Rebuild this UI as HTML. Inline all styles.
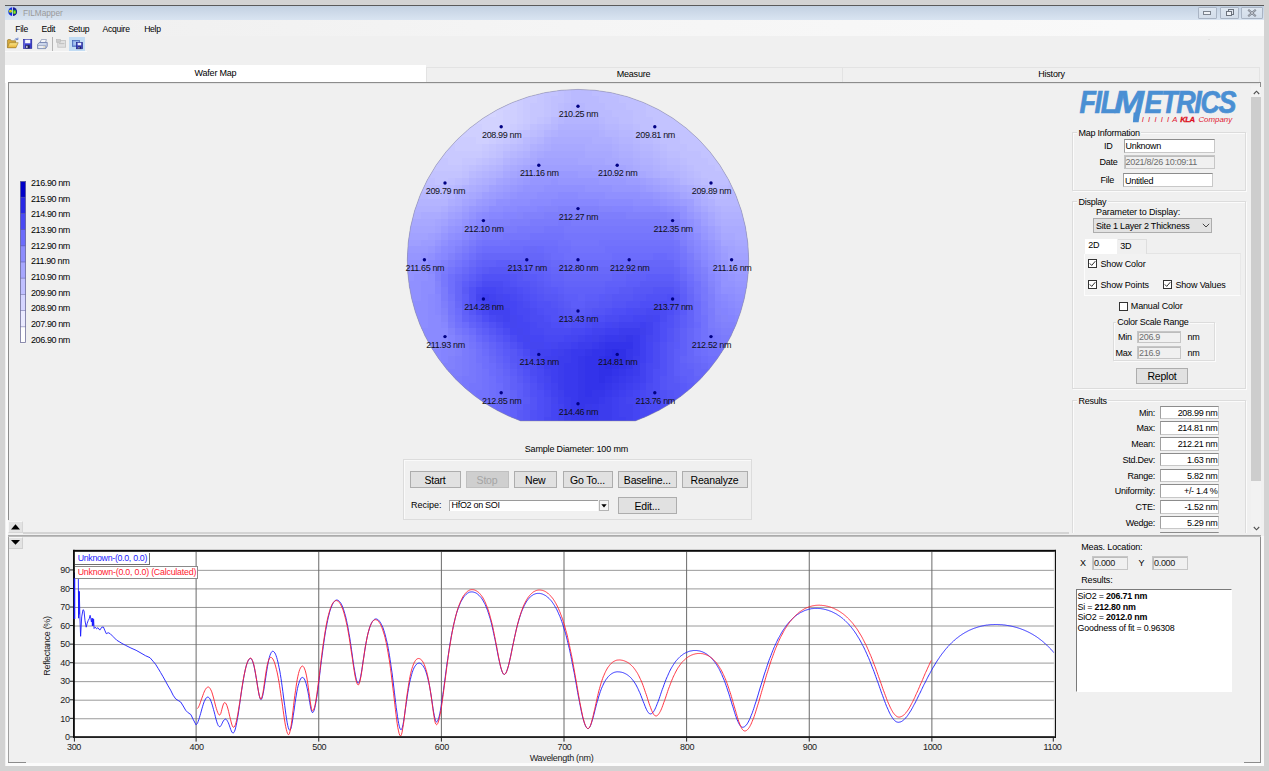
<!DOCTYPE html>
<html><head><meta charset="utf-8"><title>FILMapper</title>
<style>
html,body{margin:0;padding:0;}
body{width:1269px;height:771px;overflow:hidden;background:#d3d3d3;font-family:"Liberation Sans", Arial, sans-serif;position:relative;}
#app{position:absolute;left:0;top:0;width:1269px;height:771px;overflow:hidden;}
#app div{position:absolute;box-sizing:border-box;}
#app svg{position:absolute;overflow:visible;}
</style></head><body><div id="app">
<div style="left:5px;top:5px;width:1259px;height:761px;background:#f0f0f0;"></div>
<div style="left:5px;top:5px;width:1259px;height:1px;background:#5a5a5a;"></div>
<div style="left:5px;top:6px;width:1259px;height:14px;background:linear-gradient(#c3d1e2,#d9e4f1);"></div>
<svg style="left:8px;top:7.4px" width="9.4" height="9.4" viewBox="0 0 10 10">
<defs><clipPath id="gc"><circle cx="5" cy="5" r="4.7"/></clipPath></defs>
<g clip-path="url(#gc)">
<rect x="0" y="0" width="5" height="10" fill="#1426e6"/>
<rect x="5" y="0" width="5" height="10" fill="#141a98"/>
<ellipse cx="2.7" cy="4.6" rx="2.1" ry="1.9" fill="#38c048"/>
<ellipse cx="2.6" cy="4.5" rx="1.5" ry="1.2" fill="#f2e428"/>
<ellipse cx="2.3" cy="4.6" rx="0.9" ry="0.7" fill="#f07818"/>
<ellipse cx="6.9" cy="5.4" rx="1.9" ry="2.4" fill="#2cae34"/>
<ellipse cx="7.1" cy="5.6" rx="0.9" ry="1.3" fill="#b4d428"/>
<path d="M4.3 0 L5.2 0 L5.2 1 L4.9 1.5 L5.2 2 L4.9 2.6 L5.2 3.2 L4.9 3.8 L5.2 4.4 L4.9 5 L5.2 5.6 L4.9 6.2 L5.2 6.8 L4.9 7.4 L5.2 8 L5.2 10 L4.3 10z" fill="#eeeef6"/>
</g>
</svg>
<div style="top:7.30px;font-size:8.3px;line-height:12px;color:#9a9a9a;letter-spacing:-0.05px;white-space:nowrap;left:23px;">FILMapper</div>
<div style="left:1198px;top:6.5px;width:19px;height:12px;background:linear-gradient(#dde6f0,#d3ddea);border:1px solid #a9b4c4;border-radius:1px;"></div>
<div style="left:1220px;top:6.5px;width:19px;height:12px;background:linear-gradient(#dde6f0,#d3ddea);border:1px solid #a9b4c4;border-radius:1px;"></div>
<div style="left:1241px;top:6.5px;width:22px;height:12px;background:linear-gradient(#dde6f0,#d3ddea);border:1px solid #a9b4c4;border-radius:1px;"></div>
<div style="left:1202.5px;top:11.3px;width:8.5px;height:3.4px;background:#eef1f6;border:1px solid #7c838e;"></div>
<div style="left:1227.5px;top:9px;width:6.5px;height:5.5px;background:#dfe5ee;border:1px solid #6c737e;"></div>
<div style="left:1225.5px;top:10.8px;width:6.5px;height:5.5px;background:#eef1f6;border:1px solid #6c737e;"></div>
<svg style="left:1247px;top:9px" width="10" height="8" viewBox="0 0 10 8"><path d="M1.2 0.8 L8.8 7.2 M8.8 0.8 L1.2 7.2" stroke="#6a717c" stroke-width="2.0" fill="none"/><path d="M1.2 0.8 L8.8 7.2 M8.8 0.8 L1.2 7.2" stroke="#e6eaf0" stroke-width="0.7" fill="none"/></svg>
<div style="left:5px;top:20px;width:1259px;height:16px;background:linear-gradient(90deg,#f0f0f0 0%,#f0f0f0 8%,#f5f5f5 45%,#fafafa 100%);"></div>
<div style="top:22.60px;font-size:8.6px;line-height:12px;color:#000;letter-spacing:-0.3px;white-space:nowrap;left:15.3px;">File</div>
<div style="top:22.60px;font-size:8.6px;line-height:12px;color:#000;letter-spacing:-0.3px;white-space:nowrap;left:41.5px;">Edit</div>
<div style="top:22.60px;font-size:8.6px;line-height:12px;color:#000;letter-spacing:-0.3px;white-space:nowrap;left:68.2px;">Setup</div>
<div style="top:22.60px;font-size:8.6px;line-height:12px;color:#000;letter-spacing:-0.3px;white-space:nowrap;left:102.6px;">Acquire</div>
<div style="top:22.60px;font-size:8.6px;line-height:12px;color:#000;letter-spacing:-0.3px;white-space:nowrap;left:144.2px;">Help</div>
<div style="left:5px;top:36px;width:1259px;height:15px;background:#f0f0f0;"></div>
<div style="left:5px;top:51px;width:82px;height:1px;background:#fafafa;"></div>
<svg style="left:7px;top:37px" width="13" height="12" viewBox="0 0 13 12">
<defs><linearGradient id="fg" x1="0" y1="0" x2="0" y2="1"><stop offset="0" stop-color="#fbe88c"/><stop offset="1" stop-color="#e9b236"/></linearGradient></defs>
<path d="M0.4 10.6 L0.4 3.2 L1 2.6 L3.4 2.6 L4.4 3.8 L8.6 3.8 L8.6 10.6z" fill="#d8aa3c" stroke="#8a6c24" stroke-width="0.6"/>
<path d="M0.5 10.7 L2.5 5.7 L11.2 5.7 L9 10.7z" fill="url(#fg)" stroke="#9c7a26" stroke-width="0.6"/>
<path d="M7.6 2.6 Q9 0.9 10.6 2.2 M10.9 0.6 L10.9 2.6 L9 2.6" stroke="#5070c0" stroke-width="0.8" fill="none"/>
</svg>
<svg style="left:23px;top:39px" width="10" height="10" viewBox="0 0 10 10">
<rect x="0.3" y="0.3" width="8.5" height="9.1" fill="#3a3ccc" stroke="#1a1c8c" stroke-width="0.6"/>
<rect x="0.6" y="0.6" width="1" height="8.5" fill="#7a7ce4"/>
<rect x="2.1" y="0.7" width="5.2" height="3.6" fill="#f6f6fe"/>
<rect x="2.5" y="6.2" width="4.2" height="3.2" fill="#22224e"/>
<rect x="3.2" y="6.8" width="1.3" height="2.2" fill="#dcdcec"/>
</svg>
<svg style="left:37px;top:39px" width="11" height="11" viewBox="0 0 11 11">
<path d="M3 3.6 L4.4 0.6 L9.4 0.6 L8.4 3.6z" fill="#ffffff" stroke="#6878a0" stroke-width="0.6"/>
<path d="M0.6 5.4 L2.4 3.4 L10.2 3.4 L10.2 7.2 L8.6 9.6 L0.6 9.6z" fill="#ccd6ea" stroke="#5868a0" stroke-width="0.7"/>
<path d="M0.8 6.6 L8.6 6.6 L8.6 9.4 L0.8 9.4z" fill="#f2f4fa" stroke="#6878a0" stroke-width="0.5"/>
<rect x="6.6" y="7.6" width="1" height="0.8" fill="#c0a020"/>
</svg>
<div style="left:52px;top:37px;width:1px;height:14px;background:#b4b4b4;"></div>
<svg style="left:56px;top:39px" width="11" height="9" viewBox="0 0 11 9">
<rect x="1.8" y="1.6" width="7.8" height="6.6" fill="#e0e0e0" stroke="#c0c0c0" stroke-width="0.8"/>
<rect x="0.5" y="0.4" width="3.8" height="2.8" fill="#cecece" stroke="#b8b8b8" stroke-width="0.6"/>
<path d="M3 4.6 L8.4 4.6" stroke="#bcbcbc" stroke-width="0.9"/>
</svg>
<div style="left:69px;top:36.7px;width:16px;height:14.2px;background:#c2dcf3;"></div>
<svg style="left:72px;top:40px" width="12" height="10" viewBox="0 0 12 10">
<rect x="0.4" y="0.5" width="7" height="5.8" fill="#7aa0e0" stroke="#4060b4" stroke-width="0.7"/>
<rect x="1.4" y="1.5" width="5" height="3.4" fill="#a8c4f0"/>
<rect x="4.3" y="2.4" width="6.2" height="6.4" fill="#3a40bc" stroke="#1c2080" stroke-width="0.6"/>
<rect x="5.6" y="2.8" width="3.6" height="2.5" fill="#eceffc"/>
<rect x="6" y="6.6" width="2.9" height="2.2" fill="#1c1c54"/>
<rect x="6.5" y="7" width="0.9" height="1.5" fill="#d4d4e4"/>
</svg>
<div style="left:1208px;top:39px;width:2px;height:1px;background:#e2e2e2;"></div>
<div style="left:5.8px;top:83px;width:2.2px;height:682.5px;background:#fcfcfc;"></div>
<div style="left:5.8px;top:763px;width:1258.2px;height:2.5px;background:#fbfbfb;"></div>
<div style="left:1261px;top:536px;width:3px;height:229.5px;background:#fafafa;"></div>
<div style="left:5px;top:65px;width:421px;height:18px;background:#ffffff;"></div>
<div style="left:426px;top:67px;width:417px;height:15px;background:#f0f0f0;border:1px solid #e3e3e3;border-bottom:none;"></div>
<div style="left:843px;top:67px;width:417.2px;height:15px;background:#f0f0f0;border:1px solid #e3e3e3;border-bottom:none;border-left:none;"></div>
<div style="top:67.30px;font-size:9px;line-height:12px;color:#000;letter-spacing:-0.2px;white-space:nowrap;left:65.5px;width:300px;text-align:center;">Wafer Map</div>
<div style="top:68.20px;font-size:9px;line-height:12px;color:#000;letter-spacing:-0.2px;white-space:nowrap;left:483.5px;width:300px;text-align:center;">Measure</div>
<div style="top:68.20px;font-size:9px;line-height:12px;color:#000;letter-spacing:-0.2px;white-space:nowrap;left:901.5px;width:300px;text-align:center;">History</div>
<div style="left:8px;top:82px;width:1253px;height:438px;border:1px solid #8c8c8c;border-bottom:none;border-right:none;"></div>
<div style="left:8px;top:82px;width:1253px;height:1px;background:#8c8c8c;"></div>
<div style="left:9px;top:83px;width:1250px;height:1px;background:#e2e2e2;"></div>
<div style="left:8px;top:521px;width:15px;height:12px;background:#e3e3e3;border:1px solid #f6f6f6;border-right-color:#d6d6d6;border-bottom-color:#d6d6d6;"></div>
<svg style="left:11px;top:524px" width="9" height="6" viewBox="0 0 9 6"><path d="M0 5.4 L4.5 0.2 L9 5.4z" fill="#000"/></svg>
<div style="left:23px;top:532px;width:1046px;height:2px;background:#d4d4d4;"></div>
<div style="left:8px;top:535px;width:1253px;height:2px;background:linear-gradient(#b4b4b4,#a2a2a2 50%,#d8d8d8);"></div>
<div style="left:8px;top:537px;width:15px;height:12px;background:#e3e3e3;border:1px solid #f6f6f6;border-right-color:#d0d0d0;border-bottom-color:#d0d0d0;"></div>
<svg style="left:11px;top:540px" width="9" height="5" viewBox="0 0 9 5"><path d="M0 0 L9 0 L4.5 4.8z" fill="#000"/></svg>
<div style="left:8px;top:536px;width:1px;height:227px;background:#a0a0a0;"></div>
<div style="left:1260px;top:536px;width:1px;height:227px;background:#8c8c8c;"></div>
<div style="left:8px;top:762px;width:18px;height:1px;background:#8c8c8c;"></div>
<div style="left:1244px;top:762px;width:17px;height:1px;background:#8c8c8c;"></div>
<svg style="left:0;top:0" width="100" height="400" viewBox="0 0 100 400"><rect x="20" y="181.00" width="6" height="16.50" fill="rgb(0, 0, 200)"/><rect x="20" y="197.20" width="6" height="16.50" fill="rgb(40, 40, 228)"/><rect x="20" y="213.40" width="6" height="16.50" fill="rgb(74, 74, 244)"/><rect x="20" y="229.60" width="6" height="16.50" fill="rgb(108, 108, 251)"/><rect x="20" y="245.80" width="6" height="16.50" fill="rgb(140, 140, 253)"/><rect x="20" y="262.00" width="6" height="16.50" fill="rgb(167, 167, 254)"/><rect x="20" y="278.20" width="6" height="16.50" fill="rgb(192, 192, 255)"/><rect x="20" y="294.40" width="6" height="16.50" fill="rgb(213, 213, 255)"/><rect x="20" y="310.60" width="6" height="16.50" fill="rgb(234, 234, 255)"/><rect x="20" y="326.80" width="6" height="16.50" fill="rgb(255, 255, 255)"/><rect x="20" y="196.80" width="6" height="0.8" fill="#50508c" opacity="0.55"/><rect x="20" y="213.00" width="6" height="0.8" fill="#50508c" opacity="0.55"/><rect x="20" y="229.20" width="6" height="0.8" fill="#50508c" opacity="0.55"/><rect x="20" y="245.40" width="6" height="0.8" fill="#50508c" opacity="0.55"/><rect x="20" y="261.60" width="6" height="0.8" fill="#50508c" opacity="0.55"/><rect x="20" y="277.80" width="6" height="0.8" fill="#50508c" opacity="0.55"/><rect x="20" y="294.00" width="6" height="0.8" fill="#50508c" opacity="0.55"/><rect x="20" y="310.20" width="6" height="0.8" fill="#50508c" opacity="0.55"/><rect x="20" y="326.40" width="6" height="0.8" fill="#50508c" opacity="0.55"/><rect x="20.5" y="181.5" width="5" height="161" fill="none" stroke="#70709a" stroke-width="0.8"/></svg>
<div style="top:177.00px;font-size:9px;line-height:12px;color:#000;letter-spacing:-0.4px;white-space:nowrap;left:31px;">216.90 nm</div>
<div style="top:192.68px;font-size:9px;line-height:12px;color:#000;letter-spacing:-0.4px;white-space:nowrap;left:31px;">215.90 nm</div>
<div style="top:208.36px;font-size:9px;line-height:12px;color:#000;letter-spacing:-0.4px;white-space:nowrap;left:31px;">214.90 nm</div>
<div style="top:224.04px;font-size:9px;line-height:12px;color:#000;letter-spacing:-0.4px;white-space:nowrap;left:31px;">213.90 nm</div>
<div style="top:239.72px;font-size:9px;line-height:12px;color:#000;letter-spacing:-0.4px;white-space:nowrap;left:31px;">212.90 nm</div>
<div style="top:255.40px;font-size:9px;line-height:12px;color:#000;letter-spacing:-0.4px;white-space:nowrap;left:31px;">211.90 nm</div>
<div style="top:271.08px;font-size:9px;line-height:12px;color:#000;letter-spacing:-0.4px;white-space:nowrap;left:31px;">210.90 nm</div>
<div style="top:286.76px;font-size:9px;line-height:12px;color:#000;letter-spacing:-0.4px;white-space:nowrap;left:31px;">209.90 nm</div>
<div style="top:302.44px;font-size:9px;line-height:12px;color:#000;letter-spacing:-0.4px;white-space:nowrap;left:31px;">208.90 nm</div>
<div style="top:318.12px;font-size:9px;line-height:12px;color:#000;letter-spacing:-0.4px;white-space:nowrap;left:31px;">207.90 nm</div>
<div style="top:333.80px;font-size:9px;line-height:12px;color:#000;letter-spacing:-0.4px;white-space:nowrap;left:31px;">206.90 nm</div>
<svg style="left:0;top:0" width="1269" height="771" viewBox="0 0 1269 771" shape-rendering="crispEdges"><defs><clipPath id="wclip"><path d="M407.3 260.1 A170.7 170.7 0 0 1 748.7 260.1 A170.7 170.7 0 0 1 635.29 420.9 L520.71 420.9 A170.7 170.7 0 0 1 407.3 260.1z"/></clipPath></defs><g clip-path="url(#wclip)" shape-rendering="crispEdges"><rect x="407.3" y="89.40000000000003" width="341.4" height="341.4" fill="#8080f8"/><rect x="516.5" y="89.4" width="7.2" height="7.2" fill="#ccccff"/><rect x="523.4" y="89.4" width="14.1" height="7.2" fill="#c9c9ff"/><rect x="537.0" y="89.4" width="7.2" height="7.2" fill="#c6c6ff"/><rect x="543.9" y="89.4" width="14.1" height="7.2" fill="#c3c3ff"/><rect x="557.5" y="89.4" width="7.2" height="7.2" fill="#c0c0ff"/><rect x="564.3" y="89.4" width="7.2" height="7.2" fill="#bdbdff"/><rect x="571.2" y="89.4" width="20.9" height="7.2" fill="#babaff"/><rect x="591.7" y="89.4" width="20.9" height="7.2" fill="#bdbdff"/><rect x="612.1" y="89.4" width="20.9" height="7.2" fill="#c0c0ff"/><rect x="632.6" y="89.4" width="7.2" height="7.2" fill="#c3c3ff"/><rect x="502.9" y="96.2" width="14.1" height="7.2" fill="#cfcfff"/><rect x="516.5" y="96.2" width="7.2" height="7.2" fill="#ccccff"/><rect x="523.4" y="96.2" width="14.1" height="7.2" fill="#c9c9ff"/><rect x="537.0" y="96.2" width="7.2" height="7.2" fill="#c6c6ff"/><rect x="543.9" y="96.2" width="7.2" height="7.2" fill="#c3c3ff"/><rect x="550.7" y="96.2" width="14.1" height="7.2" fill="#c0c0ff"/><rect x="564.3" y="96.2" width="7.2" height="7.2" fill="#bdbdff"/><rect x="571.2" y="96.2" width="27.7" height="7.2" fill="#babaff"/><rect x="598.5" y="96.2" width="20.9" height="7.2" fill="#bdbdff"/><rect x="619.0" y="96.2" width="20.9" height="7.2" fill="#c0c0ff"/><rect x="639.5" y="96.2" width="14.1" height="7.2" fill="#c3c3ff"/><rect x="489.2" y="103.1" width="7.2" height="7.2" fill="#d5d5ff"/><rect x="496.1" y="103.1" width="14.1" height="7.2" fill="#d2d2ff"/><rect x="509.7" y="103.1" width="7.2" height="7.2" fill="#cfcfff"/><rect x="516.5" y="103.1" width="7.2" height="7.2" fill="#ccccff"/><rect x="523.4" y="103.1" width="7.2" height="7.2" fill="#c9c9ff"/><rect x="530.2" y="103.1" width="14.1" height="7.2" fill="#c6c6ff"/><rect x="543.9" y="103.1" width="7.2" height="7.2" fill="#c3c3ff"/><rect x="550.7" y="103.1" width="7.2" height="7.2" fill="#c0c0ff"/><rect x="557.5" y="103.1" width="7.2" height="7.2" fill="#bdbdff"/><rect x="564.3" y="103.1" width="7.2" height="7.2" fill="#babaff"/><rect x="571.2" y="103.1" width="14.1" height="7.2" fill="#b7b7ff"/><rect x="584.8" y="103.1" width="20.9" height="7.2" fill="#babaff"/><rect x="605.3" y="103.1" width="20.9" height="7.2" fill="#bdbdff"/><rect x="625.8" y="103.1" width="20.9" height="7.2" fill="#c0c0ff"/><rect x="646.3" y="103.1" width="20.9" height="7.2" fill="#c3c3ff"/><rect x="475.6" y="109.9" width="14.1" height="7.2" fill="#d2d2ff"/><rect x="489.2" y="109.9" width="7.2" height="7.2" fill="#d5d5ff"/><rect x="496.1" y="109.9" width="7.2" height="7.2" fill="#d2d2ff"/><rect x="502.9" y="109.9" width="14.1" height="7.2" fill="#cfcfff"/><rect x="516.5" y="109.9" width="7.2" height="7.2" fill="#ccccff"/><rect x="523.4" y="109.9" width="7.2" height="7.2" fill="#c9c9ff"/><rect x="530.2" y="109.9" width="14.1" height="7.2" fill="#c6c6ff"/><rect x="543.9" y="109.9" width="7.2" height="7.2" fill="#c3c3ff"/><rect x="550.7" y="109.9" width="7.2" height="7.2" fill="#c0c0ff"/><rect x="557.5" y="109.9" width="7.2" height="7.2" fill="#bdbdff"/><rect x="564.3" y="109.9" width="7.2" height="7.2" fill="#b7b7ff"/><rect x="571.2" y="109.9" width="14.1" height="7.2" fill="#b4b4ff"/><rect x="584.8" y="109.9" width="14.1" height="7.2" fill="#b7b7ff"/><rect x="598.5" y="109.9" width="14.1" height="7.2" fill="#babaff"/><rect x="612.1" y="109.9" width="20.9" height="7.2" fill="#bdbdff"/><rect x="632.6" y="109.9" width="14.1" height="7.2" fill="#c0c0ff"/><rect x="646.3" y="109.9" width="34.5" height="7.2" fill="#c3c3ff"/><rect x="468.8" y="116.7" width="34.5" height="7.2" fill="#d2d2ff"/><rect x="502.9" y="116.7" width="14.1" height="7.2" fill="#cfcfff"/><rect x="516.5" y="116.7" width="7.2" height="7.2" fill="#ccccff"/><rect x="523.4" y="116.7" width="7.2" height="7.2" fill="#c9c9ff"/><rect x="530.2" y="116.7" width="7.2" height="7.2" fill="#c6c6ff"/><rect x="537.0" y="116.7" width="7.2" height="7.2" fill="#c3c3ff"/><rect x="543.9" y="116.7" width="7.2" height="7.2" fill="#c0c0ff"/><rect x="550.7" y="116.7" width="7.2" height="7.2" fill="#babaff"/><rect x="557.5" y="116.7" width="7.2" height="7.2" fill="#b7b7ff"/><rect x="564.3" y="116.7" width="34.5" height="7.2" fill="#b4b4ff"/><rect x="598.5" y="116.7" width="7.2" height="7.2" fill="#b7b7ff"/><rect x="605.3" y="116.7" width="14.1" height="7.2" fill="#babaff"/><rect x="619.0" y="116.7" width="14.1" height="7.2" fill="#bdbdff"/><rect x="632.6" y="116.7" width="20.9" height="7.2" fill="#c0c0ff"/><rect x="653.1" y="116.7" width="34.5" height="7.2" fill="#c3c3ff"/><rect x="461.9" y="123.5" width="20.9" height="7.2" fill="#cfcfff"/><rect x="482.4" y="123.5" width="20.9" height="7.2" fill="#d2d2ff"/><rect x="502.9" y="123.5" width="7.2" height="7.2" fill="#cfcfff"/><rect x="509.7" y="123.5" width="7.2" height="7.2" fill="#ccccff"/><rect x="516.5" y="123.5" width="7.2" height="7.2" fill="#c9c9ff"/><rect x="523.4" y="123.5" width="7.2" height="7.2" fill="#c6c6ff"/><rect x="530.2" y="123.5" width="7.2" height="7.2" fill="#c0c0ff"/><rect x="537.0" y="123.5" width="7.2" height="7.2" fill="#bdbdff"/><rect x="543.9" y="123.5" width="7.2" height="7.2" fill="#babaff"/><rect x="550.7" y="123.5" width="7.2" height="7.2" fill="#b7b7ff"/><rect x="557.5" y="123.5" width="41.4" height="7.2" fill="#b1b1ff"/><rect x="598.5" y="123.5" width="7.2" height="7.2" fill="#b4b4ff"/><rect x="605.3" y="123.5" width="14.1" height="7.2" fill="#b7b7ff"/><rect x="619.0" y="123.5" width="14.1" height="7.2" fill="#babaff"/><rect x="632.6" y="123.5" width="7.2" height="7.2" fill="#bdbdff"/><rect x="639.5" y="123.5" width="14.1" height="7.2" fill="#c0c0ff"/><rect x="653.1" y="123.5" width="41.4" height="7.2" fill="#c3c3ff"/><rect x="455.1" y="130.4" width="48.2" height="7.2" fill="#cfcfff"/><rect x="502.9" y="130.4" width="7.2" height="7.2" fill="#ccccff"/><rect x="509.7" y="130.4" width="7.2" height="7.2" fill="#c9c9ff"/><rect x="516.5" y="130.4" width="7.2" height="7.2" fill="#c3c3ff"/><rect x="523.4" y="130.4" width="7.2" height="7.2" fill="#c0c0ff"/><rect x="530.2" y="130.4" width="7.2" height="7.2" fill="#bdbdff"/><rect x="537.0" y="130.4" width="7.2" height="7.2" fill="#babaff"/><rect x="543.9" y="130.4" width="7.2" height="7.2" fill="#b4b4ff"/><rect x="550.7" y="130.4" width="7.2" height="7.2" fill="#b1b1ff"/><rect x="557.5" y="130.4" width="41.4" height="7.2" fill="#aeaeff"/><rect x="598.5" y="130.4" width="7.2" height="7.2" fill="#b1b1ff"/><rect x="605.3" y="130.4" width="14.1" height="7.2" fill="#b4b4ff"/><rect x="619.0" y="130.4" width="14.1" height="7.2" fill="#b7b7ff"/><rect x="632.6" y="130.4" width="7.2" height="7.2" fill="#babaff"/><rect x="639.5" y="130.4" width="14.1" height="7.2" fill="#bdbdff"/><rect x="653.1" y="130.4" width="14.1" height="7.2" fill="#c0c0ff"/><rect x="666.8" y="130.4" width="34.5" height="7.2" fill="#c3c3ff"/><rect x="448.3" y="137.2" width="27.7" height="7.2" fill="#ccccff"/><rect x="475.6" y="137.2" width="14.1" height="7.2" fill="#cfcfff"/><rect x="489.2" y="137.2" width="7.2" height="7.2" fill="#ccccff"/><rect x="496.1" y="137.2" width="7.2" height="7.2" fill="#c9c9ff"/><rect x="502.9" y="137.2" width="7.2" height="7.2" fill="#c6c6ff"/><rect x="509.7" y="137.2" width="7.2" height="7.2" fill="#c3c3ff"/><rect x="516.5" y="137.2" width="7.2" height="7.2" fill="#c0c0ff"/><rect x="523.4" y="137.2" width="7.2" height="7.2" fill="#babaff"/><rect x="530.2" y="137.2" width="7.2" height="7.2" fill="#b7b7ff"/><rect x="537.0" y="137.2" width="7.2" height="7.2" fill="#b4b4ff"/><rect x="543.9" y="137.2" width="7.2" height="7.2" fill="#aeaeff"/><rect x="550.7" y="137.2" width="41.4" height="7.2" fill="#ababff"/><rect x="591.7" y="137.2" width="20.9" height="7.2" fill="#aeaeff"/><rect x="612.1" y="137.2" width="7.2" height="7.2" fill="#b1b1ff"/><rect x="619.0" y="137.2" width="14.1" height="7.2" fill="#b4b4ff"/><rect x="632.6" y="137.2" width="7.2" height="7.2" fill="#b7b7ff"/><rect x="639.5" y="137.2" width="14.1" height="7.2" fill="#babaff"/><rect x="653.1" y="137.2" width="7.2" height="7.2" fill="#bdbdff"/><rect x="659.9" y="137.2" width="20.9" height="7.2" fill="#c0c0ff"/><rect x="680.4" y="137.2" width="27.7" height="7.2" fill="#c3c3ff"/><rect x="441.4" y="144.0" width="14.1" height="7.2" fill="#c9c9ff"/><rect x="455.1" y="144.0" width="27.7" height="7.2" fill="#ccccff"/><rect x="482.4" y="144.0" width="7.2" height="7.2" fill="#c9c9ff"/><rect x="489.2" y="144.0" width="7.2" height="7.2" fill="#c6c6ff"/><rect x="496.1" y="144.0" width="7.2" height="7.2" fill="#c3c3ff"/><rect x="502.9" y="144.0" width="7.2" height="7.2" fill="#c0c0ff"/><rect x="509.7" y="144.0" width="7.2" height="7.2" fill="#bdbdff"/><rect x="516.5" y="144.0" width="7.2" height="7.2" fill="#babaff"/><rect x="523.4" y="144.0" width="7.2" height="7.2" fill="#b7b7ff"/><rect x="530.2" y="144.0" width="7.2" height="7.2" fill="#b1b1ff"/><rect x="537.0" y="144.0" width="7.2" height="7.2" fill="#aeaeff"/><rect x="543.9" y="144.0" width="7.2" height="7.2" fill="#ababff"/><rect x="550.7" y="144.0" width="34.5" height="7.2" fill="#a8a8ff"/><rect x="584.8" y="144.0" width="27.7" height="7.2" fill="#ababff"/><rect x="612.1" y="144.0" width="7.2" height="7.2" fill="#aeaeff"/><rect x="619.0" y="144.0" width="14.1" height="7.2" fill="#b1b1ff"/><rect x="632.6" y="144.0" width="7.2" height="7.2" fill="#b4b4ff"/><rect x="639.5" y="144.0" width="14.1" height="7.2" fill="#b7b7ff"/><rect x="653.1" y="144.0" width="7.2" height="7.2" fill="#babaff"/><rect x="659.9" y="144.0" width="7.2" height="7.2" fill="#bdbdff"/><rect x="666.8" y="144.0" width="20.9" height="7.2" fill="#c0c0ff"/><rect x="687.2" y="144.0" width="27.7" height="7.2" fill="#c3c3ff"/><rect x="434.6" y="150.9" width="48.2" height="7.2" fill="#c9c9ff"/><rect x="482.4" y="150.9" width="7.2" height="7.2" fill="#c6c6ff"/><rect x="489.2" y="150.9" width="7.2" height="7.2" fill="#c3c3ff"/><rect x="496.1" y="150.9" width="7.2" height="7.2" fill="#c0c0ff"/><rect x="502.9" y="150.9" width="7.2" height="7.2" fill="#babaff"/><rect x="509.7" y="150.9" width="7.2" height="7.2" fill="#b7b7ff"/><rect x="516.5" y="150.9" width="7.2" height="7.2" fill="#b4b4ff"/><rect x="523.4" y="150.9" width="7.2" height="7.2" fill="#b1b1ff"/><rect x="530.2" y="150.9" width="7.2" height="7.2" fill="#ababff"/><rect x="537.0" y="150.9" width="7.2" height="7.2" fill="#a8a8ff"/><rect x="543.9" y="150.9" width="41.4" height="7.2" fill="#a5a5ff"/><rect x="584.8" y="150.9" width="27.7" height="7.2" fill="#a8a8ff"/><rect x="612.1" y="150.9" width="7.2" height="7.2" fill="#ababff"/><rect x="619.0" y="150.9" width="14.1" height="7.2" fill="#aeaeff"/><rect x="632.6" y="150.9" width="7.2" height="7.2" fill="#b1b1ff"/><rect x="639.5" y="150.9" width="14.1" height="7.2" fill="#b4b4ff"/><rect x="653.1" y="150.9" width="7.2" height="7.2" fill="#b7b7ff"/><rect x="659.9" y="150.9" width="7.2" height="7.2" fill="#babaff"/><rect x="666.8" y="150.9" width="14.1" height="7.2" fill="#bdbdff"/><rect x="680.4" y="150.9" width="20.9" height="7.2" fill="#c0c0ff"/><rect x="700.9" y="150.9" width="20.9" height="7.2" fill="#c3c3ff"/><rect x="427.8" y="157.7" width="20.9" height="7.2" fill="#c6c6ff"/><rect x="448.3" y="157.7" width="14.1" height="7.2" fill="#c9c9ff"/><rect x="461.9" y="157.7" width="14.1" height="7.2" fill="#c6c6ff"/><rect x="475.6" y="157.7" width="7.2" height="7.2" fill="#c3c3ff"/><rect x="482.4" y="157.7" width="7.2" height="7.2" fill="#c0c0ff"/><rect x="489.2" y="157.7" width="7.2" height="7.2" fill="#bdbdff"/><rect x="496.1" y="157.7" width="7.2" height="7.2" fill="#babaff"/><rect x="502.9" y="157.7" width="7.2" height="7.2" fill="#b4b4ff"/><rect x="509.7" y="157.7" width="7.2" height="7.2" fill="#b1b1ff"/><rect x="516.5" y="157.7" width="7.2" height="7.2" fill="#aeaeff"/><rect x="523.4" y="157.7" width="7.2" height="7.2" fill="#ababff"/><rect x="530.2" y="157.7" width="7.2" height="7.2" fill="#a8a8ff"/><rect x="537.0" y="157.7" width="41.4" height="7.2" fill="#a2a2ff"/><rect x="578.0" y="157.7" width="27.7" height="7.2" fill="#a5a5ff"/><rect x="605.3" y="157.7" width="14.1" height="7.2" fill="#a8a8ff"/><rect x="619.0" y="157.7" width="14.1" height="7.2" fill="#ababff"/><rect x="632.6" y="157.7" width="7.2" height="7.2" fill="#aeaeff"/><rect x="639.5" y="157.7" width="14.1" height="7.2" fill="#b1b1ff"/><rect x="653.1" y="157.7" width="7.2" height="7.2" fill="#b4b4ff"/><rect x="659.9" y="157.7" width="7.2" height="7.2" fill="#b7b7ff"/><rect x="666.8" y="157.7" width="14.1" height="7.2" fill="#babaff"/><rect x="680.4" y="157.7" width="7.2" height="7.2" fill="#bdbdff"/><rect x="687.2" y="157.7" width="20.9" height="7.2" fill="#c0c0ff"/><rect x="707.7" y="157.7" width="20.9" height="7.2" fill="#c3c3ff"/><rect x="427.8" y="164.5" width="34.5" height="7.2" fill="#c6c6ff"/><rect x="461.9" y="164.5" width="7.2" height="7.2" fill="#c3c3ff"/><rect x="468.8" y="164.5" width="7.2" height="7.2" fill="#c0c0ff"/><rect x="475.6" y="164.5" width="7.2" height="7.2" fill="#bdbdff"/><rect x="482.4" y="164.5" width="7.2" height="7.2" fill="#babaff"/><rect x="489.2" y="164.5" width="7.2" height="7.2" fill="#b7b7ff"/><rect x="496.1" y="164.5" width="7.2" height="7.2" fill="#b4b4ff"/><rect x="502.9" y="164.5" width="7.2" height="7.2" fill="#aeaeff"/><rect x="509.7" y="164.5" width="7.2" height="7.2" fill="#ababff"/><rect x="516.5" y="164.5" width="7.2" height="7.2" fill="#a8a8ff"/><rect x="523.4" y="164.5" width="7.2" height="7.2" fill="#a5a5ff"/><rect x="530.2" y="164.5" width="61.9" height="7.2" fill="#9f9fff"/><rect x="591.7" y="164.5" width="20.9" height="7.2" fill="#a2a2ff"/><rect x="612.1" y="164.5" width="14.1" height="7.2" fill="#a5a5ff"/><rect x="625.8" y="164.5" width="7.2" height="7.2" fill="#a8a8ff"/><rect x="632.6" y="164.5" width="7.2" height="7.2" fill="#ababff"/><rect x="639.5" y="164.5" width="14.1" height="7.2" fill="#aeaeff"/><rect x="653.1" y="164.5" width="7.2" height="7.2" fill="#b1b1ff"/><rect x="659.9" y="164.5" width="7.2" height="7.2" fill="#b4b4ff"/><rect x="666.8" y="164.5" width="14.1" height="7.2" fill="#b7b7ff"/><rect x="680.4" y="164.5" width="7.2" height="7.2" fill="#babaff"/><rect x="687.2" y="164.5" width="7.2" height="7.2" fill="#bdbdff"/><rect x="694.1" y="164.5" width="20.9" height="7.2" fill="#c0c0ff"/><rect x="714.6" y="164.5" width="14.1" height="7.2" fill="#c3c3ff"/><rect x="421.0" y="171.3" width="41.4" height="7.2" fill="#c3c3ff"/><rect x="461.9" y="171.3" width="7.2" height="7.2" fill="#c0c0ff"/><rect x="468.8" y="171.3" width="7.2" height="7.2" fill="#babaff"/><rect x="475.6" y="171.3" width="7.2" height="7.2" fill="#b7b7ff"/><rect x="482.4" y="171.3" width="7.2" height="7.2" fill="#b4b4ff"/><rect x="489.2" y="171.3" width="7.2" height="7.2" fill="#b1b1ff"/><rect x="496.1" y="171.3" width="7.2" height="7.2" fill="#aeaeff"/><rect x="502.9" y="171.3" width="7.2" height="7.2" fill="#a8a8ff"/><rect x="509.7" y="171.3" width="7.2" height="7.2" fill="#a5a5ff"/><rect x="516.5" y="171.3" width="7.2" height="7.2" fill="#a2a2ff"/><rect x="523.4" y="171.3" width="7.2" height="7.2" fill="#9f9fff"/><rect x="530.2" y="171.3" width="7.2" height="7.2" fill="#9c9cff"/><rect x="537.0" y="171.3" width="41.4" height="7.2" fill="#9999ff"/><rect x="578.0" y="171.3" width="27.7" height="7.2" fill="#9c9cff"/><rect x="605.3" y="171.3" width="20.9" height="7.2" fill="#9f9fff"/><rect x="625.8" y="171.3" width="7.2" height="7.2" fill="#a2a2ff"/><rect x="632.6" y="171.3" width="7.2" height="7.2" fill="#a5a5ff"/><rect x="639.5" y="171.3" width="7.2" height="7.2" fill="#a8a8ff"/><rect x="646.3" y="171.3" width="7.2" height="7.2" fill="#ababff"/><rect x="653.1" y="171.3" width="7.2" height="7.2" fill="#aeaeff"/><rect x="659.9" y="171.3" width="14.1" height="7.2" fill="#b1b1ff"/><rect x="673.6" y="171.3" width="7.2" height="7.2" fill="#b4b4ff"/><rect x="680.4" y="171.3" width="7.2" height="7.2" fill="#b7b7ff"/><rect x="687.2" y="171.3" width="7.2" height="7.2" fill="#babaff"/><rect x="694.1" y="171.3" width="7.2" height="7.2" fill="#bdbdff"/><rect x="700.9" y="171.3" width="34.5" height="7.2" fill="#c0c0ff"/><rect x="421.0" y="178.2" width="14.1" height="7.2" fill="#c0c0ff"/><rect x="434.6" y="178.2" width="14.1" height="7.2" fill="#c3c3ff"/><rect x="448.3" y="178.2" width="7.2" height="7.2" fill="#c0c0ff"/><rect x="455.1" y="178.2" width="7.2" height="7.2" fill="#bdbdff"/><rect x="461.9" y="178.2" width="7.2" height="7.2" fill="#babaff"/><rect x="468.8" y="178.2" width="7.2" height="7.2" fill="#b4b4ff"/><rect x="475.6" y="178.2" width="7.2" height="7.2" fill="#b1b1ff"/><rect x="482.4" y="178.2" width="7.2" height="7.2" fill="#aeaeff"/><rect x="489.2" y="178.2" width="7.2" height="7.2" fill="#ababff"/><rect x="496.1" y="178.2" width="7.2" height="7.2" fill="#a5a5ff"/><rect x="502.9" y="178.2" width="7.2" height="7.2" fill="#a2a2ff"/><rect x="509.7" y="178.2" width="7.2" height="7.2" fill="#9f9fff"/><rect x="516.5" y="178.2" width="7.2" height="7.2" fill="#9c9cff"/><rect x="523.4" y="178.2" width="7.2" height="7.2" fill="#9999ff"/><rect x="530.2" y="178.2" width="20.9" height="7.2" fill="#9696ff"/><rect x="550.7" y="178.2" width="7.2" height="7.2" fill="#9393ff"/><rect x="557.5" y="178.2" width="41.4" height="7.2" fill="#9696ff"/><rect x="598.5" y="178.2" width="27.7" height="7.2" fill="#9999ff"/><rect x="625.8" y="178.2" width="14.1" height="7.2" fill="#9c9cff"/><rect x="639.5" y="178.2" width="7.2" height="7.2" fill="#9f9fff"/><rect x="646.3" y="178.2" width="7.2" height="7.2" fill="#a2a2ff"/><rect x="653.1" y="178.2" width="7.2" height="7.2" fill="#a5a5ff"/><rect x="659.9" y="178.2" width="7.2" height="7.2" fill="#a8a8ff"/><rect x="666.8" y="178.2" width="7.2" height="7.2" fill="#ababff"/><rect x="673.6" y="178.2" width="7.2" height="7.2" fill="#aeaeff"/><rect x="680.4" y="178.2" width="7.2" height="7.2" fill="#b4b4ff"/><rect x="687.2" y="178.2" width="7.2" height="7.2" fill="#b7b7ff"/><rect x="694.1" y="178.2" width="7.2" height="7.2" fill="#babaff"/><rect x="700.9" y="178.2" width="7.2" height="7.2" fill="#bdbdff"/><rect x="707.7" y="178.2" width="20.9" height="7.2" fill="#c0c0ff"/><rect x="728.2" y="178.2" width="7.2" height="7.2" fill="#bdbdff"/><rect x="414.1" y="185.0" width="7.2" height="7.2" fill="#babaff"/><rect x="421.0" y="185.0" width="27.7" height="7.2" fill="#bdbdff"/><rect x="448.3" y="185.0" width="7.2" height="7.2" fill="#babaff"/><rect x="455.1" y="185.0" width="7.2" height="7.2" fill="#b7b7ff"/><rect x="461.9" y="185.0" width="7.2" height="7.2" fill="#b1b1ff"/><rect x="468.8" y="185.0" width="7.2" height="7.2" fill="#aeaeff"/><rect x="475.6" y="185.0" width="7.2" height="7.2" fill="#ababff"/><rect x="482.4" y="185.0" width="7.2" height="7.2" fill="#a8a8ff"/><rect x="489.2" y="185.0" width="7.2" height="7.2" fill="#a2a2ff"/><rect x="496.1" y="185.0" width="7.2" height="7.2" fill="#9f9fff"/><rect x="502.9" y="185.0" width="7.2" height="7.2" fill="#9c9cff"/><rect x="509.7" y="185.0" width="7.2" height="7.2" fill="#9999ff"/><rect x="516.5" y="185.0" width="7.2" height="7.2" fill="#9696ff"/><rect x="523.4" y="185.0" width="20.9" height="7.2" fill="#9393ff"/><rect x="543.9" y="185.0" width="41.4" height="7.2" fill="#9090ff"/><rect x="584.8" y="185.0" width="27.7" height="7.2" fill="#9393ff"/><rect x="612.1" y="185.0" width="27.7" height="7.2" fill="#9696ff"/><rect x="639.5" y="185.0" width="7.2" height="7.2" fill="#9999ff"/><rect x="646.3" y="185.0" width="7.2" height="7.2" fill="#9c9cff"/><rect x="653.1" y="185.0" width="7.2" height="7.2" fill="#9f9fff"/><rect x="659.9" y="185.0" width="7.2" height="7.2" fill="#a2a2ff"/><rect x="666.8" y="185.0" width="7.2" height="7.2" fill="#a5a5ff"/><rect x="673.6" y="185.0" width="7.2" height="7.2" fill="#a8a8ff"/><rect x="680.4" y="185.0" width="7.2" height="7.2" fill="#ababff"/><rect x="687.2" y="185.0" width="7.2" height="7.2" fill="#aeaeff"/><rect x="694.1" y="185.0" width="7.2" height="7.2" fill="#b4b4ff"/><rect x="700.9" y="185.0" width="7.2" height="7.2" fill="#b7b7ff"/><rect x="707.7" y="185.0" width="20.9" height="7.2" fill="#bdbdff"/><rect x="728.2" y="185.0" width="14.1" height="7.2" fill="#babaff"/><rect x="414.1" y="191.8" width="14.1" height="7.2" fill="#b7b7ff"/><rect x="427.8" y="191.8" width="14.1" height="7.2" fill="#babaff"/><rect x="441.4" y="191.8" width="7.2" height="7.2" fill="#b7b7ff"/><rect x="448.3" y="191.8" width="7.2" height="7.2" fill="#b4b4ff"/><rect x="455.1" y="191.8" width="7.2" height="7.2" fill="#aeaeff"/><rect x="461.9" y="191.8" width="7.2" height="7.2" fill="#ababff"/><rect x="468.8" y="191.8" width="7.2" height="7.2" fill="#a8a8ff"/><rect x="475.6" y="191.8" width="7.2" height="7.2" fill="#a5a5ff"/><rect x="482.4" y="191.8" width="7.2" height="7.2" fill="#9f9fff"/><rect x="489.2" y="191.8" width="7.2" height="7.2" fill="#9c9cff"/><rect x="496.1" y="191.8" width="7.2" height="7.2" fill="#9999ff"/><rect x="502.9" y="191.8" width="7.2" height="7.2" fill="#9696ff"/><rect x="509.7" y="191.8" width="7.2" height="7.2" fill="#9393ff"/><rect x="516.5" y="191.8" width="20.9" height="7.2" fill="#9090ff"/><rect x="537.0" y="191.8" width="20.9" height="7.2" fill="#8d8dff"/><rect x="557.5" y="191.8" width="20.9" height="7.2" fill="#8a8aff"/><rect x="578.0" y="191.8" width="27.7" height="7.2" fill="#8d8dff"/><rect x="605.3" y="191.8" width="34.5" height="7.2" fill="#9090ff"/><rect x="639.5" y="191.8" width="14.1" height="7.2" fill="#9393ff"/><rect x="653.1" y="191.8" width="7.2" height="7.2" fill="#9696ff"/><rect x="659.9" y="191.8" width="7.2" height="7.2" fill="#9999ff"/><rect x="666.8" y="191.8" width="7.2" height="7.2" fill="#9c9cff"/><rect x="673.6" y="191.8" width="7.2" height="7.2" fill="#9f9fff"/><rect x="680.4" y="191.8" width="7.2" height="7.2" fill="#a5a5ff"/><rect x="687.2" y="191.8" width="7.2" height="7.2" fill="#a8a8ff"/><rect x="694.1" y="191.8" width="7.2" height="7.2" fill="#ababff"/><rect x="700.9" y="191.8" width="7.2" height="7.2" fill="#b1b1ff"/><rect x="707.7" y="191.8" width="7.2" height="7.2" fill="#b7b7ff"/><rect x="714.6" y="191.8" width="14.1" height="7.2" fill="#babaff"/><rect x="728.2" y="191.8" width="7.2" height="7.2" fill="#b7b7ff"/><rect x="735.0" y="191.8" width="7.2" height="7.2" fill="#babaff"/><rect x="407.3" y="198.6" width="41.4" height="7.2" fill="#b4b4ff"/><rect x="448.3" y="198.6" width="7.2" height="7.2" fill="#aeaeff"/><rect x="455.1" y="198.6" width="7.2" height="7.2" fill="#ababff"/><rect x="461.9" y="198.6" width="7.2" height="7.2" fill="#a5a5ff"/><rect x="468.8" y="198.6" width="7.2" height="7.2" fill="#a2a2ff"/><rect x="475.6" y="198.6" width="7.2" height="7.2" fill="#9c9cff"/><rect x="482.4" y="198.6" width="7.2" height="7.2" fill="#9999ff"/><rect x="489.2" y="198.6" width="7.2" height="7.2" fill="#9696ff"/><rect x="496.1" y="198.6" width="14.1" height="7.2" fill="#9090ff"/><rect x="509.7" y="198.6" width="20.9" height="7.2" fill="#8d8dff"/><rect x="530.2" y="198.6" width="20.9" height="7.2" fill="#8a8aff"/><rect x="550.7" y="198.6" width="48.2" height="7.2" fill="#8787ff"/><rect x="598.5" y="198.6" width="34.5" height="7.2" fill="#8a8aff"/><rect x="632.6" y="198.6" width="20.9" height="7.2" fill="#8d8dff"/><rect x="653.1" y="198.6" width="7.2" height="7.2" fill="#9090ff"/><rect x="659.9" y="198.6" width="7.2" height="7.2" fill="#9393ff"/><rect x="666.8" y="198.6" width="7.2" height="7.2" fill="#9696ff"/><rect x="673.6" y="198.6" width="7.2" height="7.2" fill="#9999ff"/><rect x="680.4" y="198.6" width="7.2" height="7.2" fill="#9c9cff"/><rect x="687.2" y="198.6" width="7.2" height="7.2" fill="#9f9fff"/><rect x="694.1" y="198.6" width="7.2" height="7.2" fill="#a8a8ff"/><rect x="700.9" y="198.6" width="7.2" height="7.2" fill="#aeaeff"/><rect x="707.7" y="198.6" width="7.2" height="7.2" fill="#b1b1ff"/><rect x="714.6" y="198.6" width="34.5" height="7.2" fill="#b7b7ff"/><rect x="407.3" y="205.5" width="34.5" height="7.2" fill="#b1b1ff"/><rect x="441.4" y="205.5" width="7.2" height="7.2" fill="#aeaeff"/><rect x="448.3" y="205.5" width="7.2" height="7.2" fill="#a8a8ff"/><rect x="455.1" y="205.5" width="7.2" height="7.2" fill="#a5a5ff"/><rect x="461.9" y="205.5" width="7.2" height="7.2" fill="#9f9fff"/><rect x="468.8" y="205.5" width="7.2" height="7.2" fill="#9999ff"/><rect x="475.6" y="205.5" width="7.2" height="7.2" fill="#9696ff"/><rect x="482.4" y="205.5" width="7.2" height="7.2" fill="#9393ff"/><rect x="489.2" y="205.5" width="14.1" height="7.2" fill="#8d8dff"/><rect x="502.9" y="205.5" width="14.1" height="7.2" fill="#8a8aff"/><rect x="516.5" y="205.5" width="20.9" height="7.2" fill="#8787ff"/><rect x="537.0" y="205.5" width="7.2" height="7.2" fill="#8484ff"/><rect x="543.9" y="205.5" width="14.1" height="7.2" fill="#8484fc"/><rect x="557.5" y="205.5" width="41.4" height="7.2" fill="#8181fc"/><rect x="598.5" y="205.5" width="14.1" height="7.2" fill="#8484fc"/><rect x="612.1" y="205.5" width="20.9" height="7.2" fill="#8484ff"/><rect x="632.6" y="205.5" width="27.7" height="7.2" fill="#8787ff"/><rect x="659.9" y="205.5" width="7.2" height="7.2" fill="#8a8aff"/><rect x="666.8" y="205.5" width="7.2" height="7.2" fill="#8d8dff"/><rect x="673.6" y="205.5" width="7.2" height="7.2" fill="#9090ff"/><rect x="680.4" y="205.5" width="7.2" height="7.2" fill="#9393ff"/><rect x="687.2" y="205.5" width="7.2" height="7.2" fill="#9c9cff"/><rect x="694.1" y="205.5" width="7.2" height="7.2" fill="#a2a2ff"/><rect x="700.9" y="205.5" width="7.2" height="7.2" fill="#a8a8ff"/><rect x="707.7" y="205.5" width="7.2" height="7.2" fill="#aeaeff"/><rect x="714.6" y="205.5" width="7.2" height="7.2" fill="#b1b1ff"/><rect x="721.4" y="205.5" width="27.7" height="7.2" fill="#b4b4ff"/><rect x="407.3" y="212.3" width="14.1" height="7.2" fill="#aeaeff"/><rect x="421.0" y="212.3" width="20.9" height="7.2" fill="#ababff"/><rect x="441.4" y="212.3" width="7.2" height="7.2" fill="#a8a8ff"/><rect x="448.3" y="212.3" width="7.2" height="7.2" fill="#a2a2ff"/><rect x="455.1" y="212.3" width="7.2" height="7.2" fill="#9f9fff"/><rect x="461.9" y="212.3" width="7.2" height="7.2" fill="#9999ff"/><rect x="468.8" y="212.3" width="7.2" height="7.2" fill="#9393ff"/><rect x="475.6" y="212.3" width="7.2" height="7.2" fill="#8d8dff"/><rect x="482.4" y="212.3" width="7.2" height="7.2" fill="#8a8aff"/><rect x="489.2" y="212.3" width="14.1" height="7.2" fill="#8787ff"/><rect x="502.9" y="212.3" width="14.1" height="7.2" fill="#8484ff"/><rect x="516.5" y="212.3" width="7.2" height="7.2" fill="#8484fc"/><rect x="523.4" y="212.3" width="20.9" height="7.2" fill="#8181fc"/><rect x="543.9" y="212.3" width="82.3" height="7.2" fill="#7e7efc"/><rect x="625.8" y="212.3" width="41.4" height="7.2" fill="#8181fc"/><rect x="666.8" y="212.3" width="7.2" height="7.2" fill="#8484fc"/><rect x="673.6" y="212.3" width="7.2" height="7.2" fill="#8787ff"/><rect x="680.4" y="212.3" width="7.2" height="7.2" fill="#9090ff"/><rect x="687.2" y="212.3" width="7.2" height="7.2" fill="#9696ff"/><rect x="694.1" y="212.3" width="7.2" height="7.2" fill="#9c9cff"/><rect x="700.9" y="212.3" width="7.2" height="7.2" fill="#a2a2ff"/><rect x="707.7" y="212.3" width="7.2" height="7.2" fill="#a8a8ff"/><rect x="714.6" y="212.3" width="7.2" height="7.2" fill="#aeaeff"/><rect x="721.4" y="212.3" width="27.7" height="7.2" fill="#b1b1ff"/><rect x="407.3" y="219.1" width="27.7" height="7.2" fill="#a8a8ff"/><rect x="434.6" y="219.1" width="7.2" height="7.2" fill="#a5a5ff"/><rect x="441.4" y="219.1" width="7.2" height="7.2" fill="#a2a2ff"/><rect x="448.3" y="219.1" width="7.2" height="7.2" fill="#9c9cff"/><rect x="455.1" y="219.1" width="7.2" height="7.2" fill="#9999ff"/><rect x="461.9" y="219.1" width="7.2" height="7.2" fill="#9393ff"/><rect x="468.8" y="219.1" width="7.2" height="7.2" fill="#8d8dff"/><rect x="475.6" y="219.1" width="7.2" height="7.2" fill="#8787ff"/><rect x="482.4" y="219.1" width="7.2" height="7.2" fill="#8484fc"/><rect x="489.2" y="219.1" width="20.9" height="7.2" fill="#8181fc"/><rect x="509.7" y="219.1" width="20.9" height="7.2" fill="#7e7efc"/><rect x="530.2" y="219.1" width="27.7" height="7.2" fill="#7b7bfc"/><rect x="557.5" y="219.1" width="14.1" height="7.2" fill="#7878fc"/><rect x="571.2" y="219.1" width="89.2" height="7.2" fill="#7b7bfc"/><rect x="659.9" y="219.1" width="14.1" height="7.2" fill="#7e7efc"/><rect x="673.6" y="219.1" width="7.2" height="7.2" fill="#8181fc"/><rect x="680.4" y="219.1" width="7.2" height="7.2" fill="#8a8aff"/><rect x="687.2" y="219.1" width="7.2" height="7.2" fill="#9090ff"/><rect x="694.1" y="219.1" width="7.2" height="7.2" fill="#9696ff"/><rect x="700.9" y="219.1" width="7.2" height="7.2" fill="#9f9fff"/><rect x="707.7" y="219.1" width="7.2" height="7.2" fill="#a5a5ff"/><rect x="714.6" y="219.1" width="7.2" height="7.2" fill="#ababff"/><rect x="721.4" y="219.1" width="27.7" height="7.2" fill="#aeaeff"/><rect x="407.3" y="226.0" width="27.7" height="7.2" fill="#a5a5ff"/><rect x="434.6" y="226.0" width="7.2" height="7.2" fill="#a2a2ff"/><rect x="441.4" y="226.0" width="7.2" height="7.2" fill="#9c9cff"/><rect x="448.3" y="226.0" width="7.2" height="7.2" fill="#9696ff"/><rect x="455.1" y="226.0" width="7.2" height="7.2" fill="#9393ff"/><rect x="461.9" y="226.0" width="7.2" height="7.2" fill="#8d8dff"/><rect x="468.8" y="226.0" width="7.2" height="7.2" fill="#8787ff"/><rect x="475.6" y="226.0" width="7.2" height="7.2" fill="#8181fc"/><rect x="482.4" y="226.0" width="14.1" height="7.2" fill="#7e7efc"/><rect x="496.1" y="226.0" width="20.9" height="7.2" fill="#7b7bfc"/><rect x="516.5" y="226.0" width="27.7" height="7.2" fill="#7878fc"/><rect x="543.9" y="226.0" width="20.9" height="7.2" fill="#7575fc"/><rect x="564.3" y="226.0" width="109.6" height="7.2" fill="#7878fc"/><rect x="673.6" y="226.0" width="7.2" height="7.2" fill="#7e7efc"/><rect x="680.4" y="226.0" width="7.2" height="7.2" fill="#8484ff"/><rect x="687.2" y="226.0" width="7.2" height="7.2" fill="#8d8dff"/><rect x="694.1" y="226.0" width="7.2" height="7.2" fill="#9393ff"/><rect x="700.9" y="226.0" width="7.2" height="7.2" fill="#9999ff"/><rect x="707.7" y="226.0" width="7.2" height="7.2" fill="#9f9fff"/><rect x="714.6" y="226.0" width="7.2" height="7.2" fill="#a5a5ff"/><rect x="721.4" y="226.0" width="27.7" height="7.2" fill="#ababff"/><rect x="407.3" y="232.8" width="20.9" height="7.2" fill="#a2a2ff"/><rect x="427.8" y="232.8" width="7.2" height="7.2" fill="#9f9fff"/><rect x="434.6" y="232.8" width="7.2" height="7.2" fill="#9c9cff"/><rect x="441.4" y="232.8" width="7.2" height="7.2" fill="#9696ff"/><rect x="448.3" y="232.8" width="7.2" height="7.2" fill="#9090ff"/><rect x="455.1" y="232.8" width="7.2" height="7.2" fill="#8d8dff"/><rect x="461.9" y="232.8" width="7.2" height="7.2" fill="#8787ff"/><rect x="468.8" y="232.8" width="7.2" height="7.2" fill="#8181fc"/><rect x="475.6" y="232.8" width="7.2" height="7.2" fill="#7b7bfc"/><rect x="482.4" y="232.8" width="20.9" height="7.2" fill="#7878fc"/><rect x="502.9" y="232.8" width="27.7" height="7.2" fill="#7575fc"/><rect x="530.2" y="232.8" width="34.5" height="7.2" fill="#7272fc"/><rect x="564.3" y="232.8" width="109.6" height="7.2" fill="#7575fc"/><rect x="673.6" y="232.8" width="7.2" height="7.2" fill="#7b7bfc"/><rect x="680.4" y="232.8" width="7.2" height="7.2" fill="#8181fc"/><rect x="687.2" y="232.8" width="7.2" height="7.2" fill="#8787ff"/><rect x="694.1" y="232.8" width="7.2" height="7.2" fill="#8d8dff"/><rect x="700.9" y="232.8" width="7.2" height="7.2" fill="#9696ff"/><rect x="707.7" y="232.8" width="7.2" height="7.2" fill="#9c9cff"/><rect x="714.6" y="232.8" width="7.2" height="7.2" fill="#a2a2ff"/><rect x="721.4" y="232.8" width="14.1" height="7.2" fill="#a8a8ff"/><rect x="735.0" y="232.8" width="14.1" height="7.2" fill="#ababff"/><rect x="407.3" y="239.6" width="14.1" height="7.2" fill="#9f9fff"/><rect x="421.0" y="239.6" width="14.1" height="7.2" fill="#9c9cff"/><rect x="434.6" y="239.6" width="7.2" height="7.2" fill="#9696ff"/><rect x="441.4" y="239.6" width="7.2" height="7.2" fill="#9090ff"/><rect x="448.3" y="239.6" width="7.2" height="7.2" fill="#8a8aff"/><rect x="455.1" y="239.6" width="7.2" height="7.2" fill="#8787ff"/><rect x="461.9" y="239.6" width="7.2" height="7.2" fill="#8181fc"/><rect x="468.8" y="239.6" width="7.2" height="7.2" fill="#7b7bfc"/><rect x="475.6" y="239.6" width="7.2" height="7.2" fill="#7575fc"/><rect x="482.4" y="239.6" width="27.7" height="7.2" fill="#7272fc"/><rect x="509.7" y="239.6" width="48.2" height="7.2" fill="#6f6ffc"/><rect x="557.5" y="239.6" width="14.1" height="7.2" fill="#7272fc"/><rect x="571.2" y="239.6" width="27.7" height="7.2" fill="#7575fc"/><rect x="598.5" y="239.6" width="75.5" height="7.2" fill="#7272fc"/><rect x="673.6" y="239.6" width="7.2" height="7.2" fill="#7575fc"/><rect x="680.4" y="239.6" width="7.2" height="7.2" fill="#7e7efc"/><rect x="687.2" y="239.6" width="7.2" height="7.2" fill="#8484fc"/><rect x="694.1" y="239.6" width="7.2" height="7.2" fill="#8a8aff"/><rect x="700.9" y="239.6" width="7.2" height="7.2" fill="#9090ff"/><rect x="707.7" y="239.6" width="7.2" height="7.2" fill="#9696ff"/><rect x="714.6" y="239.6" width="7.2" height="7.2" fill="#9c9cff"/><rect x="721.4" y="239.6" width="14.1" height="7.2" fill="#a5a5ff"/><rect x="735.0" y="239.6" width="14.1" height="7.2" fill="#a8a8ff"/><rect x="407.3" y="246.4" width="20.9" height="7.2" fill="#9999ff"/><rect x="427.8" y="246.4" width="7.2" height="7.2" fill="#9696ff"/><rect x="434.6" y="246.4" width="7.2" height="7.2" fill="#9090ff"/><rect x="441.4" y="246.4" width="7.2" height="7.2" fill="#8a8aff"/><rect x="448.3" y="246.4" width="7.2" height="7.2" fill="#8787ff"/><rect x="455.1" y="246.4" width="7.2" height="7.2" fill="#8181fc"/><rect x="461.9" y="246.4" width="7.2" height="7.2" fill="#7b7bfc"/><rect x="468.8" y="246.4" width="7.2" height="7.2" fill="#7575fc"/><rect x="475.6" y="246.4" width="7.2" height="7.2" fill="#6f6ffc"/><rect x="482.4" y="246.4" width="41.4" height="7.2" fill="#6c6cfc"/><rect x="523.4" y="246.4" width="7.2" height="7.2" fill="#6969fc"/><rect x="530.2" y="246.4" width="7.2" height="7.2" fill="#6969f9"/><rect x="537.0" y="246.4" width="7.2" height="7.2" fill="#6969fc"/><rect x="543.9" y="246.4" width="14.1" height="7.2" fill="#6c6cfc"/><rect x="557.5" y="246.4" width="14.1" height="7.2" fill="#6f6ffc"/><rect x="571.2" y="246.4" width="34.5" height="7.2" fill="#7272fc"/><rect x="605.3" y="246.4" width="68.7" height="7.2" fill="#6f6ffc"/><rect x="673.6" y="246.4" width="7.2" height="7.2" fill="#7272fc"/><rect x="680.4" y="246.4" width="7.2" height="7.2" fill="#7878fc"/><rect x="687.2" y="246.4" width="7.2" height="7.2" fill="#8181fc"/><rect x="694.1" y="246.4" width="7.2" height="7.2" fill="#8787ff"/><rect x="700.9" y="246.4" width="7.2" height="7.2" fill="#8d8dff"/><rect x="707.7" y="246.4" width="7.2" height="7.2" fill="#9393ff"/><rect x="714.6" y="246.4" width="7.2" height="7.2" fill="#9999ff"/><rect x="721.4" y="246.4" width="7.2" height="7.2" fill="#9f9fff"/><rect x="728.2" y="246.4" width="7.2" height="7.2" fill="#a2a2ff"/><rect x="735.0" y="246.4" width="14.1" height="7.2" fill="#a5a5ff"/><rect x="407.3" y="253.3" width="14.1" height="7.2" fill="#9696ff"/><rect x="421.0" y="253.3" width="7.2" height="7.2" fill="#9393ff"/><rect x="427.8" y="253.3" width="7.2" height="7.2" fill="#9090ff"/><rect x="434.6" y="253.3" width="7.2" height="7.2" fill="#8a8aff"/><rect x="441.4" y="253.3" width="7.2" height="7.2" fill="#8787ff"/><rect x="448.3" y="253.3" width="7.2" height="7.2" fill="#8181fc"/><rect x="455.1" y="253.3" width="7.2" height="7.2" fill="#7b7bfc"/><rect x="461.9" y="253.3" width="7.2" height="7.2" fill="#7575fc"/><rect x="468.8" y="253.3" width="7.2" height="7.2" fill="#6f6ffc"/><rect x="475.6" y="253.3" width="7.2" height="7.2" fill="#6969f9"/><rect x="482.4" y="253.3" width="61.9" height="7.2" fill="#6666f9"/><rect x="543.9" y="253.3" width="7.2" height="7.2" fill="#6969f9"/><rect x="550.7" y="253.3" width="14.1" height="7.2" fill="#6c6cfc"/><rect x="564.3" y="253.3" width="48.2" height="7.2" fill="#6f6ffc"/><rect x="612.1" y="253.3" width="41.4" height="7.2" fill="#6c6cfc"/><rect x="653.1" y="253.3" width="14.1" height="7.2" fill="#6969fc"/><rect x="666.8" y="253.3" width="7.2" height="7.2" fill="#6c6cfc"/><rect x="673.6" y="253.3" width="7.2" height="7.2" fill="#6f6ffc"/><rect x="680.4" y="253.3" width="7.2" height="7.2" fill="#7575fc"/><rect x="687.2" y="253.3" width="7.2" height="7.2" fill="#7b7bfc"/><rect x="694.1" y="253.3" width="7.2" height="7.2" fill="#8484fc"/><rect x="700.9" y="253.3" width="7.2" height="7.2" fill="#8a8aff"/><rect x="707.7" y="253.3" width="7.2" height="7.2" fill="#9090ff"/><rect x="714.6" y="253.3" width="7.2" height="7.2" fill="#9696ff"/><rect x="721.4" y="253.3" width="7.2" height="7.2" fill="#9c9cff"/><rect x="728.2" y="253.3" width="20.9" height="7.2" fill="#a2a2ff"/><rect x="407.3" y="260.1" width="20.9" height="7.2" fill="#9393ff"/><rect x="427.8" y="260.1" width="7.2" height="7.2" fill="#8a8aff"/><rect x="434.6" y="260.1" width="7.2" height="7.2" fill="#8787ff"/><rect x="441.4" y="260.1" width="7.2" height="7.2" fill="#8181fc"/><rect x="448.3" y="260.1" width="7.2" height="7.2" fill="#7b7bfc"/><rect x="455.1" y="260.1" width="7.2" height="7.2" fill="#7575fc"/><rect x="461.9" y="260.1" width="7.2" height="7.2" fill="#6f6ffc"/><rect x="468.8" y="260.1" width="7.2" height="7.2" fill="#6969f9"/><rect x="475.6" y="260.1" width="7.2" height="7.2" fill="#6363f9"/><rect x="482.4" y="260.1" width="14.1" height="7.2" fill="#6060f9"/><rect x="496.1" y="260.1" width="14.1" height="7.2" fill="#5d5df9"/><rect x="509.7" y="260.1" width="20.9" height="7.2" fill="#6060f9"/><rect x="530.2" y="260.1" width="14.1" height="7.2" fill="#6363f9"/><rect x="543.9" y="260.1" width="7.2" height="7.2" fill="#6666f9"/><rect x="550.7" y="260.1" width="14.1" height="7.2" fill="#6969f9"/><rect x="564.3" y="260.1" width="48.2" height="7.2" fill="#6c6cfc"/><rect x="612.1" y="260.1" width="14.1" height="7.2" fill="#6969fc"/><rect x="625.8" y="260.1" width="14.1" height="7.2" fill="#6969f9"/><rect x="639.5" y="260.1" width="34.5" height="7.2" fill="#6666f9"/><rect x="673.6" y="260.1" width="7.2" height="7.2" fill="#6c6cfc"/><rect x="680.4" y="260.1" width="7.2" height="7.2" fill="#7272fc"/><rect x="687.2" y="260.1" width="7.2" height="7.2" fill="#7878fc"/><rect x="694.1" y="260.1" width="7.2" height="7.2" fill="#7e7efc"/><rect x="700.9" y="260.1" width="7.2" height="7.2" fill="#8787ff"/><rect x="707.7" y="260.1" width="7.2" height="7.2" fill="#8d8dff"/><rect x="714.6" y="260.1" width="7.2" height="7.2" fill="#9393ff"/><rect x="721.4" y="260.1" width="7.2" height="7.2" fill="#9999ff"/><rect x="728.2" y="260.1" width="20.9" height="7.2" fill="#9f9fff"/><rect x="407.3" y="266.9" width="14.1" height="7.2" fill="#9393ff"/><rect x="421.0" y="266.9" width="7.2" height="7.2" fill="#9090ff"/><rect x="427.8" y="266.9" width="7.2" height="7.2" fill="#8a8aff"/><rect x="434.6" y="266.9" width="7.2" height="7.2" fill="#8181fc"/><rect x="441.4" y="266.9" width="7.2" height="7.2" fill="#7b7bfc"/><rect x="448.3" y="266.9" width="7.2" height="7.2" fill="#7575fc"/><rect x="455.1" y="266.9" width="7.2" height="7.2" fill="#6f6ffc"/><rect x="461.9" y="266.9" width="7.2" height="7.2" fill="#6969f9"/><rect x="468.8" y="266.9" width="7.2" height="7.2" fill="#6363f9"/><rect x="475.6" y="266.9" width="7.2" height="7.2" fill="#5d5df9"/><rect x="482.4" y="266.9" width="7.2" height="7.2" fill="#5a5af6"/><rect x="489.2" y="266.9" width="20.9" height="7.2" fill="#5757f6"/><rect x="509.7" y="266.9" width="14.1" height="7.2" fill="#5a5af6"/><rect x="523.4" y="266.9" width="7.2" height="7.2" fill="#5d5df9"/><rect x="530.2" y="266.9" width="14.1" height="7.2" fill="#6060f9"/><rect x="543.9" y="266.9" width="7.2" height="7.2" fill="#6363f9"/><rect x="550.7" y="266.9" width="14.1" height="7.2" fill="#6666f9"/><rect x="564.3" y="266.9" width="7.2" height="7.2" fill="#6969f9"/><rect x="571.2" y="266.9" width="20.9" height="7.2" fill="#6969fc"/><rect x="591.7" y="266.9" width="20.9" height="7.2" fill="#6969f9"/><rect x="612.1" y="266.9" width="20.9" height="7.2" fill="#6666f9"/><rect x="632.6" y="266.9" width="41.4" height="7.2" fill="#6363f9"/><rect x="673.6" y="266.9" width="7.2" height="7.2" fill="#6666f9"/><rect x="680.4" y="266.9" width="7.2" height="7.2" fill="#6c6cfc"/><rect x="687.2" y="266.9" width="7.2" height="7.2" fill="#7575fc"/><rect x="694.1" y="266.9" width="7.2" height="7.2" fill="#7b7bfc"/><rect x="700.9" y="266.9" width="7.2" height="7.2" fill="#8181fc"/><rect x="707.7" y="266.9" width="7.2" height="7.2" fill="#8a8aff"/><rect x="714.6" y="266.9" width="7.2" height="7.2" fill="#9090ff"/><rect x="721.4" y="266.9" width="7.2" height="7.2" fill="#9696ff"/><rect x="728.2" y="266.9" width="7.2" height="7.2" fill="#9999ff"/><rect x="735.0" y="266.9" width="14.1" height="7.2" fill="#9c9cff"/><rect x="407.3" y="273.8" width="7.2" height="7.2" fill="#9393ff"/><rect x="414.1" y="273.8" width="14.1" height="7.2" fill="#9090ff"/><rect x="427.8" y="273.8" width="7.2" height="7.2" fill="#8d8dff"/><rect x="434.6" y="273.8" width="7.2" height="7.2" fill="#8181fc"/><rect x="441.4" y="273.8" width="7.2" height="7.2" fill="#7878fc"/><rect x="448.3" y="273.8" width="7.2" height="7.2" fill="#6f6ffc"/><rect x="455.1" y="273.8" width="7.2" height="7.2" fill="#6969f9"/><rect x="461.9" y="273.8" width="7.2" height="7.2" fill="#6363f9"/><rect x="468.8" y="273.8" width="7.2" height="7.2" fill="#5d5df9"/><rect x="475.6" y="273.8" width="7.2" height="7.2" fill="#5757f6"/><rect x="482.4" y="273.8" width="27.7" height="7.2" fill="#5151f6"/><rect x="509.7" y="273.8" width="7.2" height="7.2" fill="#5454f6"/><rect x="516.5" y="273.8" width="7.2" height="7.2" fill="#5757f6"/><rect x="523.4" y="273.8" width="7.2" height="7.2" fill="#5a5af6"/><rect x="530.2" y="273.8" width="7.2" height="7.2" fill="#5a5af9"/><rect x="537.0" y="273.8" width="7.2" height="7.2" fill="#5d5df9"/><rect x="543.9" y="273.8" width="7.2" height="7.2" fill="#6060f9"/><rect x="550.7" y="273.8" width="14.1" height="7.2" fill="#6363f9"/><rect x="564.3" y="273.8" width="48.2" height="7.2" fill="#6666f9"/><rect x="612.1" y="273.8" width="14.1" height="7.2" fill="#6363f9"/><rect x="625.8" y="273.8" width="20.9" height="7.2" fill="#6060f9"/><rect x="646.3" y="273.8" width="27.7" height="7.2" fill="#5d5df9"/><rect x="673.6" y="273.8" width="7.2" height="7.2" fill="#6363f9"/><rect x="680.4" y="273.8" width="7.2" height="7.2" fill="#6969f9"/><rect x="687.2" y="273.8" width="7.2" height="7.2" fill="#6f6ffc"/><rect x="694.1" y="273.8" width="7.2" height="7.2" fill="#7878fc"/><rect x="700.9" y="273.8" width="7.2" height="7.2" fill="#7e7efc"/><rect x="707.7" y="273.8" width="7.2" height="7.2" fill="#8787ff"/><rect x="714.6" y="273.8" width="7.2" height="7.2" fill="#8d8dff"/><rect x="721.4" y="273.8" width="7.2" height="7.2" fill="#9393ff"/><rect x="728.2" y="273.8" width="7.2" height="7.2" fill="#9696ff"/><rect x="735.0" y="273.8" width="14.1" height="7.2" fill="#9999ff"/><rect x="407.3" y="280.6" width="14.1" height="7.2" fill="#9090ff"/><rect x="421.0" y="280.6" width="14.1" height="7.2" fill="#8d8dff"/><rect x="434.6" y="280.6" width="7.2" height="7.2" fill="#8484fc"/><rect x="441.4" y="280.6" width="7.2" height="7.2" fill="#7878fc"/><rect x="448.3" y="280.6" width="7.2" height="7.2" fill="#6f6ffc"/><rect x="455.1" y="280.6" width="7.2" height="7.2" fill="#6666f9"/><rect x="461.9" y="280.6" width="7.2" height="7.2" fill="#5d5df9"/><rect x="468.8" y="280.6" width="7.2" height="7.2" fill="#5757f6"/><rect x="475.6" y="280.6" width="7.2" height="7.2" fill="#5151f6"/><rect x="482.4" y="280.6" width="20.9" height="7.2" fill="#4b4bf3"/><rect x="502.9" y="280.6" width="7.2" height="7.2" fill="#4e4ef6"/><rect x="509.7" y="280.6" width="7.2" height="7.2" fill="#5151f6"/><rect x="516.5" y="280.6" width="14.1" height="7.2" fill="#5454f6"/><rect x="530.2" y="280.6" width="7.2" height="7.2" fill="#5757f6"/><rect x="537.0" y="280.6" width="7.2" height="7.2" fill="#5a5af6"/><rect x="543.9" y="280.6" width="7.2" height="7.2" fill="#5d5df9"/><rect x="550.7" y="280.6" width="14.1" height="7.2" fill="#6060f9"/><rect x="564.3" y="280.6" width="41.4" height="7.2" fill="#6363f9"/><rect x="605.3" y="280.6" width="20.9" height="7.2" fill="#6060f9"/><rect x="625.8" y="280.6" width="14.1" height="7.2" fill="#5d5df9"/><rect x="639.5" y="280.6" width="34.5" height="7.2" fill="#5a5af6"/><rect x="673.6" y="280.6" width="7.2" height="7.2" fill="#5d5df9"/><rect x="680.4" y="280.6" width="7.2" height="7.2" fill="#6363f9"/><rect x="687.2" y="280.6" width="7.2" height="7.2" fill="#6c6cfc"/><rect x="694.1" y="280.6" width="7.2" height="7.2" fill="#7272fc"/><rect x="700.9" y="280.6" width="7.2" height="7.2" fill="#7b7bfc"/><rect x="707.7" y="280.6" width="7.2" height="7.2" fill="#8484fc"/><rect x="714.6" y="280.6" width="7.2" height="7.2" fill="#8a8aff"/><rect x="721.4" y="280.6" width="14.1" height="7.2" fill="#9393ff"/><rect x="735.0" y="280.6" width="14.1" height="7.2" fill="#9696ff"/><rect x="407.3" y="287.4" width="14.1" height="7.2" fill="#9090ff"/><rect x="421.0" y="287.4" width="14.1" height="7.2" fill="#8d8dff"/><rect x="434.6" y="287.4" width="7.2" height="7.2" fill="#8484ff"/><rect x="441.4" y="287.4" width="7.2" height="7.2" fill="#7b7bfc"/><rect x="448.3" y="287.4" width="7.2" height="7.2" fill="#6f6ffc"/><rect x="455.1" y="287.4" width="7.2" height="7.2" fill="#6666f9"/><rect x="461.9" y="287.4" width="7.2" height="7.2" fill="#5a5af6"/><rect x="468.8" y="287.4" width="7.2" height="7.2" fill="#5151f6"/><rect x="475.6" y="287.4" width="7.2" height="7.2" fill="#4848f3"/><rect x="482.4" y="287.4" width="14.1" height="7.2" fill="#4545f3"/><rect x="496.1" y="287.4" width="7.2" height="7.2" fill="#4848f3"/><rect x="502.9" y="287.4" width="14.1" height="7.2" fill="#4b4bf3"/><rect x="516.5" y="287.4" width="7.2" height="7.2" fill="#4e4ef6"/><rect x="523.4" y="287.4" width="7.2" height="7.2" fill="#5151f6"/><rect x="530.2" y="287.4" width="7.2" height="7.2" fill="#5454f6"/><rect x="537.0" y="287.4" width="7.2" height="7.2" fill="#5757f6"/><rect x="543.9" y="287.4" width="7.2" height="7.2" fill="#5a5af6"/><rect x="550.7" y="287.4" width="7.2" height="7.2" fill="#5a5af9"/><rect x="557.5" y="287.4" width="7.2" height="7.2" fill="#5d5df9"/><rect x="564.3" y="287.4" width="41.4" height="7.2" fill="#6060f9"/><rect x="605.3" y="287.4" width="14.1" height="7.2" fill="#5d5df9"/><rect x="619.0" y="287.4" width="14.1" height="7.2" fill="#5a5af6"/><rect x="632.6" y="287.4" width="20.9" height="7.2" fill="#5757f6"/><rect x="653.1" y="287.4" width="20.9" height="7.2" fill="#5454f6"/><rect x="673.6" y="287.4" width="7.2" height="7.2" fill="#5a5af6"/><rect x="680.4" y="287.4" width="7.2" height="7.2" fill="#6060f9"/><rect x="687.2" y="287.4" width="7.2" height="7.2" fill="#6969f9"/><rect x="694.1" y="287.4" width="7.2" height="7.2" fill="#7272fc"/><rect x="700.9" y="287.4" width="7.2" height="7.2" fill="#7878fc"/><rect x="707.7" y="287.4" width="7.2" height="7.2" fill="#8181fc"/><rect x="714.6" y="287.4" width="7.2" height="7.2" fill="#8a8aff"/><rect x="721.4" y="287.4" width="14.1" height="7.2" fill="#9090ff"/><rect x="735.0" y="287.4" width="14.1" height="7.2" fill="#9393ff"/><rect x="407.3" y="294.2" width="14.1" height="7.2" fill="#9090ff"/><rect x="421.0" y="294.2" width="7.2" height="7.2" fill="#8d8dff"/><rect x="427.8" y="294.2" width="7.2" height="7.2" fill="#8a8aff"/><rect x="434.6" y="294.2" width="7.2" height="7.2" fill="#8787ff"/><rect x="441.4" y="294.2" width="7.2" height="7.2" fill="#7b7bfc"/><rect x="448.3" y="294.2" width="7.2" height="7.2" fill="#7272fc"/><rect x="455.1" y="294.2" width="7.2" height="7.2" fill="#6666f9"/><rect x="461.9" y="294.2" width="7.2" height="7.2" fill="#5d5df9"/><rect x="468.8" y="294.2" width="7.2" height="7.2" fill="#5151f6"/><rect x="475.6" y="294.2" width="7.2" height="7.2" fill="#4545f0"/><rect x="482.4" y="294.2" width="7.2" height="7.2" fill="#3f3ff0"/><rect x="489.2" y="294.2" width="7.2" height="7.2" fill="#4242f0"/><rect x="496.1" y="294.2" width="7.2" height="7.2" fill="#4545f0"/><rect x="502.9" y="294.2" width="7.2" height="7.2" fill="#4545f3"/><rect x="509.7" y="294.2" width="7.2" height="7.2" fill="#4848f3"/><rect x="516.5" y="294.2" width="7.2" height="7.2" fill="#4b4bf3"/><rect x="523.4" y="294.2" width="7.2" height="7.2" fill="#4e4ef6"/><rect x="530.2" y="294.2" width="7.2" height="7.2" fill="#5151f6"/><rect x="537.0" y="294.2" width="7.2" height="7.2" fill="#5454f6"/><rect x="543.9" y="294.2" width="14.1" height="7.2" fill="#5757f6"/><rect x="557.5" y="294.2" width="7.2" height="7.2" fill="#5a5af6"/><rect x="564.3" y="294.2" width="14.1" height="7.2" fill="#5d5df9"/><rect x="578.0" y="294.2" width="7.2" height="7.2" fill="#6060f9"/><rect x="584.8" y="294.2" width="14.1" height="7.2" fill="#5d5df9"/><rect x="598.5" y="294.2" width="7.2" height="7.2" fill="#5a5af9"/><rect x="605.3" y="294.2" width="7.2" height="7.2" fill="#5a5af6"/><rect x="612.1" y="294.2" width="20.9" height="7.2" fill="#5757f6"/><rect x="632.6" y="294.2" width="14.1" height="7.2" fill="#5454f6"/><rect x="646.3" y="294.2" width="20.9" height="7.2" fill="#5151f6"/><rect x="666.8" y="294.2" width="7.2" height="7.2" fill="#4e4ef6"/><rect x="673.6" y="294.2" width="7.2" height="7.2" fill="#5454f6"/><rect x="680.4" y="294.2" width="7.2" height="7.2" fill="#5d5df9"/><rect x="687.2" y="294.2" width="7.2" height="7.2" fill="#6666f9"/><rect x="694.1" y="294.2" width="7.2" height="7.2" fill="#6f6ffc"/><rect x="700.9" y="294.2" width="7.2" height="7.2" fill="#7878fc"/><rect x="707.7" y="294.2" width="7.2" height="7.2" fill="#7e7efc"/><rect x="714.6" y="294.2" width="7.2" height="7.2" fill="#8787ff"/><rect x="721.4" y="294.2" width="7.2" height="7.2" fill="#8a8aff"/><rect x="728.2" y="294.2" width="7.2" height="7.2" fill="#8d8dff"/><rect x="735.0" y="294.2" width="14.1" height="7.2" fill="#9090ff"/><rect x="407.3" y="301.1" width="20.9" height="7.2" fill="#8d8dff"/><rect x="427.8" y="301.1" width="7.2" height="7.2" fill="#8a8aff"/><rect x="434.6" y="301.1" width="7.2" height="7.2" fill="#8787ff"/><rect x="441.4" y="301.1" width="7.2" height="7.2" fill="#7e7efc"/><rect x="448.3" y="301.1" width="7.2" height="7.2" fill="#7575fc"/><rect x="455.1" y="301.1" width="7.2" height="7.2" fill="#6969f9"/><rect x="461.9" y="301.1" width="7.2" height="7.2" fill="#5d5df9"/><rect x="468.8" y="301.1" width="7.2" height="7.2" fill="#5151f6"/><rect x="475.6" y="301.1" width="7.2" height="7.2" fill="#4848f3"/><rect x="482.4" y="301.1" width="7.2" height="7.2" fill="#4242f0"/><rect x="489.2" y="301.1" width="7.2" height="7.2" fill="#3f3ff0"/><rect x="496.1" y="301.1" width="7.2" height="7.2" fill="#4242f0"/><rect x="502.9" y="301.1" width="7.2" height="7.2" fill="#4545f0"/><rect x="509.7" y="301.1" width="7.2" height="7.2" fill="#4545f3"/><rect x="516.5" y="301.1" width="7.2" height="7.2" fill="#4848f3"/><rect x="523.4" y="301.1" width="7.2" height="7.2" fill="#4b4bf3"/><rect x="530.2" y="301.1" width="7.2" height="7.2" fill="#4e4ef6"/><rect x="537.0" y="301.1" width="14.1" height="7.2" fill="#5151f6"/><rect x="550.7" y="301.1" width="7.2" height="7.2" fill="#5454f6"/><rect x="557.5" y="301.1" width="7.2" height="7.2" fill="#5757f6"/><rect x="564.3" y="301.1" width="7.2" height="7.2" fill="#5a5af6"/><rect x="571.2" y="301.1" width="14.1" height="7.2" fill="#5d5df9"/><rect x="584.8" y="301.1" width="14.1" height="7.2" fill="#5a5af6"/><rect x="598.5" y="301.1" width="14.1" height="7.2" fill="#5757f6"/><rect x="612.1" y="301.1" width="14.1" height="7.2" fill="#5454f6"/><rect x="625.8" y="301.1" width="14.1" height="7.2" fill="#5151f6"/><rect x="639.5" y="301.1" width="20.9" height="7.2" fill="#4e4ef6"/><rect x="659.9" y="301.1" width="7.2" height="7.2" fill="#4b4bf3"/><rect x="666.8" y="301.1" width="7.2" height="7.2" fill="#4e4ef6"/><rect x="673.6" y="301.1" width="7.2" height="7.2" fill="#5454f6"/><rect x="680.4" y="301.1" width="7.2" height="7.2" fill="#5d5df9"/><rect x="687.2" y="301.1" width="7.2" height="7.2" fill="#6666f9"/><rect x="694.1" y="301.1" width="7.2" height="7.2" fill="#6c6cfc"/><rect x="700.9" y="301.1" width="7.2" height="7.2" fill="#7575fc"/><rect x="707.7" y="301.1" width="7.2" height="7.2" fill="#7e7efc"/><rect x="714.6" y="301.1" width="7.2" height="7.2" fill="#8484ff"/><rect x="721.4" y="301.1" width="7.2" height="7.2" fill="#8787ff"/><rect x="728.2" y="301.1" width="7.2" height="7.2" fill="#8a8aff"/><rect x="735.0" y="301.1" width="14.1" height="7.2" fill="#8d8dff"/><rect x="407.3" y="307.9" width="20.9" height="7.2" fill="#8d8dff"/><rect x="427.8" y="307.9" width="7.2" height="7.2" fill="#8a8aff"/><rect x="434.6" y="307.9" width="7.2" height="7.2" fill="#8787ff"/><rect x="441.4" y="307.9" width="7.2" height="7.2" fill="#8181fc"/><rect x="448.3" y="307.9" width="7.2" height="7.2" fill="#7575fc"/><rect x="455.1" y="307.9" width="7.2" height="7.2" fill="#6c6cfc"/><rect x="461.9" y="307.9" width="7.2" height="7.2" fill="#6060f9"/><rect x="468.8" y="307.9" width="7.2" height="7.2" fill="#5757f6"/><rect x="475.6" y="307.9" width="7.2" height="7.2" fill="#4e4ef6"/><rect x="482.4" y="307.9" width="7.2" height="7.2" fill="#4848f3"/><rect x="489.2" y="307.9" width="20.9" height="7.2" fill="#4242f0"/><rect x="509.7" y="307.9" width="7.2" height="7.2" fill="#4545f3"/><rect x="516.5" y="307.9" width="14.1" height="7.2" fill="#4848f3"/><rect x="530.2" y="307.9" width="7.2" height="7.2" fill="#4b4bf3"/><rect x="537.0" y="307.9" width="7.2" height="7.2" fill="#4e4ef6"/><rect x="543.9" y="307.9" width="14.1" height="7.2" fill="#5151f6"/><rect x="557.5" y="307.9" width="7.2" height="7.2" fill="#5454f6"/><rect x="564.3" y="307.9" width="7.2" height="7.2" fill="#5757f6"/><rect x="571.2" y="307.9" width="14.1" height="7.2" fill="#5a5af6"/><rect x="584.8" y="307.9" width="7.2" height="7.2" fill="#5757f6"/><rect x="591.7" y="307.9" width="14.1" height="7.2" fill="#5454f6"/><rect x="605.3" y="307.9" width="7.2" height="7.2" fill="#5151f6"/><rect x="612.1" y="307.9" width="14.1" height="7.2" fill="#4e4ef6"/><rect x="625.8" y="307.9" width="7.2" height="7.2" fill="#4b4bf6"/><rect x="632.6" y="307.9" width="14.1" height="7.2" fill="#4b4bf3"/><rect x="646.3" y="307.9" width="14.1" height="7.2" fill="#4848f3"/><rect x="659.9" y="307.9" width="7.2" height="7.2" fill="#4b4bf3"/><rect x="666.8" y="307.9" width="7.2" height="7.2" fill="#4e4ef6"/><rect x="673.6" y="307.9" width="7.2" height="7.2" fill="#5454f6"/><rect x="680.4" y="307.9" width="7.2" height="7.2" fill="#5a5af9"/><rect x="687.2" y="307.9" width="7.2" height="7.2" fill="#6363f9"/><rect x="694.1" y="307.9" width="7.2" height="7.2" fill="#6c6cfc"/><rect x="700.9" y="307.9" width="7.2" height="7.2" fill="#7575fc"/><rect x="707.7" y="307.9" width="7.2" height="7.2" fill="#7b7bfc"/><rect x="714.6" y="307.9" width="7.2" height="7.2" fill="#8484fc"/><rect x="721.4" y="307.9" width="7.2" height="7.2" fill="#8484ff"/><rect x="728.2" y="307.9" width="7.2" height="7.2" fill="#8787ff"/><rect x="735.0" y="307.9" width="14.1" height="7.2" fill="#8a8aff"/><rect x="407.3" y="314.7" width="20.9" height="7.2" fill="#8d8dff"/><rect x="427.8" y="314.7" width="14.1" height="7.2" fill="#8a8aff"/><rect x="441.4" y="314.7" width="7.2" height="7.2" fill="#8484fc"/><rect x="448.3" y="314.7" width="7.2" height="7.2" fill="#7878fc"/><rect x="455.1" y="314.7" width="7.2" height="7.2" fill="#6f6ffc"/><rect x="461.9" y="314.7" width="7.2" height="7.2" fill="#6363f9"/><rect x="468.8" y="314.7" width="7.2" height="7.2" fill="#5d5df9"/><rect x="475.6" y="314.7" width="7.2" height="7.2" fill="#5757f6"/><rect x="482.4" y="314.7" width="7.2" height="7.2" fill="#4e4ef6"/><rect x="489.2" y="314.7" width="7.2" height="7.2" fill="#4848f3"/><rect x="496.1" y="314.7" width="7.2" height="7.2" fill="#4545f0"/><rect x="502.9" y="314.7" width="7.2" height="7.2" fill="#4242f0"/><rect x="509.7" y="314.7" width="7.2" height="7.2" fill="#4545f0"/><rect x="516.5" y="314.7" width="7.2" height="7.2" fill="#4545f3"/><rect x="523.4" y="314.7" width="7.2" height="7.2" fill="#4848f3"/><rect x="530.2" y="314.7" width="14.1" height="7.2" fill="#4b4bf3"/><rect x="543.9" y="314.7" width="7.2" height="7.2" fill="#4e4ef6"/><rect x="550.7" y="314.7" width="14.1" height="7.2" fill="#5151f6"/><rect x="564.3" y="314.7" width="20.9" height="7.2" fill="#5454f6"/><rect x="584.8" y="314.7" width="7.2" height="7.2" fill="#5151f6"/><rect x="591.7" y="314.7" width="14.1" height="7.2" fill="#4e4ef6"/><rect x="605.3" y="314.7" width="14.1" height="7.2" fill="#4b4bf3"/><rect x="619.0" y="314.7" width="14.1" height="7.2" fill="#4848f3"/><rect x="632.6" y="314.7" width="14.1" height="7.2" fill="#4545f3"/><rect x="646.3" y="314.7" width="7.2" height="7.2" fill="#4545f0"/><rect x="653.1" y="314.7" width="7.2" height="7.2" fill="#4545f3"/><rect x="659.9" y="314.7" width="7.2" height="7.2" fill="#4b4bf3"/><rect x="666.8" y="314.7" width="7.2" height="7.2" fill="#5151f6"/><rect x="673.6" y="314.7" width="7.2" height="7.2" fill="#5757f6"/><rect x="680.4" y="314.7" width="7.2" height="7.2" fill="#5d5df9"/><rect x="687.2" y="314.7" width="7.2" height="7.2" fill="#6363f9"/><rect x="694.1" y="314.7" width="7.2" height="7.2" fill="#6c6cfc"/><rect x="700.9" y="314.7" width="7.2" height="7.2" fill="#7272fc"/><rect x="707.7" y="314.7" width="7.2" height="7.2" fill="#7b7bfc"/><rect x="714.6" y="314.7" width="7.2" height="7.2" fill="#8181fc"/><rect x="721.4" y="314.7" width="7.2" height="7.2" fill="#8484fc"/><rect x="728.2" y="314.7" width="7.2" height="7.2" fill="#8484ff"/><rect x="735.0" y="314.7" width="14.1" height="7.2" fill="#8787ff"/><rect x="414.1" y="321.6" width="14.1" height="7.2" fill="#8d8dff"/><rect x="427.8" y="321.6" width="14.1" height="7.2" fill="#8a8aff"/><rect x="441.4" y="321.6" width="7.2" height="7.2" fill="#8787ff"/><rect x="448.3" y="321.6" width="7.2" height="7.2" fill="#7b7bfc"/><rect x="455.1" y="321.6" width="7.2" height="7.2" fill="#7272fc"/><rect x="461.9" y="321.6" width="7.2" height="7.2" fill="#6c6cfc"/><rect x="468.8" y="321.6" width="7.2" height="7.2" fill="#6363f9"/><rect x="475.6" y="321.6" width="7.2" height="7.2" fill="#5d5df9"/><rect x="482.4" y="321.6" width="7.2" height="7.2" fill="#5757f6"/><rect x="489.2" y="321.6" width="7.2" height="7.2" fill="#5151f6"/><rect x="496.1" y="321.6" width="7.2" height="7.2" fill="#4b4bf3"/><rect x="502.9" y="321.6" width="7.2" height="7.2" fill="#4545f3"/><rect x="509.7" y="321.6" width="7.2" height="7.2" fill="#4545f0"/><rect x="516.5" y="321.6" width="14.1" height="7.2" fill="#4545f3"/><rect x="530.2" y="321.6" width="7.2" height="7.2" fill="#4848f3"/><rect x="537.0" y="321.6" width="14.1" height="7.2" fill="#4b4bf3"/><rect x="550.7" y="321.6" width="14.1" height="7.2" fill="#4e4ef6"/><rect x="564.3" y="321.6" width="7.2" height="7.2" fill="#5151f6"/><rect x="571.2" y="321.6" width="14.1" height="7.2" fill="#4e4ef6"/><rect x="584.8" y="321.6" width="7.2" height="7.2" fill="#4b4bf3"/><rect x="591.7" y="321.6" width="14.1" height="7.2" fill="#4848f3"/><rect x="605.3" y="321.6" width="7.2" height="7.2" fill="#4545f3"/><rect x="612.1" y="321.6" width="7.2" height="7.2" fill="#4545f0"/><rect x="619.0" y="321.6" width="20.9" height="7.2" fill="#4242f0"/><rect x="639.5" y="321.6" width="7.2" height="7.2" fill="#3f3ff0"/><rect x="646.3" y="321.6" width="7.2" height="7.2" fill="#4242f0"/><rect x="653.1" y="321.6" width="7.2" height="7.2" fill="#4848f3"/><rect x="659.9" y="321.6" width="7.2" height="7.2" fill="#4e4ef6"/><rect x="666.8" y="321.6" width="7.2" height="7.2" fill="#5151f6"/><rect x="673.6" y="321.6" width="7.2" height="7.2" fill="#5757f6"/><rect x="680.4" y="321.6" width="7.2" height="7.2" fill="#5d5df9"/><rect x="687.2" y="321.6" width="7.2" height="7.2" fill="#6363f9"/><rect x="694.1" y="321.6" width="7.2" height="7.2" fill="#6969fc"/><rect x="700.9" y="321.6" width="7.2" height="7.2" fill="#7272fc"/><rect x="707.7" y="321.6" width="7.2" height="7.2" fill="#7b7bfc"/><rect x="714.6" y="321.6" width="7.2" height="7.2" fill="#7e7efc"/><rect x="721.4" y="321.6" width="14.1" height="7.2" fill="#8181fc"/><rect x="735.0" y="321.6" width="7.2" height="7.2" fill="#8484fc"/><rect x="414.1" y="328.4" width="7.2" height="7.2" fill="#8d8dff"/><rect x="421.0" y="328.4" width="27.7" height="7.2" fill="#8a8aff"/><rect x="448.3" y="328.4" width="7.2" height="7.2" fill="#8181fc"/><rect x="455.1" y="328.4" width="7.2" height="7.2" fill="#7878fc"/><rect x="461.9" y="328.4" width="7.2" height="7.2" fill="#7272fc"/><rect x="468.8" y="328.4" width="7.2" height="7.2" fill="#6c6cfc"/><rect x="475.6" y="328.4" width="7.2" height="7.2" fill="#6363f9"/><rect x="482.4" y="328.4" width="7.2" height="7.2" fill="#5d5df9"/><rect x="489.2" y="328.4" width="7.2" height="7.2" fill="#5757f6"/><rect x="496.1" y="328.4" width="7.2" height="7.2" fill="#5151f6"/><rect x="502.9" y="328.4" width="7.2" height="7.2" fill="#4b4bf3"/><rect x="509.7" y="328.4" width="7.2" height="7.2" fill="#4545f3"/><rect x="516.5" y="328.4" width="7.2" height="7.2" fill="#4545f0"/><rect x="523.4" y="328.4" width="7.2" height="7.2" fill="#4545f3"/><rect x="530.2" y="328.4" width="14.1" height="7.2" fill="#4848f3"/><rect x="543.9" y="328.4" width="27.7" height="7.2" fill="#4b4bf3"/><rect x="571.2" y="328.4" width="14.1" height="7.2" fill="#4848f3"/><rect x="584.8" y="328.4" width="7.2" height="7.2" fill="#4545f3"/><rect x="591.7" y="328.4" width="14.1" height="7.2" fill="#4242f0"/><rect x="605.3" y="328.4" width="14.1" height="7.2" fill="#3f3ff0"/><rect x="619.0" y="328.4" width="20.9" height="7.2" fill="#3c3ced"/><rect x="639.5" y="328.4" width="7.2" height="7.2" fill="#3f3fed"/><rect x="646.3" y="328.4" width="7.2" height="7.2" fill="#4242f0"/><rect x="653.1" y="328.4" width="7.2" height="7.2" fill="#4848f3"/><rect x="659.9" y="328.4" width="7.2" height="7.2" fill="#4e4ef6"/><rect x="666.8" y="328.4" width="7.2" height="7.2" fill="#5454f6"/><rect x="673.6" y="328.4" width="7.2" height="7.2" fill="#5a5af6"/><rect x="680.4" y="328.4" width="7.2" height="7.2" fill="#6060f9"/><rect x="687.2" y="328.4" width="7.2" height="7.2" fill="#6666f9"/><rect x="694.1" y="328.4" width="7.2" height="7.2" fill="#6c6cfc"/><rect x="700.9" y="328.4" width="7.2" height="7.2" fill="#7272fc"/><rect x="707.7" y="328.4" width="7.2" height="7.2" fill="#7878fc"/><rect x="714.6" y="328.4" width="7.2" height="7.2" fill="#7b7bfc"/><rect x="721.4" y="328.4" width="14.1" height="7.2" fill="#7e7efc"/><rect x="735.0" y="328.4" width="7.2" height="7.2" fill="#8181fc"/><rect x="421.0" y="335.2" width="27.7" height="7.2" fill="#8a8aff"/><rect x="448.3" y="335.2" width="7.2" height="7.2" fill="#8484ff"/><rect x="455.1" y="335.2" width="7.2" height="7.2" fill="#7e7efc"/><rect x="461.9" y="335.2" width="7.2" height="7.2" fill="#7878fc"/><rect x="468.8" y="335.2" width="7.2" height="7.2" fill="#7272fc"/><rect x="475.6" y="335.2" width="7.2" height="7.2" fill="#6969fc"/><rect x="482.4" y="335.2" width="7.2" height="7.2" fill="#6363f9"/><rect x="489.2" y="335.2" width="7.2" height="7.2" fill="#5d5df9"/><rect x="496.1" y="335.2" width="7.2" height="7.2" fill="#5757f6"/><rect x="502.9" y="335.2" width="7.2" height="7.2" fill="#5151f6"/><rect x="509.7" y="335.2" width="7.2" height="7.2" fill="#4b4bf3"/><rect x="516.5" y="335.2" width="7.2" height="7.2" fill="#4545f3"/><rect x="523.4" y="335.2" width="7.2" height="7.2" fill="#4545f0"/><rect x="530.2" y="335.2" width="14.1" height="7.2" fill="#4545f3"/><rect x="543.9" y="335.2" width="20.9" height="7.2" fill="#4848f3"/><rect x="564.3" y="335.2" width="7.2" height="7.2" fill="#4545f3"/><rect x="571.2" y="335.2" width="7.2" height="7.2" fill="#4545f0"/><rect x="578.0" y="335.2" width="7.2" height="7.2" fill="#4242f0"/><rect x="584.8" y="335.2" width="7.2" height="7.2" fill="#3f3ff0"/><rect x="591.7" y="335.2" width="7.2" height="7.2" fill="#3f3fed"/><rect x="598.5" y="335.2" width="7.2" height="7.2" fill="#3c3ced"/><rect x="605.3" y="335.2" width="14.1" height="7.2" fill="#3939ed"/><rect x="619.0" y="335.2" width="7.2" height="7.2" fill="#3939ea"/><rect x="625.8" y="335.2" width="7.2" height="7.2" fill="#3636ea"/><rect x="632.6" y="335.2" width="7.2" height="7.2" fill="#3939ed"/><rect x="639.5" y="335.2" width="7.2" height="7.2" fill="#3f3ff0"/><rect x="646.3" y="335.2" width="7.2" height="7.2" fill="#4545f0"/><rect x="653.1" y="335.2" width="7.2" height="7.2" fill="#4848f3"/><rect x="659.9" y="335.2" width="7.2" height="7.2" fill="#4e4ef6"/><rect x="666.8" y="335.2" width="7.2" height="7.2" fill="#5454f6"/><rect x="673.6" y="335.2" width="7.2" height="7.2" fill="#5a5af6"/><rect x="680.4" y="335.2" width="7.2" height="7.2" fill="#6060f9"/><rect x="687.2" y="335.2" width="7.2" height="7.2" fill="#6666f9"/><rect x="694.1" y="335.2" width="7.2" height="7.2" fill="#6c6cfc"/><rect x="700.9" y="335.2" width="7.2" height="7.2" fill="#7272fc"/><rect x="707.7" y="335.2" width="7.2" height="7.2" fill="#7575fc"/><rect x="714.6" y="335.2" width="7.2" height="7.2" fill="#7878fc"/><rect x="721.4" y="335.2" width="14.1" height="7.2" fill="#7b7bfc"/><rect x="421.0" y="342.0" width="20.9" height="7.2" fill="#8a8aff"/><rect x="441.4" y="342.0" width="7.2" height="7.2" fill="#8787ff"/><rect x="448.3" y="342.0" width="7.2" height="7.2" fill="#8484ff"/><rect x="455.1" y="342.0" width="7.2" height="7.2" fill="#8181fc"/><rect x="461.9" y="342.0" width="7.2" height="7.2" fill="#7b7bfc"/><rect x="468.8" y="342.0" width="7.2" height="7.2" fill="#7575fc"/><rect x="475.6" y="342.0" width="7.2" height="7.2" fill="#6f6ffc"/><rect x="482.4" y="342.0" width="7.2" height="7.2" fill="#6969f9"/><rect x="489.2" y="342.0" width="7.2" height="7.2" fill="#6363f9"/><rect x="496.1" y="342.0" width="7.2" height="7.2" fill="#5d5df9"/><rect x="502.9" y="342.0" width="7.2" height="7.2" fill="#5757f6"/><rect x="509.7" y="342.0" width="7.2" height="7.2" fill="#5151f6"/><rect x="516.5" y="342.0" width="7.2" height="7.2" fill="#4b4bf3"/><rect x="523.4" y="342.0" width="7.2" height="7.2" fill="#4545f3"/><rect x="530.2" y="342.0" width="14.1" height="7.2" fill="#4545f0"/><rect x="543.9" y="342.0" width="7.2" height="7.2" fill="#4545f3"/><rect x="550.7" y="342.0" width="7.2" height="7.2" fill="#4545f0"/><rect x="557.5" y="342.0" width="14.1" height="7.2" fill="#4242f0"/><rect x="571.2" y="342.0" width="7.2" height="7.2" fill="#3f3ff0"/><rect x="578.0" y="342.0" width="14.1" height="7.2" fill="#3c3ced"/><rect x="591.7" y="342.0" width="7.2" height="7.2" fill="#3939ed"/><rect x="598.5" y="342.0" width="7.2" height="7.2" fill="#3636ea"/><rect x="605.3" y="342.0" width="27.7" height="7.2" fill="#3333ea"/><rect x="632.6" y="342.0" width="7.2" height="7.2" fill="#3939ed"/><rect x="639.5" y="342.0" width="7.2" height="7.2" fill="#3f3ff0"/><rect x="646.3" y="342.0" width="7.2" height="7.2" fill="#4545f3"/><rect x="653.1" y="342.0" width="7.2" height="7.2" fill="#4b4bf3"/><rect x="659.9" y="342.0" width="7.2" height="7.2" fill="#5151f6"/><rect x="666.8" y="342.0" width="7.2" height="7.2" fill="#5757f6"/><rect x="673.6" y="342.0" width="7.2" height="7.2" fill="#5a5af9"/><rect x="680.4" y="342.0" width="7.2" height="7.2" fill="#6060f9"/><rect x="687.2" y="342.0" width="7.2" height="7.2" fill="#6666f9"/><rect x="694.1" y="342.0" width="7.2" height="7.2" fill="#6c6cfc"/><rect x="700.9" y="342.0" width="14.1" height="7.2" fill="#7272fc"/><rect x="714.6" y="342.0" width="7.2" height="7.2" fill="#7575fc"/><rect x="721.4" y="342.0" width="14.1" height="7.2" fill="#7878fc"/><rect x="427.8" y="348.9" width="7.2" height="7.2" fill="#8a8aff"/><rect x="434.6" y="348.9" width="7.2" height="7.2" fill="#8787ff"/><rect x="441.4" y="348.9" width="7.2" height="7.2" fill="#8484ff"/><rect x="448.3" y="348.9" width="7.2" height="7.2" fill="#8484fc"/><rect x="455.1" y="348.9" width="7.2" height="7.2" fill="#8181fc"/><rect x="461.9" y="348.9" width="7.2" height="7.2" fill="#7b7bfc"/><rect x="468.8" y="348.9" width="7.2" height="7.2" fill="#7878fc"/><rect x="475.6" y="348.9" width="7.2" height="7.2" fill="#7272fc"/><rect x="482.4" y="348.9" width="7.2" height="7.2" fill="#6c6cfc"/><rect x="489.2" y="348.9" width="7.2" height="7.2" fill="#6666f9"/><rect x="496.1" y="348.9" width="7.2" height="7.2" fill="#6060f9"/><rect x="502.9" y="348.9" width="7.2" height="7.2" fill="#5a5af9"/><rect x="509.7" y="348.9" width="7.2" height="7.2" fill="#5757f6"/><rect x="516.5" y="348.9" width="7.2" height="7.2" fill="#5151f6"/><rect x="523.4" y="348.9" width="7.2" height="7.2" fill="#4b4bf3"/><rect x="530.2" y="348.9" width="7.2" height="7.2" fill="#4545f3"/><rect x="537.0" y="348.9" width="14.1" height="7.2" fill="#4242f0"/><rect x="550.7" y="348.9" width="7.2" height="7.2" fill="#3f3ff0"/><rect x="557.5" y="348.9" width="7.2" height="7.2" fill="#3f3fed"/><rect x="564.3" y="348.9" width="7.2" height="7.2" fill="#3c3ced"/><rect x="571.2" y="348.9" width="14.1" height="7.2" fill="#3939ed"/><rect x="584.8" y="348.9" width="7.2" height="7.2" fill="#3636ea"/><rect x="591.7" y="348.9" width="14.1" height="7.2" fill="#3333ea"/><rect x="605.3" y="348.9" width="7.2" height="7.2" fill="#3030e7"/><rect x="612.1" y="348.9" width="7.2" height="7.2" fill="#2d2de7"/><rect x="619.0" y="348.9" width="7.2" height="7.2" fill="#3030e7"/><rect x="625.8" y="348.9" width="7.2" height="7.2" fill="#3636ea"/><rect x="632.6" y="348.9" width="7.2" height="7.2" fill="#3939ed"/><rect x="639.5" y="348.9" width="7.2" height="7.2" fill="#3f3ff0"/><rect x="646.3" y="348.9" width="7.2" height="7.2" fill="#4545f3"/><rect x="653.1" y="348.9" width="7.2" height="7.2" fill="#4b4bf3"/><rect x="659.9" y="348.9" width="7.2" height="7.2" fill="#5151f6"/><rect x="666.8" y="348.9" width="7.2" height="7.2" fill="#5757f6"/><rect x="673.6" y="348.9" width="7.2" height="7.2" fill="#5d5df9"/><rect x="680.4" y="348.9" width="7.2" height="7.2" fill="#6060f9"/><rect x="687.2" y="348.9" width="7.2" height="7.2" fill="#6666f9"/><rect x="694.1" y="348.9" width="7.2" height="7.2" fill="#6c6cfc"/><rect x="700.9" y="348.9" width="7.2" height="7.2" fill="#6f6ffc"/><rect x="707.7" y="348.9" width="14.1" height="7.2" fill="#7272fc"/><rect x="721.4" y="348.9" width="7.2" height="7.2" fill="#7575fc"/><rect x="427.8" y="355.7" width="14.1" height="7.2" fill="#8787ff"/><rect x="441.4" y="355.7" width="7.2" height="7.2" fill="#8484ff"/><rect x="448.3" y="355.7" width="7.2" height="7.2" fill="#8181fc"/><rect x="455.1" y="355.7" width="7.2" height="7.2" fill="#7e7efc"/><rect x="461.9" y="355.7" width="7.2" height="7.2" fill="#7b7bfc"/><rect x="468.8" y="355.7" width="7.2" height="7.2" fill="#7878fc"/><rect x="475.6" y="355.7" width="7.2" height="7.2" fill="#7272fc"/><rect x="482.4" y="355.7" width="7.2" height="7.2" fill="#6f6ffc"/><rect x="489.2" y="355.7" width="7.2" height="7.2" fill="#6969f9"/><rect x="496.1" y="355.7" width="7.2" height="7.2" fill="#6363f9"/><rect x="502.9" y="355.7" width="7.2" height="7.2" fill="#5d5df9"/><rect x="509.7" y="355.7" width="7.2" height="7.2" fill="#5757f6"/><rect x="516.5" y="355.7" width="7.2" height="7.2" fill="#5454f6"/><rect x="523.4" y="355.7" width="7.2" height="7.2" fill="#4e4ef6"/><rect x="530.2" y="355.7" width="7.2" height="7.2" fill="#4848f3"/><rect x="537.0" y="355.7" width="7.2" height="7.2" fill="#4242f0"/><rect x="543.9" y="355.7" width="7.2" height="7.2" fill="#3f3ff0"/><rect x="550.7" y="355.7" width="7.2" height="7.2" fill="#3f3fed"/><rect x="557.5" y="355.7" width="14.1" height="7.2" fill="#3c3ced"/><rect x="571.2" y="355.7" width="7.2" height="7.2" fill="#3939ed"/><rect x="578.0" y="355.7" width="7.2" height="7.2" fill="#3636ea"/><rect x="584.8" y="355.7" width="14.1" height="7.2" fill="#3333ea"/><rect x="598.5" y="355.7" width="7.2" height="7.2" fill="#3030e7"/><rect x="605.3" y="355.7" width="14.1" height="7.2" fill="#2d2de7"/><rect x="619.0" y="355.7" width="7.2" height="7.2" fill="#3030e7"/><rect x="625.8" y="355.7" width="7.2" height="7.2" fill="#3636ea"/><rect x="632.6" y="355.7" width="7.2" height="7.2" fill="#3c3ced"/><rect x="639.5" y="355.7" width="7.2" height="7.2" fill="#3f3ff0"/><rect x="646.3" y="355.7" width="7.2" height="7.2" fill="#4545f3"/><rect x="653.1" y="355.7" width="7.2" height="7.2" fill="#4b4bf3"/><rect x="659.9" y="355.7" width="7.2" height="7.2" fill="#5151f6"/><rect x="666.8" y="355.7" width="7.2" height="7.2" fill="#5757f6"/><rect x="673.6" y="355.7" width="7.2" height="7.2" fill="#5d5df9"/><rect x="680.4" y="355.7" width="7.2" height="7.2" fill="#6363f9"/><rect x="687.2" y="355.7" width="7.2" height="7.2" fill="#6666f9"/><rect x="694.1" y="355.7" width="7.2" height="7.2" fill="#6969f9"/><rect x="700.9" y="355.7" width="7.2" height="7.2" fill="#6c6cfc"/><rect x="707.7" y="355.7" width="14.1" height="7.2" fill="#6f6ffc"/><rect x="721.4" y="355.7" width="7.2" height="7.2" fill="#7272fc"/><rect x="434.6" y="362.5" width="7.2" height="7.2" fill="#8484ff"/><rect x="441.4" y="362.5" width="14.1" height="7.2" fill="#8181fc"/><rect x="455.1" y="362.5" width="7.2" height="7.2" fill="#7e7efc"/><rect x="461.9" y="362.5" width="7.2" height="7.2" fill="#7b7bfc"/><rect x="468.8" y="362.5" width="7.2" height="7.2" fill="#7878fc"/><rect x="475.6" y="362.5" width="7.2" height="7.2" fill="#7575fc"/><rect x="482.4" y="362.5" width="7.2" height="7.2" fill="#6f6ffc"/><rect x="489.2" y="362.5" width="7.2" height="7.2" fill="#6c6cfc"/><rect x="496.1" y="362.5" width="7.2" height="7.2" fill="#6666f9"/><rect x="502.9" y="362.5" width="7.2" height="7.2" fill="#6060f9"/><rect x="509.7" y="362.5" width="7.2" height="7.2" fill="#5a5af6"/><rect x="516.5" y="362.5" width="7.2" height="7.2" fill="#5454f6"/><rect x="523.4" y="362.5" width="7.2" height="7.2" fill="#4e4ef6"/><rect x="530.2" y="362.5" width="7.2" height="7.2" fill="#4b4bf3"/><rect x="537.0" y="362.5" width="7.2" height="7.2" fill="#4545f3"/><rect x="543.9" y="362.5" width="14.1" height="7.2" fill="#3f3ff0"/><rect x="557.5" y="362.5" width="7.2" height="7.2" fill="#3c3ced"/><rect x="564.3" y="362.5" width="14.1" height="7.2" fill="#3939ed"/><rect x="578.0" y="362.5" width="7.2" height="7.2" fill="#3636ea"/><rect x="584.8" y="362.5" width="14.1" height="7.2" fill="#3333ea"/><rect x="598.5" y="362.5" width="7.2" height="7.2" fill="#3030e7"/><rect x="605.3" y="362.5" width="7.2" height="7.2" fill="#2d2de7"/><rect x="612.1" y="362.5" width="7.2" height="7.2" fill="#3030e7"/><rect x="619.0" y="362.5" width="7.2" height="7.2" fill="#3333ea"/><rect x="625.8" y="362.5" width="7.2" height="7.2" fill="#3636ea"/><rect x="632.6" y="362.5" width="7.2" height="7.2" fill="#3c3ced"/><rect x="639.5" y="362.5" width="7.2" height="7.2" fill="#4242f0"/><rect x="646.3" y="362.5" width="7.2" height="7.2" fill="#4848f3"/><rect x="653.1" y="362.5" width="7.2" height="7.2" fill="#4b4bf3"/><rect x="659.9" y="362.5" width="7.2" height="7.2" fill="#5151f6"/><rect x="666.8" y="362.5" width="7.2" height="7.2" fill="#5757f6"/><rect x="673.6" y="362.5" width="7.2" height="7.2" fill="#5d5df9"/><rect x="680.4" y="362.5" width="7.2" height="7.2" fill="#6060f9"/><rect x="687.2" y="362.5" width="7.2" height="7.2" fill="#6363f9"/><rect x="694.1" y="362.5" width="7.2" height="7.2" fill="#6666f9"/><rect x="700.9" y="362.5" width="7.2" height="7.2" fill="#6969f9"/><rect x="707.7" y="362.5" width="7.2" height="7.2" fill="#6c6cfc"/><rect x="714.6" y="362.5" width="7.2" height="7.2" fill="#6f6ffc"/><rect x="441.4" y="369.3" width="7.2" height="7.2" fill="#8181fc"/><rect x="448.3" y="369.3" width="14.1" height="7.2" fill="#7e7efc"/><rect x="461.9" y="369.3" width="7.2" height="7.2" fill="#7b7bfc"/><rect x="468.8" y="369.3" width="7.2" height="7.2" fill="#7878fc"/><rect x="475.6" y="369.3" width="7.2" height="7.2" fill="#7575fc"/><rect x="482.4" y="369.3" width="7.2" height="7.2" fill="#7272fc"/><rect x="489.2" y="369.3" width="7.2" height="7.2" fill="#6c6cfc"/><rect x="496.1" y="369.3" width="7.2" height="7.2" fill="#6969f9"/><rect x="502.9" y="369.3" width="7.2" height="7.2" fill="#6363f9"/><rect x="509.7" y="369.3" width="7.2" height="7.2" fill="#5d5df9"/><rect x="516.5" y="369.3" width="7.2" height="7.2" fill="#5757f6"/><rect x="523.4" y="369.3" width="7.2" height="7.2" fill="#5151f6"/><rect x="530.2" y="369.3" width="7.2" height="7.2" fill="#4b4bf3"/><rect x="537.0" y="369.3" width="7.2" height="7.2" fill="#4848f3"/><rect x="543.9" y="369.3" width="7.2" height="7.2" fill="#4242f0"/><rect x="550.7" y="369.3" width="7.2" height="7.2" fill="#3f3ff0"/><rect x="557.5" y="369.3" width="7.2" height="7.2" fill="#3c3ced"/><rect x="564.3" y="369.3" width="14.1" height="7.2" fill="#3939ed"/><rect x="578.0" y="369.3" width="7.2" height="7.2" fill="#3636ea"/><rect x="584.8" y="369.3" width="14.1" height="7.2" fill="#3333ea"/><rect x="598.5" y="369.3" width="14.1" height="7.2" fill="#3030e7"/><rect x="612.1" y="369.3" width="7.2" height="7.2" fill="#3333ea"/><rect x="619.0" y="369.3" width="7.2" height="7.2" fill="#3636ea"/><rect x="625.8" y="369.3" width="7.2" height="7.2" fill="#3939ed"/><rect x="632.6" y="369.3" width="7.2" height="7.2" fill="#3c3ced"/><rect x="639.5" y="369.3" width="7.2" height="7.2" fill="#4242f0"/><rect x="646.3" y="369.3" width="7.2" height="7.2" fill="#4848f3"/><rect x="653.1" y="369.3" width="7.2" height="7.2" fill="#4e4ef6"/><rect x="659.9" y="369.3" width="7.2" height="7.2" fill="#5151f6"/><rect x="666.8" y="369.3" width="7.2" height="7.2" fill="#5757f6"/><rect x="673.6" y="369.3" width="7.2" height="7.2" fill="#5d5df9"/><rect x="680.4" y="369.3" width="14.1" height="7.2" fill="#6060f9"/><rect x="694.1" y="369.3" width="14.1" height="7.2" fill="#6666f9"/><rect x="707.7" y="369.3" width="7.2" height="7.2" fill="#6969f9"/><rect x="448.3" y="376.2" width="7.2" height="7.2" fill="#7e7efc"/><rect x="455.1" y="376.2" width="7.2" height="7.2" fill="#7b7bfc"/><rect x="461.9" y="376.2" width="14.1" height="7.2" fill="#7878fc"/><rect x="475.6" y="376.2" width="7.2" height="7.2" fill="#7575fc"/><rect x="482.4" y="376.2" width="7.2" height="7.2" fill="#7272fc"/><rect x="489.2" y="376.2" width="7.2" height="7.2" fill="#6f6ffc"/><rect x="496.1" y="376.2" width="7.2" height="7.2" fill="#6969fc"/><rect x="502.9" y="376.2" width="7.2" height="7.2" fill="#6666f9"/><rect x="509.7" y="376.2" width="7.2" height="7.2" fill="#6060f9"/><rect x="516.5" y="376.2" width="7.2" height="7.2" fill="#5a5af6"/><rect x="523.4" y="376.2" width="7.2" height="7.2" fill="#5454f6"/><rect x="530.2" y="376.2" width="7.2" height="7.2" fill="#4e4ef6"/><rect x="537.0" y="376.2" width="7.2" height="7.2" fill="#4848f3"/><rect x="543.9" y="376.2" width="7.2" height="7.2" fill="#4545f0"/><rect x="550.7" y="376.2" width="7.2" height="7.2" fill="#3f3ff0"/><rect x="557.5" y="376.2" width="7.2" height="7.2" fill="#3c3ced"/><rect x="564.3" y="376.2" width="14.1" height="7.2" fill="#3939ed"/><rect x="578.0" y="376.2" width="7.2" height="7.2" fill="#3636ea"/><rect x="584.8" y="376.2" width="14.1" height="7.2" fill="#3333ea"/><rect x="598.5" y="376.2" width="7.2" height="7.2" fill="#3030e7"/><rect x="605.3" y="376.2" width="7.2" height="7.2" fill="#3333ea"/><rect x="612.1" y="376.2" width="7.2" height="7.2" fill="#3636ea"/><rect x="619.0" y="376.2" width="7.2" height="7.2" fill="#3939ed"/><rect x="625.8" y="376.2" width="7.2" height="7.2" fill="#3c3ced"/><rect x="632.6" y="376.2" width="7.2" height="7.2" fill="#3f3ff0"/><rect x="639.5" y="376.2" width="7.2" height="7.2" fill="#4242f0"/><rect x="646.3" y="376.2" width="7.2" height="7.2" fill="#4848f3"/><rect x="653.1" y="376.2" width="7.2" height="7.2" fill="#4e4ef6"/><rect x="659.9" y="376.2" width="7.2" height="7.2" fill="#5454f6"/><rect x="666.8" y="376.2" width="7.2" height="7.2" fill="#5757f6"/><rect x="673.6" y="376.2" width="7.2" height="7.2" fill="#5a5af6"/><rect x="680.4" y="376.2" width="7.2" height="7.2" fill="#5d5df9"/><rect x="687.2" y="376.2" width="7.2" height="7.2" fill="#6060f9"/><rect x="694.1" y="376.2" width="7.2" height="7.2" fill="#6363f9"/><rect x="700.9" y="376.2" width="7.2" height="7.2" fill="#6666f9"/><rect x="455.1" y="383.0" width="7.2" height="7.2" fill="#7b7bfc"/><rect x="461.9" y="383.0" width="7.2" height="7.2" fill="#7878fc"/><rect x="468.8" y="383.0" width="14.1" height="7.2" fill="#7575fc"/><rect x="482.4" y="383.0" width="7.2" height="7.2" fill="#7272fc"/><rect x="489.2" y="383.0" width="7.2" height="7.2" fill="#6f6ffc"/><rect x="496.1" y="383.0" width="7.2" height="7.2" fill="#6c6cfc"/><rect x="502.9" y="383.0" width="7.2" height="7.2" fill="#6666f9"/><rect x="509.7" y="383.0" width="7.2" height="7.2" fill="#6060f9"/><rect x="516.5" y="383.0" width="7.2" height="7.2" fill="#5d5df9"/><rect x="523.4" y="383.0" width="7.2" height="7.2" fill="#5757f6"/><rect x="530.2" y="383.0" width="7.2" height="7.2" fill="#5151f6"/><rect x="537.0" y="383.0" width="7.2" height="7.2" fill="#4b4bf3"/><rect x="543.9" y="383.0" width="7.2" height="7.2" fill="#4545f3"/><rect x="550.7" y="383.0" width="7.2" height="7.2" fill="#4242f0"/><rect x="557.5" y="383.0" width="7.2" height="7.2" fill="#3c3ced"/><rect x="564.3" y="383.0" width="14.1" height="7.2" fill="#3939ed"/><rect x="578.0" y="383.0" width="7.2" height="7.2" fill="#3636ea"/><rect x="584.8" y="383.0" width="20.9" height="7.2" fill="#3333ea"/><rect x="605.3" y="383.0" width="7.2" height="7.2" fill="#3636ea"/><rect x="612.1" y="383.0" width="7.2" height="7.2" fill="#3939ed"/><rect x="619.0" y="383.0" width="7.2" height="7.2" fill="#3c3ced"/><rect x="625.8" y="383.0" width="7.2" height="7.2" fill="#3f3ff0"/><rect x="632.6" y="383.0" width="7.2" height="7.2" fill="#4242f0"/><rect x="639.5" y="383.0" width="7.2" height="7.2" fill="#4545f3"/><rect x="646.3" y="383.0" width="7.2" height="7.2" fill="#4b4bf3"/><rect x="653.1" y="383.0" width="7.2" height="7.2" fill="#4e4ef6"/><rect x="659.9" y="383.0" width="7.2" height="7.2" fill="#5454f6"/><rect x="666.8" y="383.0" width="14.1" height="7.2" fill="#5757f6"/><rect x="680.4" y="383.0" width="7.2" height="7.2" fill="#5a5af9"/><rect x="687.2" y="383.0" width="7.2" height="7.2" fill="#5d5df9"/><rect x="694.1" y="383.0" width="7.2" height="7.2" fill="#6060f9"/><rect x="461.9" y="389.8" width="7.2" height="7.2" fill="#7878fc"/><rect x="468.8" y="389.8" width="7.2" height="7.2" fill="#7575fc"/><rect x="475.6" y="389.8" width="14.1" height="7.2" fill="#7272fc"/><rect x="489.2" y="389.8" width="7.2" height="7.2" fill="#6f6ffc"/><rect x="496.1" y="389.8" width="7.2" height="7.2" fill="#6c6cfc"/><rect x="502.9" y="389.8" width="7.2" height="7.2" fill="#6969f9"/><rect x="509.7" y="389.8" width="7.2" height="7.2" fill="#6363f9"/><rect x="516.5" y="389.8" width="7.2" height="7.2" fill="#5d5df9"/><rect x="523.4" y="389.8" width="7.2" height="7.2" fill="#5757f6"/><rect x="530.2" y="389.8" width="7.2" height="7.2" fill="#5151f6"/><rect x="537.0" y="389.8" width="7.2" height="7.2" fill="#4e4ef6"/><rect x="543.9" y="389.8" width="7.2" height="7.2" fill="#4848f3"/><rect x="550.7" y="389.8" width="7.2" height="7.2" fill="#4242f0"/><rect x="557.5" y="389.8" width="7.2" height="7.2" fill="#3f3fed"/><rect x="564.3" y="389.8" width="14.1" height="7.2" fill="#3939ed"/><rect x="578.0" y="389.8" width="7.2" height="7.2" fill="#3636ea"/><rect x="584.8" y="389.8" width="7.2" height="7.2" fill="#3333ea"/><rect x="591.7" y="389.8" width="14.1" height="7.2" fill="#3636ea"/><rect x="605.3" y="389.8" width="7.2" height="7.2" fill="#3939ed"/><rect x="612.1" y="389.8" width="7.2" height="7.2" fill="#3c3ced"/><rect x="619.0" y="389.8" width="7.2" height="7.2" fill="#3f3ff0"/><rect x="625.8" y="389.8" width="7.2" height="7.2" fill="#4242f0"/><rect x="632.6" y="389.8" width="7.2" height="7.2" fill="#4545f3"/><rect x="639.5" y="389.8" width="7.2" height="7.2" fill="#4848f3"/><rect x="646.3" y="389.8" width="7.2" height="7.2" fill="#4b4bf3"/><rect x="653.1" y="389.8" width="7.2" height="7.2" fill="#4e4ef6"/><rect x="659.9" y="389.8" width="7.2" height="7.2" fill="#5151f6"/><rect x="666.8" y="389.8" width="7.2" height="7.2" fill="#5454f6"/><rect x="673.6" y="389.8" width="7.2" height="7.2" fill="#5757f6"/><rect x="680.4" y="389.8" width="7.2" height="7.2" fill="#5a5af6"/><rect x="687.2" y="389.8" width="7.2" height="7.2" fill="#5d5df9"/><rect x="468.8" y="396.7" width="7.2" height="7.2" fill="#7575fc"/><rect x="475.6" y="396.7" width="7.2" height="7.2" fill="#7272fc"/><rect x="482.4" y="396.7" width="14.1" height="7.2" fill="#6f6ffc"/><rect x="496.1" y="396.7" width="7.2" height="7.2" fill="#6c6cfc"/><rect x="502.9" y="396.7" width="7.2" height="7.2" fill="#6969f9"/><rect x="509.7" y="396.7" width="7.2" height="7.2" fill="#6363f9"/><rect x="516.5" y="396.7" width="7.2" height="7.2" fill="#5d5df9"/><rect x="523.4" y="396.7" width="7.2" height="7.2" fill="#5a5af6"/><rect x="530.2" y="396.7" width="7.2" height="7.2" fill="#5454f6"/><rect x="537.0" y="396.7" width="7.2" height="7.2" fill="#4e4ef6"/><rect x="543.9" y="396.7" width="7.2" height="7.2" fill="#4b4bf3"/><rect x="550.7" y="396.7" width="7.2" height="7.2" fill="#4545f0"/><rect x="557.5" y="396.7" width="7.2" height="7.2" fill="#3f3ff0"/><rect x="564.3" y="396.7" width="7.2" height="7.2" fill="#3c3ced"/><rect x="571.2" y="396.7" width="7.2" height="7.2" fill="#3939ed"/><rect x="578.0" y="396.7" width="20.9" height="7.2" fill="#3636ea"/><rect x="598.5" y="396.7" width="7.2" height="7.2" fill="#3939ed"/><rect x="605.3" y="396.7" width="7.2" height="7.2" fill="#3c3ced"/><rect x="612.1" y="396.7" width="7.2" height="7.2" fill="#3f3ff0"/><rect x="619.0" y="396.7" width="7.2" height="7.2" fill="#4242f0"/><rect x="625.8" y="396.7" width="7.2" height="7.2" fill="#4545f0"/><rect x="632.6" y="396.7" width="7.2" height="7.2" fill="#4545f3"/><rect x="639.5" y="396.7" width="7.2" height="7.2" fill="#4848f3"/><rect x="646.3" y="396.7" width="7.2" height="7.2" fill="#4b4bf3"/><rect x="653.1" y="396.7" width="7.2" height="7.2" fill="#4e4ef6"/><rect x="659.9" y="396.7" width="7.2" height="7.2" fill="#5151f6"/><rect x="666.8" y="396.7" width="14.1" height="7.2" fill="#5454f6"/><rect x="680.4" y="396.7" width="7.2" height="7.2" fill="#5757f6"/><rect x="475.6" y="403.5" width="7.2" height="7.2" fill="#7272fc"/><rect x="482.4" y="403.5" width="7.2" height="7.2" fill="#6f6ffc"/><rect x="489.2" y="403.5" width="7.2" height="7.2" fill="#6c6cfc"/><rect x="496.1" y="403.5" width="7.2" height="7.2" fill="#6969f9"/><rect x="502.9" y="403.5" width="7.2" height="7.2" fill="#6666f9"/><rect x="509.7" y="403.5" width="7.2" height="7.2" fill="#6060f9"/><rect x="516.5" y="403.5" width="7.2" height="7.2" fill="#5d5df9"/><rect x="523.4" y="403.5" width="7.2" height="7.2" fill="#5757f6"/><rect x="530.2" y="403.5" width="7.2" height="7.2" fill="#5454f6"/><rect x="537.0" y="403.5" width="7.2" height="7.2" fill="#4e4ef6"/><rect x="543.9" y="403.5" width="7.2" height="7.2" fill="#4b4bf3"/><rect x="550.7" y="403.5" width="7.2" height="7.2" fill="#4545f3"/><rect x="557.5" y="403.5" width="7.2" height="7.2" fill="#4242f0"/><rect x="564.3" y="403.5" width="7.2" height="7.2" fill="#3c3ced"/><rect x="571.2" y="403.5" width="7.2" height="7.2" fill="#3939ed"/><rect x="578.0" y="403.5" width="7.2" height="7.2" fill="#3636ea"/><rect x="584.8" y="403.5" width="7.2" height="7.2" fill="#3939ea"/><rect x="591.7" y="403.5" width="7.2" height="7.2" fill="#3939ed"/><rect x="598.5" y="403.5" width="14.1" height="7.2" fill="#3c3ced"/><rect x="612.1" y="403.5" width="7.2" height="7.2" fill="#3f3ff0"/><rect x="619.0" y="403.5" width="14.1" height="7.2" fill="#4242f0"/><rect x="632.6" y="403.5" width="7.2" height="7.2" fill="#4545f3"/><rect x="639.5" y="403.5" width="7.2" height="7.2" fill="#4848f3"/><rect x="646.3" y="403.5" width="7.2" height="7.2" fill="#4b4bf3"/><rect x="653.1" y="403.5" width="7.2" height="7.2" fill="#4b4bf6"/><rect x="659.9" y="403.5" width="7.2" height="7.2" fill="#4e4ef6"/><rect x="666.8" y="403.5" width="7.2" height="7.2" fill="#5151f6"/><rect x="673.6" y="403.5" width="7.2" height="7.2" fill="#5454f6"/><rect x="489.2" y="410.3" width="7.2" height="7.2" fill="#6969fc"/><rect x="496.1" y="410.3" width="7.2" height="7.2" fill="#6666f9"/><rect x="502.9" y="410.3" width="7.2" height="7.2" fill="#6363f9"/><rect x="509.7" y="410.3" width="7.2" height="7.2" fill="#6060f9"/><rect x="516.5" y="410.3" width="7.2" height="7.2" fill="#5a5af6"/><rect x="523.4" y="410.3" width="7.2" height="7.2" fill="#5757f6"/><rect x="530.2" y="410.3" width="7.2" height="7.2" fill="#5151f6"/><rect x="537.0" y="410.3" width="7.2" height="7.2" fill="#4e4ef6"/><rect x="543.9" y="410.3" width="7.2" height="7.2" fill="#4b4bf3"/><rect x="550.7" y="410.3" width="7.2" height="7.2" fill="#4545f3"/><rect x="557.5" y="410.3" width="7.2" height="7.2" fill="#4242f0"/><rect x="564.3" y="410.3" width="7.2" height="7.2" fill="#3c3ced"/><rect x="571.2" y="410.3" width="7.2" height="7.2" fill="#3939ed"/><rect x="578.0" y="410.3" width="7.2" height="7.2" fill="#3939ea"/><rect x="584.8" y="410.3" width="14.1" height="7.2" fill="#3939ed"/><rect x="598.5" y="410.3" width="14.1" height="7.2" fill="#3c3ced"/><rect x="612.1" y="410.3" width="7.2" height="7.2" fill="#3f3ff0"/><rect x="619.0" y="410.3" width="14.1" height="7.2" fill="#4242f0"/><rect x="632.6" y="410.3" width="7.2" height="7.2" fill="#4545f3"/><rect x="639.5" y="410.3" width="14.1" height="7.2" fill="#4848f3"/><rect x="653.1" y="410.3" width="7.2" height="7.2" fill="#4b4bf3"/><rect x="659.9" y="410.3" width="7.2" height="7.2" fill="#4e4ef6"/><rect x="502.9" y="417.1" width="7.2" height="7.2" fill="#6060f9"/><rect x="509.7" y="417.1" width="7.2" height="7.2" fill="#5d5df9"/><rect x="516.5" y="417.1" width="7.2" height="7.2" fill="#5a5af6"/><rect x="523.4" y="417.1" width="7.2" height="7.2" fill="#5757f6"/><rect x="530.2" y="417.1" width="7.2" height="7.2" fill="#5151f6"/><rect x="537.0" y="417.1" width="7.2" height="7.2" fill="#4e4ef6"/><rect x="543.9" y="417.1" width="7.2" height="7.2" fill="#4848f3"/><rect x="550.7" y="417.1" width="7.2" height="7.2" fill="#4545f3"/><rect x="557.5" y="417.1" width="7.2" height="7.2" fill="#4242f0"/><rect x="564.3" y="417.1" width="7.2" height="7.2" fill="#3c3ced"/><rect x="571.2" y="417.1" width="7.2" height="7.2" fill="#3939ed"/><rect x="578.0" y="417.1" width="7.2" height="7.2" fill="#3939ea"/><rect x="584.8" y="417.1" width="14.1" height="7.2" fill="#3939ed"/><rect x="598.5" y="417.1" width="14.1" height="7.2" fill="#3c3ced"/><rect x="612.1" y="417.1" width="14.1" height="7.2" fill="#3f3ff0"/><rect x="625.8" y="417.1" width="7.2" height="7.2" fill="#4242f0"/><rect x="632.6" y="417.1" width="7.2" height="7.2" fill="#4545f3"/><rect x="639.5" y="417.1" width="14.1" height="7.2" fill="#4848f3"/><rect x="516.5" y="424.0" width="7.2" height="7.2" fill="#5757f6"/><rect x="523.4" y="424.0" width="7.2" height="7.2" fill="#5454f6"/><rect x="530.2" y="424.0" width="7.2" height="7.2" fill="#5151f6"/><rect x="537.0" y="424.0" width="7.2" height="7.2" fill="#4b4bf3"/><rect x="543.9" y="424.0" width="7.2" height="7.2" fill="#4848f3"/><rect x="550.7" y="424.0" width="7.2" height="7.2" fill="#4545f3"/><rect x="557.5" y="424.0" width="7.2" height="7.2" fill="#4242f0"/><rect x="564.3" y="424.0" width="7.2" height="7.2" fill="#3c3ced"/><rect x="571.2" y="424.0" width="27.7" height="7.2" fill="#3939ed"/><rect x="598.5" y="424.0" width="14.1" height="7.2" fill="#3c3ced"/><rect x="612.1" y="424.0" width="14.1" height="7.2" fill="#3f3ff0"/><rect x="625.8" y="424.0" width="7.2" height="7.2" fill="#4242f0"/><rect x="632.6" y="424.0" width="7.2" height="7.2" fill="#4545f0"/></g><path d="M407.3 260.1 A170.7 170.7 0 0 1 748.7 260.1 A170.7 170.7 0 0 1 635.29 420.9 L520.71 420.9 A170.7 170.7 0 0 1 407.3 260.1z" fill="none" stroke="#8c8c94" stroke-width="0.6" shape-rendering="geometricPrecision" opacity="0.8"/><circle cx="578.0" cy="259.8" r="1.7" fill="#000084" shape-rendering="geometricPrecision"/><circle cx="629.2" cy="259.8" r="1.7" fill="#000084" shape-rendering="geometricPrecision"/><circle cx="578.0" cy="208.6" r="1.7" fill="#000084" shape-rendering="geometricPrecision"/><circle cx="526.8" cy="259.8" r="1.7" fill="#000084" shape-rendering="geometricPrecision"/><circle cx="578.0" cy="311.0" r="1.7" fill="#000084" shape-rendering="geometricPrecision"/><circle cx="672.6" cy="220.6" r="1.7" fill="#000084" shape-rendering="geometricPrecision"/><circle cx="617.2" cy="165.2" r="1.7" fill="#000084" shape-rendering="geometricPrecision"/><circle cx="538.8" cy="165.2" r="1.7" fill="#000084" shape-rendering="geometricPrecision"/><circle cx="483.4" cy="220.6" r="1.7" fill="#000084" shape-rendering="geometricPrecision"/><circle cx="483.4" cy="299.0" r="1.7" fill="#000084" shape-rendering="geometricPrecision"/><circle cx="538.8" cy="354.4" r="1.7" fill="#000084" shape-rendering="geometricPrecision"/><circle cx="617.2" cy="354.4" r="1.7" fill="#000084" shape-rendering="geometricPrecision"/><circle cx="672.6" cy="299.0" r="1.7" fill="#000084" shape-rendering="geometricPrecision"/><circle cx="731.6" cy="259.8" r="1.7" fill="#000084" shape-rendering="geometricPrecision"/><circle cx="711.0" cy="183.0" r="1.7" fill="#000084" shape-rendering="geometricPrecision"/><circle cx="654.8" cy="126.8" r="1.7" fill="#000084" shape-rendering="geometricPrecision"/><circle cx="578.0" cy="106.2" r="1.7" fill="#000084" shape-rendering="geometricPrecision"/><circle cx="501.2" cy="126.8" r="1.7" fill="#000084" shape-rendering="geometricPrecision"/><circle cx="445.0" cy="183.0" r="1.7" fill="#000084" shape-rendering="geometricPrecision"/><circle cx="424.4" cy="259.8" r="1.7" fill="#000084" shape-rendering="geometricPrecision"/><circle cx="445.0" cy="336.6" r="1.7" fill="#000084" shape-rendering="geometricPrecision"/><circle cx="501.2" cy="392.8" r="1.7" fill="#000084" shape-rendering="geometricPrecision"/><circle cx="578.0" cy="403.7" r="1.7" fill="#000084" shape-rendering="geometricPrecision"/><circle cx="654.8" cy="392.8" r="1.7" fill="#000084" shape-rendering="geometricPrecision"/><circle cx="711.0" cy="336.6" r="1.7" fill="#000084" shape-rendering="geometricPrecision"/></svg>
<div style="top:261.70px;font-size:9px;line-height:12px;color:#101018;letter-spacing:-0.35px;white-space:nowrap;left:428.5px;width:300px;text-align:center;">212.80 nm</div>
<div style="top:261.70px;font-size:9px;line-height:12px;color:#101018;letter-spacing:-0.35px;white-space:nowrap;left:479.70000000000005px;width:300px;text-align:center;">212.92 nm</div>
<div style="top:210.50px;font-size:9px;line-height:12px;color:#101018;letter-spacing:-0.35px;white-space:nowrap;left:428.5px;width:300px;text-align:center;">212.27 nm</div>
<div style="top:261.70px;font-size:9px;line-height:12px;color:#101018;letter-spacing:-0.35px;white-space:nowrap;left:377.29999999999995px;width:300px;text-align:center;">213.17 nm</div>
<div style="top:312.90px;font-size:9px;line-height:12px;color:#101018;letter-spacing:-0.35px;white-space:nowrap;left:428.5px;width:300px;text-align:center;">213.43 nm</div>
<div style="top:222.51px;font-size:9px;line-height:12px;color:#101018;letter-spacing:-0.35px;white-space:nowrap;left:523.1px;width:300px;text-align:center;">212.35 nm</div>
<div style="top:167.09px;font-size:9px;line-height:12px;color:#101018;letter-spacing:-0.35px;white-space:nowrap;left:467.70000000000005px;width:300px;text-align:center;">210.92 nm</div>
<div style="top:167.09px;font-size:9px;line-height:12px;color:#101018;letter-spacing:-0.35px;white-space:nowrap;left:389.29999999999995px;width:300px;text-align:center;">211.16 nm</div>
<div style="top:222.51px;font-size:9px;line-height:12px;color:#101018;letter-spacing:-0.35px;white-space:nowrap;left:333.9px;width:300px;text-align:center;">212.10 nm</div>
<div style="top:300.89px;font-size:9px;line-height:12px;color:#101018;letter-spacing:-0.35px;white-space:nowrap;left:333.9px;width:300px;text-align:center;">214.28 nm</div>
<div style="top:356.31px;font-size:9px;line-height:12px;color:#101018;letter-spacing:-0.35px;white-space:nowrap;left:389.29999999999995px;width:300px;text-align:center;">214.13 nm</div>
<div style="top:356.31px;font-size:9px;line-height:12px;color:#101018;letter-spacing:-0.35px;white-space:nowrap;left:467.70000000000005px;width:300px;text-align:center;">214.81 nm</div>
<div style="top:300.89px;font-size:9px;line-height:12px;color:#101018;letter-spacing:-0.35px;white-space:nowrap;left:523.1px;width:300px;text-align:center;">213.77 nm</div>
<div style="top:261.70px;font-size:9px;line-height:12px;color:#101018;letter-spacing:-0.35px;white-space:nowrap;left:582.1px;width:300px;text-align:center;">211.16 nm</div>
<div style="top:184.90px;font-size:9px;line-height:12px;color:#101018;letter-spacing:-0.35px;white-space:nowrap;left:561.5px;width:300px;text-align:center;">209.89 nm</div>
<div style="top:128.68px;font-size:9px;line-height:12px;color:#101018;letter-spacing:-0.35px;white-space:nowrap;left:505.29999999999995px;width:300px;text-align:center;">209.81 nm</div>
<div style="top:108.10px;font-size:9px;line-height:12px;color:#101018;letter-spacing:-0.35px;white-space:nowrap;left:428.5px;width:300px;text-align:center;">210.25 nm</div>
<div style="top:128.68px;font-size:9px;line-height:12px;color:#101018;letter-spacing:-0.35px;white-space:nowrap;left:351.7px;width:300px;text-align:center;">208.99 nm</div>
<div style="top:184.90px;font-size:9px;line-height:12px;color:#101018;letter-spacing:-0.35px;white-space:nowrap;left:295.5px;width:300px;text-align:center;">209.79 nm</div>
<div style="top:261.70px;font-size:9px;line-height:12px;color:#101018;letter-spacing:-0.35px;white-space:nowrap;left:274.9px;width:300px;text-align:center;">211.65 nm</div>
<div style="top:338.50px;font-size:9px;line-height:12px;color:#101018;letter-spacing:-0.35px;white-space:nowrap;left:295.5px;width:300px;text-align:center;">211.93 nm</div>
<div style="top:394.72px;font-size:9px;line-height:12px;color:#101018;letter-spacing:-0.35px;white-space:nowrap;left:351.7px;width:300px;text-align:center;">212.85 nm</div>
<div style="top:405.60px;font-size:9px;line-height:12px;color:#101018;letter-spacing:-0.35px;white-space:nowrap;left:428.5px;width:300px;text-align:center;">214.46 nm</div>
<div style="top:394.72px;font-size:9px;line-height:12px;color:#101018;letter-spacing:-0.35px;white-space:nowrap;left:505.29999999999995px;width:300px;text-align:center;">213.76 nm</div>
<div style="top:338.50px;font-size:9px;line-height:12px;color:#101018;letter-spacing:-0.35px;white-space:nowrap;left:561.5px;width:300px;text-align:center;">212.52 nm</div>
<div style="top:442.60px;font-size:9px;line-height:12px;color:#000;letter-spacing:-0.16px;white-space:nowrap;left:426.4px;width:300px;text-align:center;">Sample Diameter: 100 mm</div>
<div style="left:403px;top:459px;width:349px;height:61px;border:1px solid #dcdcdc;box-shadow:inset 1px 1px 0 #fafafa;"></div>
<div style="left:409.5px;top:471px;width:51.0px;height:17px;background:#e1e1e1;border:1px solid #adadad;"></div>
<div style="top:472.80px;font-size:10.5px;line-height:14px;color:#000;letter-spacing:-0.2px;white-space:nowrap;left:285.0px;width:300px;text-align:center;">Start</div>
<div style="left:465.5px;top:471px;width:43.0px;height:17px;background:#cfcfcf;border:1px solid #c0c0c0;"></div>
<div style="top:472.80px;font-size:10.5px;line-height:14px;color:#a4a4a4;letter-spacing:-0.2px;white-space:nowrap;left:337.0px;width:300px;text-align:center;">Stop</div>
<div style="left:513.5px;top:471px;width:43.5px;height:17px;background:#e1e1e1;border:1px solid #adadad;"></div>
<div style="top:472.80px;font-size:10.5px;line-height:14px;color:#000;letter-spacing:-0.2px;white-space:nowrap;left:385.25px;width:300px;text-align:center;">New</div>
<div style="left:562.5px;top:471px;width:50.0px;height:17px;background:#e1e1e1;border:1px solid #adadad;"></div>
<div style="top:472.80px;font-size:10.5px;line-height:14px;color:#000;letter-spacing:-0.2px;white-space:nowrap;left:437.5px;width:300px;text-align:center;">Go To...</div>
<div style="left:618px;top:471px;width:58.5px;height:17px;background:#e1e1e1;border:1px solid #adadad;"></div>
<div style="top:472.80px;font-size:10.5px;line-height:14px;color:#000;letter-spacing:-0.2px;white-space:nowrap;left:497.25px;width:300px;text-align:center;">Baseline...</div>
<div style="left:681.5px;top:471px;width:66.0px;height:17px;background:#e1e1e1;border:1px solid #adadad;"></div>
<div style="top:472.80px;font-size:10.5px;line-height:14px;color:#000;letter-spacing:-0.2px;white-space:nowrap;left:564.5px;width:300px;text-align:center;">Reanalyze</div>
<div style="top:499.00px;font-size:9px;line-height:12px;color:#000;letter-spacing:0px;white-space:nowrap;left:411px;">Recipe:</div>
<div style="left:449px;top:499.5px;width:148.5px;height:11.5px;background:#fff;border-top:1px solid #9a9a9a;border-left:1px solid #b0b0b0;"></div>
<div style="top:499.00px;font-size:9px;line-height:12px;color:#000;letter-spacing:-0.3px;white-space:nowrap;left:451.5px;">HfO2 on SOI</div>
<div style="left:598.5px;top:499.5px;width:10px;height:11.5px;background:#f4f4f4;border:1px solid #b4b4b4;"></div>
<svg style="left:601px;top:504px" width="6" height="4" viewBox="0 0 6 4"><path d="M0.3 0.3 L5.7 0.3 L3 3.6z" fill="#000"/></svg>
<div style="left:618px;top:497px;width:58.5px;height:17px;background:#e1e1e1;border:1px solid #adadad;"></div>
<div style="top:498.80px;font-size:10.5px;line-height:14px;color:#000;letter-spacing:-0.2px;white-space:nowrap;left:497.25px;width:300px;text-align:center;">Edit...</div>
<svg style="left:0;top:0" width="1269" height="771" viewBox="0 0 1269 771">
<g fill="#4a8fd3" stroke="#4a8fd3" stroke-width="0.7" font-family='"Liberation Sans", Arial, sans-serif' font-weight="bold" font-style="italic" font-size="32.2">
<g transform="translate(1079.6,113.3) scale(0.835,1)"><text x="0" y="0" letter-spacing="-1.7">FIL</text></g>
<g transform="translate(1114.0,113.3) scale(1.12,1)"><text x="0" y="0">M</text></g>
<g transform="translate(1144.6,113.3) scale(0.835,1)"><text x="0" y="0" letter-spacing="-1.6">ETRICS</text></g>
</g>
<path d="M1133.6 112.5 L1140.2 112.5 L1138.6 122.2 L1132.9 122.2z" fill="#4a8fd3"/>
</svg>
<div style="left:1141.8px;top:115px;font-size:7.6px;line-height:9px;color:#e02030;font-style:italic;white-space:nowrap;letter-spacing:4.2px">IIIII</div>
<div style="left:1172.3px;top:115px;font-size:7.8px;line-height:9px;color:#e02030;font-style:italic;white-space:nowrap;">A</div>
<div style="left:1180.2px;top:115px;font-size:7.6px;line-height:9px;color:#dc1020;font-style:italic;font-weight:bold;white-space:nowrap;letter-spacing:-0.45px;-webkit-text-stroke:0.3px #dc1020">KLA</div>
<div style="left:1198.4px;top:115px;font-size:7.9px;line-height:9px;color:#e02030;font-style:italic;white-space:nowrap;letter-spacing:0px">Company</div>
<div style="left:1072px;top:132.3px;width:173.5px;height:58.69999999999999px;border:1px solid #dcdcdc;box-shadow:inset 1px 1px 0 #fbfbfb, 1px 1px 0 #fbfbfb;"></div>
<div style="left:1077.0px;top:127.10000000000001px;height:12px;line-height:12px;font-size:9px;letter-spacing:-0.25px;background:#f0f0f0;padding:0 1.5px;white-space:nowrap;">Map Information</div>
<div style="top:140.00px;font-size:9px;line-height:12px;color:#000;letter-spacing:-0.25px;white-space:nowrap;right:156.5px;text-align:right;">ID</div>
<div style="left:1123.5px;top:138.5px;width:91.5px;height:14.0px;background:#fff;border:1px solid #c8c8c8;border-top-color:#8c8c8c;border-left-color:#a0a0a0;"></div>
<div style="top:139.80px;font-size:9px;line-height:12px;color:#000;letter-spacing:-0.3px;white-space:nowrap;left:1125.5px;">Unknown</div>
<div style="top:156.00px;font-size:9px;line-height:12px;color:#000;letter-spacing:-0.25px;white-space:nowrap;right:151.4000000000001px;text-align:right;">Date</div>
<div style="left:1123.5px;top:155px;width:91.5px;height:13.5px;background:#f0f0f0;border:1px solid #c6c6c6;box-shadow:inset 1px 1px 0 #bcbcbc;"></div>
<div style="top:156.05px;font-size:9px;line-height:12px;color:#6d6d6d;letter-spacing:-0.3px;white-space:nowrap;left:1125.5px;">2021/8/26 10:09:11</div>
<div style="top:174.30px;font-size:9px;line-height:12px;color:#000;letter-spacing:-0.25px;white-space:nowrap;right:155px;text-align:right;">File</div>
<div style="left:1123px;top:173.3px;width:90.29999999999995px;height:14.0px;background:#fff;border:1px solid #c8c8c8;border-top-color:#8c8c8c;border-left-color:#a0a0a0;"></div>
<div style="top:174.60px;font-size:9px;line-height:12px;color:#000;letter-spacing:-0.3px;white-space:nowrap;left:1125.0px;">Untitled</div>
<div style="left:1072px;top:201.4px;width:173.5px;height:188.1px;border:1px solid #dcdcdc;box-shadow:inset 1px 1px 0 #fbfbfb, 1px 1px 0 #fbfbfb;"></div>
<div style="left:1077.0px;top:196.20000000000002px;height:12px;line-height:12px;font-size:9px;letter-spacing:-0.25px;background:#f0f0f0;padding:0 1.5px;white-space:nowrap;">Display</div>
<div style="top:206.00px;font-size:9px;line-height:12px;color:#000;letter-spacing:-0.12px;white-space:nowrap;left:1096px;">Parameter to Display:</div>
<div style="left:1093px;top:217.5px;width:119px;height:15.5px;background:#e2e2e2;border:1px solid #adadad;"></div>
<div style="top:219.60px;font-size:9px;line-height:12px;color:#000;letter-spacing:-0.2px;white-space:nowrap;left:1096px;">Site 1 Layer 2 Thickness</div>
<svg style="left:1202px;top:223px" width="8" height="5" viewBox="0 0 8 5"><path d="M0.8 0.8 L4 4 L7.2 0.8" stroke="#444" stroke-width="1" fill="none"/></svg>
<div style="left:1084px;top:253px;width:156.5px;height:43px;background:#f2f2f2;border:1px solid #fcfcfc;border-top-color:#e4e4e4;border-right-color:#e8e8e8;"></div>
<div style="left:1117px;top:239px;width:29.5px;height:14.5px;background:#f0f0f0;border:1px solid #dedede;border-bottom:none;"></div>
<div style="left:1084px;top:238px;width:33.5px;height:16px;background:#fff;border:1px solid #f0f0f0;border-bottom:none;"></div>
<div style="top:239.30px;font-size:9px;line-height:12px;color:#000;letter-spacing:-0.3px;white-space:nowrap;left:1088.2px;">2D</div>
<div style="top:239.90px;font-size:9px;line-height:12px;color:#000;letter-spacing:-0.3px;white-space:nowrap;left:1120.2px;">3D</div>
<div style="left:1088px;top:259px;width:9px;height:9px;background:#fff;border:1px solid #333;"></div>
<svg style="left:1088px;top:259px" width="9" height="9" viewBox="0 0 9 9"><path d="M1.8 4.4 L3.7 6.4 L7.3 2.2" stroke="#222" stroke-width="0.95" fill="none"/></svg>
<div style="top:257.80px;font-size:9px;line-height:12px;color:#000;letter-spacing:-0.15px;white-space:nowrap;left:1100.5px;">Show Color</div>
<div style="left:1088px;top:280px;width:9px;height:9px;background:#fff;border:1px solid #333;"></div>
<svg style="left:1088px;top:280px" width="9" height="9" viewBox="0 0 9 9"><path d="M1.8 4.4 L3.7 6.4 L7.3 2.2" stroke="#222" stroke-width="0.95" fill="none"/></svg>
<div style="top:278.90px;font-size:9px;line-height:12px;color:#000;letter-spacing:-0.15px;white-space:nowrap;left:1100.5px;">Show Points</div>
<div style="left:1163px;top:280px;width:9px;height:9px;background:#fff;border:1px solid #333;"></div>
<svg style="left:1163px;top:280px" width="9" height="9" viewBox="0 0 9 9"><path d="M1.8 4.4 L3.7 6.4 L7.3 2.2" stroke="#222" stroke-width="0.95" fill="none"/></svg>
<div style="top:278.90px;font-size:9px;line-height:12px;color:#000;letter-spacing:-0.15px;white-space:nowrap;left:1175.4px;">Show Values</div>
<div style="left:1118.5px;top:301.7px;width:9px;height:9px;background:#fff;border:1px solid #333;"></div>
<div style="top:300.40px;font-size:9px;line-height:12px;color:#000;letter-spacing:-0.15px;white-space:nowrap;left:1130.8px;">Manual Color</div>
<div style="left:1112.5px;top:321.5px;width:102.5px;height:39.5px;border:1px solid #dcdcdc;box-shadow:inset 1px 1px 0 #fbfbfb, 1px 1px 0 #fbfbfb;"></div>
<div style="left:1115.8px;top:316.3px;height:12px;line-height:12px;font-size:9px;letter-spacing:-0.25px;background:#f0f0f0;padding:0 1.5px;white-space:nowrap;">Color Scale Range</div>
<div style="top:331.30px;font-size:9px;line-height:12px;color:#000;letter-spacing:-0.25px;white-space:nowrap;left:1118px;">Min</div>
<div style="left:1137px;top:330.6px;width:44px;height:12.899999999999977px;background:#f0f0f0;border:1px solid #c6c6c6;box-shadow:inset 1px 1px 0 #bcbcbc;"></div>
<div style="top:331.35px;font-size:9px;line-height:12px;color:#6d6d6d;letter-spacing:-0.3px;white-space:nowrap;left:1139.0px;">206.9</div>
<div style="top:331.30px;font-size:9px;line-height:12px;color:#000;letter-spacing:-0.25px;white-space:nowrap;left:1187.4px;">nm</div>
<div style="top:346.90px;font-size:9px;line-height:12px;color:#000;letter-spacing:-0.25px;white-space:nowrap;left:1115.5px;">Max</div>
<div style="left:1137px;top:346.4px;width:44px;height:13.100000000000023px;background:#f0f0f0;border:1px solid #c6c6c6;box-shadow:inset 1px 1px 0 #bcbcbc;"></div>
<div style="top:347.25px;font-size:9px;line-height:12px;color:#6d6d6d;letter-spacing:-0.3px;white-space:nowrap;left:1139.0px;">216.9</div>
<div style="top:346.90px;font-size:9px;line-height:12px;color:#000;letter-spacing:-0.25px;white-space:nowrap;left:1187.4px;">nm</div>
<div style="left:1136px;top:367.5px;width:52px;height:16.5px;background:#e1e1e1;border:1px solid #adadad;"></div>
<div style="top:369.05px;font-size:10.5px;line-height:14px;color:#000;letter-spacing:-0.2px;white-space:nowrap;left:1012.0px;width:300px;text-align:center;">Replot</div>
<div style="left:1072px;top:400px;width:173.5px;height:145px;border:1px solid #dcdcdc;box-shadow:inset 1px 1px 0 #fbfbfb, 1px 1px 0 #fbfbfb;"></div>
<div style="left:1077.0px;top:394.8px;height:12px;line-height:12px;font-size:9px;letter-spacing:-0.25px;background:#f0f0f0;padding:0 1.5px;white-space:nowrap;">Results</div>
<div style="top:406.60px;font-size:9px;line-height:12px;color:#000;letter-spacing:-0.25px;white-space:nowrap;right:114px;text-align:right;">Min:</div>
<div style="left:1160px;top:405.5px;width:58.700000000000045px;height:13.600000000000023px;background:#fff;border:1px solid #c8c8c8;border-top-color:#8c8c8c;border-left-color:#a0a0a0;"></div>
<div style="top:406.60px;font-size:9px;line-height:12px;color:#000;letter-spacing:-0.3px;white-space:nowrap;right:51.5px;text-align:right;">208.99 nm</div>
<div style="top:422.37px;font-size:9px;line-height:12px;color:#000;letter-spacing:-0.25px;white-space:nowrap;right:114px;text-align:right;">Max:</div>
<div style="left:1160px;top:421.27px;width:58.700000000000045px;height:13.600000000000023px;background:#fff;border:1px solid #c8c8c8;border-top-color:#8c8c8c;border-left-color:#a0a0a0;"></div>
<div style="top:422.37px;font-size:9px;line-height:12px;color:#000;letter-spacing:-0.3px;white-space:nowrap;right:51.5px;text-align:right;">214.81 nm</div>
<div style="top:438.14px;font-size:9px;line-height:12px;color:#000;letter-spacing:-0.25px;white-space:nowrap;right:114px;text-align:right;">Mean:</div>
<div style="left:1160px;top:437.04px;width:58.700000000000045px;height:13.600000000000023px;background:#fff;border:1px solid #c8c8c8;border-top-color:#8c8c8c;border-left-color:#a0a0a0;"></div>
<div style="top:438.14px;font-size:9px;line-height:12px;color:#000;letter-spacing:-0.3px;white-space:nowrap;right:51.5px;text-align:right;">212.21 nm</div>
<div style="top:453.91px;font-size:9px;line-height:12px;color:#000;letter-spacing:-0.25px;white-space:nowrap;right:114px;text-align:right;">Std.Dev:</div>
<div style="left:1160px;top:452.81px;width:58.700000000000045px;height:13.600000000000023px;background:#fff;border:1px solid #c8c8c8;border-top-color:#8c8c8c;border-left-color:#a0a0a0;"></div>
<div style="top:453.91px;font-size:9px;line-height:12px;color:#000;letter-spacing:-0.3px;white-space:nowrap;right:51.5px;text-align:right;">1.63 nm</div>
<div style="top:469.68px;font-size:9px;line-height:12px;color:#000;letter-spacing:-0.25px;white-space:nowrap;right:114px;text-align:right;">Range:</div>
<div style="left:1160px;top:468.58px;width:58.700000000000045px;height:13.600000000000023px;background:#fff;border:1px solid #c8c8c8;border-top-color:#8c8c8c;border-left-color:#a0a0a0;"></div>
<div style="top:469.68px;font-size:9px;line-height:12px;color:#000;letter-spacing:-0.3px;white-space:nowrap;right:51.5px;text-align:right;">5.82 nm</div>
<div style="top:485.45px;font-size:9px;line-height:12px;color:#000;letter-spacing:-0.25px;white-space:nowrap;right:114px;text-align:right;">Uniformity:</div>
<div style="left:1160px;top:484.34999999999997px;width:58.700000000000045px;height:13.600000000000023px;background:#fff;border:1px solid #c8c8c8;border-top-color:#8c8c8c;border-left-color:#a0a0a0;"></div>
<div style="top:485.45px;font-size:9px;line-height:12px;color:#000;letter-spacing:-0.3px;white-space:nowrap;right:51.5px;text-align:right;">+/- 1.4 %</div>
<div style="top:501.22px;font-size:9px;line-height:12px;color:#000;letter-spacing:-0.25px;white-space:nowrap;right:114px;text-align:right;">CTE:</div>
<div style="left:1160px;top:500.12px;width:58.700000000000045px;height:13.600000000000023px;background:#fff;border:1px solid #c8c8c8;border-top-color:#8c8c8c;border-left-color:#a0a0a0;"></div>
<div style="top:501.22px;font-size:9px;line-height:12px;color:#000;letter-spacing:-0.3px;white-space:nowrap;right:51.5px;text-align:right;">-1.52 nm</div>
<div style="top:516.99px;font-size:9px;line-height:12px;color:#000;letter-spacing:-0.25px;white-space:nowrap;right:114px;text-align:right;">Wedge:</div>
<div style="left:1160px;top:515.8900000000001px;width:58.700000000000045px;height:13.599999999999909px;background:#fff;border:1px solid #c8c8c8;border-top-color:#8c8c8c;border-left-color:#a0a0a0;"></div>
<div style="top:516.99px;font-size:9px;line-height:12px;color:#000;letter-spacing:-0.3px;white-space:nowrap;right:51.5px;text-align:right;">5.29 nm</div>
<div style="left:1160px;top:531.6600000000001px;width:58.700000000000045px;height:13.599999999999909px;background:#fff;border:1px solid #c8c8c8;border-top-color:#8c8c8c;border-left-color:#a0a0a0;"></div>
<div style="top:532.76px;font-size:9px;line-height:12px;color:#000;letter-spacing:-0.3px;white-space:nowrap;right:51.5px;text-align:right;"></div>
<div style="left:1062px;top:532.6px;width:199px;height:2.4px;background:#f0f0f0;"></div>
<div style="left:23px;top:532px;width:1046px;height:2px;background:#d4d4d4;"></div>
<div style="left:1062px;top:536.5px;width:198px;height:30px;background:#f0f0f0;"></div>
<div style="left:8px;top:535px;width:1253px;height:2px;background:linear-gradient(#b4b4b4,#a2a2a2 50%,#d8d8d8);"></div>
<div style="left:1251px;top:86px;width:10px;height:447px;background:#f2f2f2;"></div>
<div style="left:1260px;top:82px;width:1px;height:4.5px;background:#8c8c8c;"></div>
<div style="left:1251.2px;top:97.4px;width:10.1px;height:383.4px;background:#cdcdcd;"></div>
<svg style="left:1252.7px;top:89.6px" width="7" height="5" viewBox="0 0 7 5"><path d="M0.8 4 L3.5 1.2 L6.2 4" stroke="#505050" stroke-width="1.1" fill="none"/></svg>
<svg style="left:1252.5px;top:525.5px" width="7" height="5" viewBox="0 0 7 5"><path d="M0.8 1 L3.5 3.8 L6.2 1" stroke="#505050" stroke-width="1.1" fill="none"/></svg>
<div style="top:541.40px;font-size:9px;line-height:12px;color:#000;letter-spacing:-0.15px;white-space:nowrap;left:1081.2px;">Meas. Location:</div>
<div style="top:556.70px;font-size:9px;line-height:12px;color:#000;letter-spacing:-0.25px;white-space:nowrap;left:1080px;">X</div>
<div style="left:1092px;top:555.5px;width:36px;height:14.0px;background:#f0f0f0;border:1px solid #c6c6c6;box-shadow:inset 1px 1px 0 #bcbcbc;"></div>
<div style="top:556.80px;font-size:9px;line-height:12px;color:#1a1a1a;letter-spacing:-0.3px;white-space:nowrap;left:1094.0px;">0.000</div>
<div style="top:556.70px;font-size:9px;line-height:12px;color:#000;letter-spacing:-0.25px;white-space:nowrap;left:1138.6px;">Y</div>
<div style="left:1152px;top:555.5px;width:35.799999999999955px;height:14.0px;background:#f0f0f0;border:1px solid #c6c6c6;box-shadow:inset 1px 1px 0 #bcbcbc;"></div>
<div style="top:556.80px;font-size:9px;line-height:12px;color:#1a1a1a;letter-spacing:-0.3px;white-space:nowrap;left:1154.0px;">0.000</div>
<div style="top:574.40px;font-size:9px;line-height:12px;color:#000;letter-spacing:-0.15px;white-space:nowrap;left:1081.2px;">Results:</div>
<div style="left:1075.6px;top:589px;width:156.4px;height:103px;background:#fff;border:1px solid #fff;border-top-color:#7a7a7a;border-left-color:#7a7a7a;"></div>
<div style="top:591.30px;font-size:8.9px;line-height:10px;color:#000;letter-spacing:-0.2px;white-space:nowrap;left:1077.6px;">SiO2 = <b>206.71 nm</b></div>
<div style="top:601.70px;font-size:8.9px;line-height:10px;color:#000;letter-spacing:-0.2px;white-space:nowrap;left:1077.6px;">Si = <b>212.80 nm</b></div>
<div style="top:612.10px;font-size:8.9px;line-height:10px;color:#000;letter-spacing:-0.2px;white-space:nowrap;left:1077.6px;">SiO2 = <b>2012.0 nm</b></div>
<div style="top:622.50px;font-size:8.9px;line-height:10px;color:#000;letter-spacing:-0.2px;white-space:nowrap;left:1077.6px;">Goodness of fit = 0.96308</div>
<svg style="left:0;top:0" width="1269" height="771" viewBox="0 0 1269 771"><defs><clipPath id="cclip"><rect x="73.5" y="551.8" width="981.0" height="185.5"/></clipPath></defs><rect x="74" y="551" width="981.5" height="186" fill="#fff"/><path d="M73.5 718.75 H1054.5 M73.5 700.20 H1054.5 M73.5 681.65 H1054.5 M73.5 663.10 H1054.5 M73.5 644.55 H1054.5 M73.5 626.00 H1054.5 M73.5 607.45 H1054.5 M73.5 588.90 H1054.5 M73.5 570.35 H1054.5" stroke="#9a9a9a" stroke-width="1" fill="none"/><path d="M196.12 551.8 V737.3 M318.75 551.8 V737.3 M441.38 551.8 V737.3 M564.00 551.8 V737.3 M686.62 551.8 V737.3 M809.25 551.8 V737.3 M931.88 551.8 V737.3" stroke="#6a6a6a" stroke-width="1" fill="none"/><g clip-path="url(#cclip)"><path d="M74.5 618.8 L74.5 572.8 L78.3 572.8 L78.6 618.2 L78.8 590.9 L79.1 614.3 L79.3 591.6 L79.9 616.9 L80.6 636.3 L81.7 616.9 L83.0 609.7 L84.0 610.6 L85.0 620.7 L86.2 627.2 L87.2 623.3 L88.1 620.7 L89.2 618.8 L90.1 615.3 L90.9 618.8 L91.4 622.0 L92.0 618.2 L92.4 625.9 L92.8 618.4 L93.2 625.7 L93.6 619.2 L94.1 628.5 L95.3 627.2 L96.6 628.8 L97.9 627.7 L99.8 630.1 L101.8 627.2 L103.4 627.0 L104.7 630.1 L106.3 633.7 L108.2 632.7 L110.2 633.7 L112.8 636.3 L116.7 640.2 L119.9 642.1 L121.9 643.4 L125.7 645.4 L130.9 648.0 L136.1 650.3 L140.0 652.5 L145.5 655.7 L150.0 657.7 L153.0 661.2 L155.5 664.2 L158.1 668.3 L160.6 672.5 L163.1 676.8 L165.6 681.3 L168.1 685.9 L170.6 690.1 L173.1 695.2 L175.7 698.9 L178.2 700.5 L180.7 702.0 L183.2 706.0 L185.7 710.3 L188.2 712.8 L190.8 714.5 L193.3 719.6 L195.5 723.8 L195.8 724.7 L196.4 724.5 L197.0 723.8 L197.6 722.8 L198.2 721.3 L198.8 719.6 L199.4 717.7 L200.0 715.6 L200.7 713.3 L201.3 711.1 L201.9 708.9 L202.5 706.8 L203.1 704.8 L203.7 703.0 L204.3 701.4 L205.0 700.0 L205.6 698.9 L206.2 698.0 L206.8 697.4 L207.4 697.1 L208.0 697.1 L208.6 697.4 L209.2 697.9 L209.9 698.8 L210.5 700.0 L211.1 701.5 L211.7 703.2 L212.3 705.1 L212.9 707.2 L213.5 709.5 L214.2 711.9 L214.8 714.3 L215.4 716.8 L216.0 719.1 L216.6 721.2 L217.2 723.1 L217.8 724.6 L218.4 725.8 L219.1 726.5 L219.7 726.7 L220.3 726.5 L220.9 725.7 L221.5 724.7 L222.1 723.4 L222.7 722.1 L223.3 721.0 L224.0 720.1 L224.6 719.5 L225.2 719.1 L225.8 719.2 L226.4 719.6 L227.0 720.3 L227.6 721.4 L228.3 722.7 L228.9 724.2 L229.5 725.9 L230.1 727.7 L230.7 729.4 L231.3 730.9 L231.9 732.1 L232.5 732.8 L233.2 733.0 L233.8 732.6 L234.4 731.6 L235.0 730.0 L235.6 727.9 L236.2 725.3 L236.8 722.2 L237.4 718.7 L238.1 715.0 L238.7 711.0 L239.3 706.8 L239.9 702.5 L240.5 698.3 L241.1 694.0 L241.7 689.9 L242.4 685.8 L243.0 682.0 L243.6 678.4 L244.2 675.1 L244.8 672.0 L245.4 669.2 L246.0 666.8 L246.6 664.6 L247.3 662.8 L247.9 661.3 L248.5 660.1 L249.1 659.2 L249.7 658.7 L250.3 658.5 L250.9 658.6 L251.6 659.2 L252.2 660.3 L252.8 661.8 L253.4 663.8 L254.0 666.2 L254.6 669.0 L255.2 672.1 L255.8 675.6 L256.5 679.3 L257.1 683.2 L257.7 687.0 L258.3 690.7 L258.9 693.9 L259.5 696.6 L260.1 698.4 L260.7 699.4 L261.4 699.3 L262.0 698.2 L262.6 696.2 L263.2 693.4 L263.8 690.0 L264.4 686.2 L265.0 682.1 L265.7 677.9 L266.3 673.8 L266.9 669.9 L267.5 666.3 L268.1 663.0 L268.7 660.1 L269.3 657.6 L269.9 655.5 L270.6 653.8 L271.2 652.6 L271.8 651.7 L272.4 651.3 L273.0 651.3 L273.6 651.5 L274.2 652.1 L274.9 653.0 L275.5 654.2 L276.1 655.7 L276.7 657.5 L277.3 659.6 L277.9 662.0 L278.5 664.7 L279.1 667.7 L279.8 671.0 L280.4 674.6 L281.0 678.4 L281.6 682.5 L282.2 686.8 L282.8 691.4 L283.4 696.0 L284.0 700.7 L284.7 705.4 L285.3 710.0 L285.9 714.5 L286.5 718.6 L287.1 722.2 L287.7 725.3 L288.3 727.7 L289.0 729.4 L289.6 730.2 L290.2 730.1 L290.8 728.9 L291.4 726.7 L292.0 723.7 L292.6 720.0 L293.2 715.9 L293.9 711.5 L294.5 707.1 L295.1 702.8 L295.7 698.7 L296.3 695.0 L296.9 691.5 L297.5 688.5 L298.1 685.8 L298.8 683.5 L299.4 681.6 L300.0 680.1 L300.6 678.9 L301.2 678.0 L301.8 677.5 L302.4 677.4 L303.1 677.6 L303.7 678.1 L304.3 678.9 L304.9 680.2 L305.5 681.7 L306.1 683.7 L306.7 686.1 L307.3 688.8 L308.0 692.0 L308.6 695.4 L309.2 699.0 L309.8 702.7 L310.4 706.2 L311.0 709.2 L311.6 711.4 L312.3 712.5 L312.9 712.5 L313.5 711.7 L314.1 710.3 L314.7 708.2 L315.3 705.5 L315.9 702.3 L316.5 698.6 L317.2 694.5 L317.8 690.1 L318.4 685.4 L319.0 680.5 L319.6 675.5 L320.2 670.5 L320.8 665.4 L321.4 660.5 L322.1 655.6 L322.7 650.9 L323.3 646.4 L323.9 642.1 L324.5 637.9 L325.1 634.0 L325.7 630.3 L326.4 626.8 L327.0 623.6 L327.6 620.6 L328.2 617.8 L328.8 615.3 L329.4 612.9 L330.0 610.8 L330.6 608.9 L331.3 607.2 L331.9 605.7 L332.5 604.4 L333.1 603.2 L333.7 602.3 L334.3 601.5 L334.9 600.9 L335.5 600.4 L336.2 600.1 L336.8 600.0 L337.4 600.1 L338.0 600.3 L338.6 600.6 L339.2 601.2 L339.8 601.8 L340.5 602.7 L341.1 603.6 L341.7 604.8 L342.3 606.1 L342.9 607.7 L343.5 609.3 L344.1 611.2 L344.7 613.3 L345.4 615.6 L346.0 618.1 L346.6 620.8 L347.2 623.7 L347.8 626.8 L348.4 630.1 L349.0 633.7 L349.7 637.4 L350.3 641.4 L350.9 645.5 L351.5 649.7 L352.1 654.0 L352.7 658.3 L353.3 662.5 L353.9 666.7 L354.6 670.5 L355.2 674.1 L355.8 677.1 L356.4 679.7 L357.0 681.6 L357.6 682.7 L358.2 683.1 L358.8 682.7 L359.5 681.4 L360.1 679.2 L360.7 676.4 L361.3 673.1 L361.9 669.3 L362.5 665.3 L363.1 661.2 L363.8 657.0 L364.4 653.0 L365.0 649.1 L365.6 645.5 L366.2 642.0 L366.8 638.9 L367.4 636.0 L368.0 633.4 L368.7 631.0 L369.3 628.9 L369.9 627.0 L370.5 625.3 L371.1 623.9 L371.7 622.7 L372.3 621.6 L373.0 620.8 L373.6 620.1 L374.2 619.6 L374.8 619.2 L375.4 619.0 L376.0 619.0 L376.6 619.0 L377.2 619.3 L377.9 619.6 L378.5 620.1 L379.1 620.7 L379.7 621.5 L380.3 622.3 L380.9 623.4 L381.5 624.5 L382.1 625.9 L382.8 627.3 L383.4 629.0 L384.0 630.8 L384.6 632.7 L385.2 634.9 L385.8 637.3 L386.4 639.8 L387.1 642.5 L387.7 645.5 L388.3 648.7 L388.9 652.1 L389.5 655.7 L390.1 659.6 L390.7 663.7 L391.3 668.0 L392.0 672.5 L392.6 677.2 L393.2 682.1 L393.8 687.1 L394.4 692.2 L395.0 697.3 L395.6 702.4 L396.2 707.3 L396.9 712.0 L397.5 716.4 L398.1 720.3 L398.7 723.6 L399.3 726.3 L399.9 728.3 L400.5 729.4 L401.2 729.7 L401.8 729.0 L402.4 727.3 L403.0 724.7 L403.6 721.4 L404.2 717.6 L404.8 713.4 L405.4 709.0 L406.1 704.6 L406.7 700.3 L407.3 696.2 L407.9 692.2 L408.5 688.6 L409.1 685.2 L409.7 682.1 L410.4 679.3 L411.0 676.8 L411.6 674.6 L412.2 672.6 L412.8 670.8 L413.4 669.3 L414.0 667.9 L414.6 666.8 L415.3 665.8 L415.9 665.0 L416.5 664.3 L417.1 663.8 L417.7 663.4 L418.3 663.2 L418.9 663.1 L419.5 663.1 L420.2 663.3 L420.8 663.6 L421.4 664.0 L422.0 664.6 L422.6 665.3 L423.2 666.1 L423.8 667.1 L424.5 668.3 L425.1 669.6 L425.7 671.2 L426.3 672.9 L426.9 674.9 L427.5 677.1 L428.1 679.6 L428.7 682.3 L429.4 685.3 L430.0 688.6 L430.6 692.2 L431.2 696.0 L431.8 700.0 L432.4 704.1 L433.0 708.2 L433.6 712.0 L434.3 715.5 L434.9 718.4 L435.5 720.5 L436.1 721.7 L436.7 721.9 L437.3 721.3 L437.9 720.2 L438.6 718.5 L439.2 716.3 L439.8 713.7 L440.4 710.5 L441.0 707.0 L441.6 703.2 L442.2 699.1 L442.8 694.8 L443.5 690.3 L444.1 685.7 L444.7 681.1 L445.3 676.5 L445.9 671.9 L446.5 667.4 L447.1 662.9 L447.8 658.6 L448.4 654.4 L449.0 650.4 L449.6 646.4 L450.2 642.7 L450.8 639.1 L451.4 635.7 L452.0 632.5 L452.7 629.4 L453.3 626.5 L453.9 623.7 L454.5 621.1 L455.1 618.7 L455.7 616.3 L456.3 614.2 L456.9 612.1 L457.6 610.2 L458.2 608.4 L458.8 606.8 L459.4 605.2 L460.0 603.8 L460.6 602.4 L461.2 601.2 L461.9 600.0 L462.5 599.0 L463.1 598.0 L463.7 597.1 L464.3 596.3 L464.9 595.6 L465.5 594.9 L466.1 594.3 L466.8 593.8 L467.4 593.3 L468.0 592.9 L468.6 592.6 L469.2 592.3 L469.8 592.1 L470.4 592.0 L471.1 591.9 L471.7 591.9 L472.3 591.9 L472.9 592.0 L473.5 592.1 L474.1 592.3 L474.7 592.5 L475.3 592.7 L476.0 593.0 L476.6 593.4 L477.2 593.8 L477.8 594.3 L478.4 594.8 L479.0 595.3 L479.6 596.0 L480.2 596.7 L480.9 597.4 L481.5 598.2 L482.1 599.1 L482.7 600.0 L483.3 601.1 L483.9 602.2 L484.5 603.4 L485.2 604.6 L485.8 606.0 L486.4 607.4 L487.0 609.0 L487.6 610.7 L488.2 612.4 L488.8 614.3 L489.4 616.3 L490.1 618.4 L490.7 620.6 L491.3 622.9 L491.9 625.4 L492.5 628.0 L493.1 630.7 L493.7 633.5 L494.3 636.4 L495.0 639.4 L495.6 642.5 L496.2 645.6 L496.8 648.8 L497.4 651.9 L498.0 655.1 L498.6 658.1 L499.3 661.0 L499.9 663.8 L500.5 666.3 L501.1 668.6 L501.7 670.5 L502.3 672.1 L502.9 673.3 L503.5 674.1 L504.2 674.4 L504.8 674.3 L505.4 673.7 L506.0 672.8 L506.6 671.5 L507.2 669.8 L507.8 667.9 L508.5 665.6 L509.1 663.1 L509.7 660.5 L510.3 657.7 L510.9 654.8 L511.5 651.8 L512.1 648.8 L512.7 645.8 L513.4 642.9 L514.0 640.0 L514.6 637.1 L515.2 634.4 L515.8 631.7 L516.4 629.1 L517.0 626.7 L517.6 624.3 L518.3 622.1 L518.9 619.9 L519.5 617.9 L520.1 616.0 L520.7 614.2 L521.3 612.5 L521.9 610.9 L522.6 609.4 L523.2 607.9 L523.8 606.6 L524.4 605.4 L525.0 604.2 L525.6 603.1 L526.2 602.1 L526.8 601.1 L527.5 600.2 L528.1 599.4 L528.7 598.7 L529.3 598.0 L529.9 597.3 L530.5 596.7 L531.1 596.2 L531.7 595.7 L532.4 595.3 L533.0 594.9 L533.6 594.5 L534.2 594.3 L534.8 594.0 L535.4 593.8 L536.0 593.6 L536.7 593.5 L537.3 593.4 L537.9 593.4 L538.5 593.4 L539.1 593.4 L539.7 593.4 L540.3 593.5 L540.9 593.7 L541.6 593.8 L542.2 594.0 L542.8 594.2 L543.4 594.5 L544.0 594.8 L544.6 595.1 L545.2 595.4 L545.9 595.8 L546.5 596.3 L547.1 596.7 L547.7 597.2 L548.3 597.8 L548.9 598.3 L549.5 599.0 L550.1 599.6 L550.8 600.3 L551.4 601.0 L552.0 601.8 L552.6 602.7 L553.2 603.5 L553.8 604.5 L554.4 605.4 L555.0 606.5 L555.7 607.5 L556.3 608.7 L556.9 609.8 L557.5 611.1 L558.1 612.4 L558.7 613.8 L559.3 615.2 L560.0 616.7 L560.6 618.2 L561.2 619.9 L561.8 621.6 L562.4 623.3 L563.0 625.2 L563.6 627.1 L564.2 629.1 L564.9 631.2 L565.5 633.3 L566.1 635.6 L566.7 637.9 L567.3 640.3 L567.9 642.8 L568.5 645.4 L569.2 648.1 L569.8 650.8 L570.4 653.7 L571.0 656.6 L571.6 659.6 L572.2 662.7 L572.8 665.8 L573.4 669.0 L574.1 672.3 L574.7 675.6 L575.3 679.0 L575.9 682.3 L576.5 685.7 L577.1 689.2 L577.7 692.5 L578.3 695.9 L579.0 699.2 L579.6 702.5 L580.2 705.6 L580.8 708.7 L581.4 711.6 L582.0 714.3 L582.6 716.9 L583.3 719.3 L583.9 721.4 L584.5 723.3 L585.1 724.9 L585.7 726.3 L586.3 727.3 L586.9 728.1 L587.5 728.5 L588.2 728.6 L588.8 728.3 L589.4 727.7 L590.0 726.7 L590.6 725.4 L591.2 723.8 L591.8 721.9 L592.4 719.9 L593.1 717.7 L593.7 715.4 L594.3 713.0 L594.9 710.6 L595.5 708.2 L596.1 705.9 L596.7 703.5 L597.4 701.3 L598.0 699.1 L598.6 697.1 L599.2 695.1 L599.8 693.2 L600.4 691.4 L601.0 689.8 L601.6 688.2 L602.3 686.7 L602.9 685.3 L603.5 684.0 L604.1 682.8 L604.7 681.7 L605.3 680.7 L605.9 679.7 L606.6 678.8 L607.2 678.0 L607.8 677.2 L608.4 676.5 L609.0 675.9 L609.6 675.3 L610.2 674.8 L610.8 674.3 L611.5 673.8 L612.1 673.5 L612.7 673.1 L613.3 672.8 L613.9 672.5 L614.5 672.3 L615.1 672.2 L615.7 672.0 L616.4 671.9 L617.0 671.8 L617.6 671.8 L618.2 671.8 L618.8 671.9 L619.4 671.9 L620.0 672.0 L620.7 672.1 L621.3 672.2 L621.9 672.4 L622.5 672.5 L623.1 672.7 L623.7 672.9 L624.3 673.2 L624.9 673.5 L625.6 673.8 L626.2 674.1 L626.8 674.5 L627.4 674.9 L628.0 675.3 L628.6 675.8 L629.2 676.3 L629.8 676.8 L630.5 677.4 L631.1 678.1 L631.7 678.7 L632.3 679.5 L632.9 680.2 L633.5 681.1 L634.1 681.9 L634.8 682.9 L635.4 683.9 L636.0 684.9 L636.6 686.0 L637.2 687.2 L637.8 688.4 L638.4 689.7 L639.0 691.1 L639.7 692.5 L640.3 693.9 L640.9 695.5 L641.5 697.0 L642.1 698.6 L642.7 700.2 L643.3 701.8 L644.0 703.4 L644.6 705.0 L645.2 706.5 L645.8 708.0 L646.4 709.3 L647.0 710.5 L647.6 711.6 L648.2 712.5 L648.9 713.2 L649.5 713.6 L650.1 713.9 L650.7 713.9 L651.3 713.7 L651.9 713.4 L652.5 712.9 L653.1 712.1 L653.8 711.3 L654.4 710.3 L655.0 709.1 L655.6 707.8 L656.2 706.4 L656.8 704.9 L657.4 703.3 L658.1 701.7 L658.7 700.0 L659.3 698.3 L659.9 696.5 L660.5 694.7 L661.1 692.9 L661.7 691.2 L662.3 689.4 L663.0 687.7 L663.6 686.0 L664.2 684.3 L664.8 682.7 L665.4 681.1 L666.0 679.5 L666.6 678.0 L667.3 676.6 L667.9 675.2 L668.5 673.8 L669.1 672.5 L669.7 671.2 L670.3 670.0 L670.9 668.9 L671.5 667.8 L672.2 666.7 L672.8 665.7 L673.4 664.7 L674.0 663.8 L674.6 662.9 L675.2 662.1 L675.8 661.2 L676.4 660.5 L677.1 659.8 L677.7 659.1 L678.3 658.4 L678.9 657.8 L679.5 657.2 L680.1 656.6 L680.7 656.1 L681.4 655.6 L682.0 655.1 L682.6 654.7 L683.2 654.2 L683.8 653.8 L684.4 653.5 L685.0 653.1 L685.6 652.8 L686.3 652.5 L686.9 652.2 L687.5 652.0 L688.1 651.7 L688.7 651.5 L689.3 651.3 L689.9 651.2 L690.5 651.0 L691.2 650.9 L691.8 650.8 L692.4 650.7 L693.0 650.6 L693.6 650.5 L694.2 650.5 L694.8 650.5 L695.5 650.5 L696.1 650.5 L696.7 650.5 L697.3 650.6 L697.9 650.7 L698.5 650.8 L699.1 650.9 L699.7 651.0 L700.4 651.2 L701.0 651.4 L701.6 651.6 L702.2 651.8 L702.8 652.0 L703.4 652.3 L704.0 652.6 L704.7 652.9 L705.3 653.3 L705.9 653.6 L706.5 654.0 L707.1 654.4 L707.7 654.9 L708.3 655.3 L708.9 655.8 L709.6 656.3 L710.2 656.9 L710.8 657.5 L711.4 658.1 L712.0 658.8 L712.6 659.4 L713.2 660.2 L713.8 660.9 L714.5 661.7 L715.1 662.5 L715.7 663.4 L716.3 664.3 L716.9 665.3 L717.5 666.3 L718.1 667.3 L718.8 668.4 L719.4 669.6 L720.0 670.8 L720.6 672.0 L721.2 673.3 L721.8 674.6 L722.4 676.0 L723.0 677.5 L723.7 679.0 L724.3 680.5 L724.9 682.1 L725.5 683.8 L726.1 685.5 L726.7 687.3 L727.3 689.1 L727.9 691.0 L728.6 692.9 L729.2 694.8 L729.8 696.8 L730.4 698.8 L731.0 700.8 L731.6 702.8 L732.2 704.8 L732.9 706.8 L733.5 708.8 L734.1 710.8 L734.7 712.7 L735.3 714.6 L735.9 716.4 L736.5 718.1 L737.1 719.7 L737.8 721.2 L738.4 722.6 L739.0 723.8 L739.6 724.8 L740.2 725.7 L740.8 726.4 L741.4 726.9 L742.1 727.2 L742.7 727.3 L743.3 727.2 L743.9 727.0 L744.5 726.7 L745.1 726.2 L745.7 725.7 L746.3 725.0 L747.0 724.1 L747.6 723.2 L748.2 722.1 L748.8 721.0 L749.4 719.7 L750.0 718.4 L750.6 717.0 L751.2 715.4 L751.9 713.8 L752.5 712.2 L753.1 710.4 L753.7 708.7 L754.3 706.8 L754.9 704.9 L755.5 703.0 L756.2 701.1 L756.8 699.1 L757.4 697.1 L758.0 695.1 L758.6 693.1 L759.2 691.0 L759.8 689.0 L760.4 687.0 L761.1 684.9 L761.7 682.9 L762.3 680.9 L762.9 678.9 L763.5 677.0 L764.1 675.0 L764.7 673.1 L765.4 671.2 L766.0 669.3 L766.6 667.5 L767.2 665.7 L767.8 663.9 L768.4 662.1 L769.0 660.4 L769.6 658.7 L770.3 657.1 L770.9 655.5 L771.5 653.9 L772.1 652.3 L772.7 650.8 L773.3 649.4 L773.9 647.9 L774.5 646.5 L775.2 645.1 L775.8 643.8 L776.4 642.5 L777.0 641.2 L777.6 640.0 L778.2 638.8 L778.8 637.6 L779.5 636.5 L780.1 635.4 L780.7 634.3 L781.3 633.2 L781.9 632.2 L782.5 631.2 L783.1 630.2 L783.7 629.3 L784.4 628.4 L785.0 627.5 L785.6 626.7 L786.2 625.8 L786.8 625.0 L787.4 624.2 L788.0 623.5 L788.6 622.8 L789.3 622.0 L789.9 621.4 L790.5 620.7 L791.1 620.1 L791.7 619.4 L792.3 618.8 L792.9 618.3 L793.6 617.7 L794.2 617.2 L794.8 616.6 L795.4 616.1 L796.0 615.6 L796.6 615.2 L797.2 614.7 L797.8 614.3 L798.5 613.9 L799.1 613.5 L799.7 613.1 L800.3 612.7 L800.9 612.4 L801.5 612.1 L802.1 611.8 L802.8 611.5 L803.4 611.2 L804.0 610.9 L804.6 610.6 L805.2 610.4 L805.8 610.2 L806.4 610.0 L807.0 609.8 L807.7 609.6 L808.3 609.4 L808.9 609.2 L809.5 609.1 L810.1 609.0 L810.7 608.9 L811.3 608.7 L811.9 608.7 L812.6 608.6 L813.2 608.5 L813.8 608.5 L814.4 608.4 L815.0 608.4 L815.6 608.4 L816.2 608.4 L816.9 608.4 L817.5 608.4 L818.1 608.4 L818.7 608.5 L819.3 608.5 L819.9 608.6 L820.5 608.6 L821.1 608.7 L821.8 608.8 L822.4 608.9 L823.0 609.0 L823.6 609.1 L824.2 609.3 L824.8 609.4 L825.4 609.5 L826.0 609.7 L826.7 609.9 L827.3 610.1 L827.9 610.2 L828.5 610.4 L829.1 610.7 L829.7 610.9 L830.3 611.1 L831.0 611.4 L831.6 611.6 L832.2 611.9 L832.8 612.2 L833.4 612.5 L834.0 612.8 L834.6 613.1 L835.2 613.4 L835.9 613.8 L836.5 614.1 L837.1 614.5 L837.7 614.9 L838.3 615.3 L838.9 615.7 L839.5 616.1 L840.2 616.5 L840.8 617.0 L841.4 617.5 L842.0 617.9 L842.6 618.4 L843.2 618.9 L843.8 619.5 L844.4 620.0 L845.1 620.6 L845.7 621.2 L846.3 621.8 L846.9 622.4 L847.5 623.0 L848.1 623.6 L848.7 624.3 L849.3 625.0 L850.0 625.7 L850.6 626.4 L851.2 627.2 L851.8 627.9 L852.4 628.7 L853.0 629.5 L853.6 630.4 L854.3 631.2 L854.9 632.1 L855.5 633.0 L856.1 633.9 L856.7 634.8 L857.3 635.8 L857.9 636.8 L858.5 637.8 L859.2 638.8 L859.8 639.9 L860.4 641.0 L861.0 642.1 L861.6 643.2 L862.2 644.4 L862.8 645.6 L863.5 646.8 L864.1 648.0 L864.7 649.3 L865.3 650.6 L865.9 651.9 L866.5 653.2 L867.1 654.6 L867.7 656.0 L868.4 657.4 L869.0 658.9 L869.6 660.4 L870.2 661.9 L870.8 663.4 L871.4 664.9 L872.0 666.5 L872.6 668.1 L873.3 669.7 L873.9 671.3 L874.5 673.0 L875.1 674.7 L875.7 676.3 L876.3 678.0 L876.9 679.8 L877.6 681.5 L878.2 683.2 L878.8 684.9 L879.4 686.7 L880.0 688.4 L880.6 690.1 L881.2 691.9 L881.8 693.6 L882.5 695.3 L883.1 697.0 L883.7 698.6 L884.3 700.3 L884.9 701.9 L885.5 703.5 L886.1 705.0 L886.7 706.6 L887.4 708.0 L888.0 709.4 L888.6 710.8 L889.2 712.1 L889.8 713.4 L890.4 714.5 L891.0 715.6 L891.7 716.7 L892.3 717.6 L892.9 718.5 L893.5 719.3 L894.1 720.0 L894.7 720.6 L895.3 721.1 L895.9 721.6 L896.6 721.9 L897.2 722.1 L897.8 722.2 L898.4 722.3 L899.0 722.2 L899.6 722.1 L900.2 722.0 L900.9 721.7 L901.5 721.5 L902.1 721.1 L902.7 720.7 L903.3 720.2 L903.9 719.7 L904.5 719.2 L905.1 718.5 L905.8 717.9 L906.4 717.1 L907.0 716.4 L907.6 715.6 L908.2 714.7 L908.8 713.8 L909.4 712.9 L910.0 711.9 L910.7 710.9 L911.3 709.9 L911.9 708.8 L912.5 707.7 L913.1 706.6 L913.7 705.4 L914.3 704.3 L915.0 703.1 L915.6 701.9 L916.2 700.7 L916.8 699.5 L917.4 698.2 L918.0 697.0 L918.6 695.7 L919.2 694.5 L919.9 693.2 L920.5 692.0 L921.1 690.7 L921.7 689.4 L922.3 688.2 L922.9 686.9 L923.5 685.7 L924.1 684.4 L924.8 683.2 L925.4 682.0 L926.0 680.8 L926.6 679.6 L927.2 678.4 L927.8 677.2 L928.4 676.0 L929.1 674.8 L929.7 673.7 L930.3 672.6 L930.9 671.4 L931.5 670.3 L932.1 669.3 L932.7 668.2 L933.3 667.1 L934.0 666.1 L934.6 665.0 L935.2 664.0 L935.8 663.0 L936.4 662.1 L937.0 661.1 L937.6 660.2 L938.3 659.2 L938.9 658.3 L939.5 657.4 L940.1 656.5 L940.7 655.7 L941.3 654.8 L941.9 654.0 L942.5 653.2 L943.2 652.4 L943.8 651.6 L944.4 650.8 L945.0 650.0 L945.6 649.3 L946.2 648.6 L946.8 647.9 L947.4 647.2 L948.1 646.5 L948.7 645.8 L949.3 645.2 L949.9 644.5 L950.5 643.9 L951.1 643.3 L951.7 642.7 L952.4 642.1 L953.0 641.5 L953.6 641.0 L954.2 640.4 L954.8 639.9 L955.4 639.4 L956.0 638.8 L956.6 638.3 L957.3 637.9 L957.9 637.4 L958.5 636.9 L959.1 636.5 L959.7 636.0 L960.3 635.6 L960.9 635.2 L961.6 634.7 L962.2 634.3 L962.8 633.9 L963.4 633.6 L964.0 633.2 L964.6 632.8 L965.2 632.5 L965.8 632.1 L966.5 631.8 L967.1 631.5 L967.7 631.1 L968.3 630.8 L968.9 630.5 L969.5 630.2 L970.1 630.0 L970.7 629.7 L971.4 629.4 L972.0 629.2 L972.6 628.9 L973.2 628.7 L973.8 628.4 L974.4 628.2 L975.0 628.0 L975.7 627.8 L976.3 627.6 L976.9 627.4 L977.5 627.2 L978.1 627.0 L978.7 626.8 L979.3 626.7 L979.9 626.5 L980.6 626.3 L981.2 626.2 L981.8 626.0 L982.4 625.9 L983.0 625.8 L983.6 625.7 L984.2 625.5 L984.8 625.4 L985.5 625.3 L986.1 625.2 L986.7 625.1 L987.3 625.1 L987.9 625.0 L988.5 624.9 L989.1 624.8 L989.8 624.8 L990.4 624.7 L991.0 624.7 L991.6 624.6 L992.2 624.6 L992.8 624.6 L993.4 624.6 L994.0 624.5 L994.7 624.5 L995.3 624.5 L995.9 624.5 L996.5 624.5 L997.1 624.5 L997.7 624.5 L998.3 624.6 L999.0 624.6 L999.6 624.6 L1000.2 624.7 L1000.8 624.7 L1001.4 624.7 L1002.0 624.8 L1002.6 624.8 L1003.2 624.9 L1003.9 625.0 L1004.5 625.0 L1005.1 625.1 L1005.7 625.2 L1006.3 625.3 L1006.9 625.4 L1007.5 625.5 L1008.1 625.6 L1008.8 625.7 L1009.4 625.8 L1010.0 625.9 L1010.6 626.0 L1011.2 626.1 L1011.8 626.3 L1012.4 626.4 L1013.1 626.6 L1013.7 626.7 L1014.3 626.9 L1014.9 627.0 L1015.5 627.2 L1016.1 627.4 L1016.7 627.5 L1017.3 627.7 L1018.0 627.9 L1018.6 628.1 L1019.2 628.3 L1019.8 628.5 L1020.4 628.7 L1021.0 628.9 L1021.6 629.2 L1022.2 629.4 L1022.9 629.6 L1023.5 629.9 L1024.1 630.1 L1024.7 630.4 L1025.3 630.7 L1025.9 630.9 L1026.5 631.2 L1027.2 631.5 L1027.8 631.8 L1028.4 632.1 L1029.0 632.4 L1029.6 632.7 L1030.2 633.0 L1030.8 633.4 L1031.4 633.7 L1032.1 634.1 L1032.7 634.4 L1033.3 634.8 L1033.9 635.1 L1034.5 635.5 L1035.1 635.9 L1035.7 636.3 L1036.4 636.7 L1037.0 637.1 L1037.6 637.6 L1038.2 638.0 L1038.8 638.4 L1039.4 638.9 L1040.0 639.4 L1040.6 639.8 L1041.3 640.3 L1041.9 640.8 L1042.5 641.3 L1043.1 641.8 L1043.7 642.3 L1044.3 642.9 L1044.9 643.4 L1045.5 644.0 L1046.2 644.5 L1046.8 645.1 L1047.4 645.7 L1048.0 646.3 L1048.6 646.9 L1049.2 647.5 L1049.8 648.2 L1050.5 648.8 L1051.1 649.5 L1051.7 650.1 L1052.3 650.8 L1052.9 651.5 L1053.5 652.2 L1054.1 652.9" stroke="#1a1aff" stroke-width="0.9" fill="none" stroke-linejoin="round"/><path d="M197.4 708.6 L198.0 707.9 L198.6 706.9 L199.2 705.6 L199.8 704.1 L200.4 702.4 L201.0 700.6 L201.6 698.8 L202.3 697.0 L202.9 695.3 L203.5 693.6 L204.1 692.1 L204.7 690.8 L205.3 689.6 L205.9 688.7 L206.5 687.9 L207.2 687.4 L207.8 687.1 L208.4 687.0 L209.0 687.3 L209.6 687.8 L210.2 688.6 L210.8 689.8 L211.5 691.2 L212.1 692.9 L212.7 694.9 L213.3 697.0 L213.9 699.2 L214.5 701.6 L215.1 704.0 L215.7 706.3 L216.4 708.6 L217.0 710.6 L217.6 712.3 L218.2 713.6 L218.8 714.6 L219.4 715.0 L220.0 714.8 L220.7 713.7 L221.3 711.7 L221.9 709.3 L222.5 707.0 L223.1 705.0 L223.7 703.5 L224.3 702.7 L224.9 702.6 L225.6 703.1 L226.2 704.0 L226.8 705.3 L227.4 707.0 L228.0 709.1 L228.6 711.4 L229.2 714.0 L229.8 716.7 L230.5 719.4 L231.1 721.9 L231.7 724.1 L232.3 725.8 L232.9 726.9 L233.5 727.3 L234.1 727.0 L234.8 726.1 L235.4 724.7 L236.0 722.7 L236.6 720.3 L237.2 717.4 L237.8 714.2 L238.4 710.6 L239.0 706.8 L239.7 702.9 L240.3 698.8 L240.9 694.8 L241.5 690.7 L242.1 686.8 L242.7 683.0 L243.3 679.4 L243.9 676.1 L244.6 672.9 L245.2 670.1 L245.8 667.5 L246.4 665.3 L247.0 663.3 L247.6 661.7 L248.2 660.3 L248.9 659.3 L249.5 658.6 L250.1 658.2 L250.7 658.1 L251.3 658.4 L251.9 659.3 L252.5 660.6 L253.1 662.4 L253.8 664.6 L254.4 667.3 L255.0 670.4 L255.6 673.8 L256.2 677.5 L256.8 681.4 L257.4 685.4 L258.1 689.2 L258.7 692.7 L259.3 695.6 L259.9 697.7 L260.5 698.9 L261.1 699.0 L261.7 697.9 L262.3 695.7 L263.0 692.5 L263.6 688.7 L264.2 684.5 L264.8 680.2 L265.4 676.0 L266.0 672.0 L266.6 668.4 L267.2 665.3 L267.9 662.7 L268.5 660.6 L269.1 659.0 L269.7 658.0 L270.3 657.4 L270.9 657.4 L271.5 657.6 L272.2 658.1 L272.8 658.9 L273.4 660.0 L274.0 661.3 L274.6 662.9 L275.2 664.8 L275.8 667.0 L276.4 669.4 L277.1 672.1 L277.7 675.0 L278.3 678.2 L278.9 681.6 L279.5 685.3 L280.1 689.2 L280.7 693.3 L281.3 697.5 L282.0 701.9 L282.6 706.2 L283.2 710.6 L283.8 714.9 L284.4 719.0 L285.0 722.9 L285.6 726.3 L286.3 729.3 L286.9 731.7 L287.5 733.4 L288.1 734.5 L288.7 734.7 L289.3 733.9 L289.9 731.9 L290.5 729.0 L291.2 725.2 L291.8 720.7 L292.4 715.8 L293.0 710.6 L293.6 705.4 L294.2 700.3 L294.8 695.4 L295.5 690.8 L296.1 686.5 L296.7 682.7 L297.3 679.2 L297.9 676.2 L298.5 673.6 L299.1 671.4 L299.7 669.6 L300.4 668.1 L301.0 667.1 L301.6 666.4 L302.2 666.1 L302.8 666.1 L303.4 666.6 L304.0 667.5 L304.6 668.9 L305.3 670.8 L305.9 673.1 L306.5 675.9 L307.1 679.2 L307.7 683.0 L308.3 687.2 L308.9 691.8 L309.6 696.5 L310.2 701.1 L310.8 705.2 L311.4 708.4 L312.0 710.4 L312.6 710.9 L313.2 710.4 L313.8 709.2 L314.5 707.3 L315.1 704.8 L315.7 701.7 L316.3 698.0 L316.9 693.9 L317.5 689.5 L318.1 684.8 L318.8 679.9 L319.4 674.8 L320.0 669.8 L320.6 664.7 L321.2 659.7 L321.8 654.8 L322.4 650.1 L323.0 645.5 L323.7 641.1 L324.3 637.0 L324.9 633.1 L325.5 629.4 L326.1 625.9 L326.7 622.8 L327.3 619.8 L327.9 617.1 L328.6 614.6 L329.2 612.3 L329.8 610.3 L330.4 608.4 L331.0 606.8 L331.6 605.4 L332.2 604.1 L332.9 603.1 L333.5 602.2 L334.1 601.6 L334.7 601.1 L335.3 600.8 L335.9 600.6 L336.5 600.6 L337.1 600.8 L337.8 601.1 L338.4 601.5 L339.0 602.2 L339.6 602.9 L340.2 603.8 L340.8 604.9 L341.4 606.1 L342.0 607.5 L342.7 609.1 L343.3 610.8 L343.9 612.8 L344.5 614.9 L345.1 617.2 L345.7 619.7 L346.3 622.4 L347.0 625.3 L347.6 628.4 L348.2 631.7 L348.8 635.2 L349.4 638.9 L350.0 642.8 L350.6 646.8 L351.2 651.0 L351.9 655.2 L352.5 659.4 L353.1 663.6 L353.7 667.6 L354.3 671.5 L354.9 675.0 L355.5 678.2 L356.2 680.8 L356.8 682.9 L357.4 684.3 L358.0 684.9 L358.6 684.8 L359.2 683.8 L359.8 681.8 L360.4 679.1 L361.1 675.7 L361.7 671.9 L362.3 667.7 L362.9 663.4 L363.5 659.1 L364.1 654.9 L364.7 650.8 L365.3 646.9 L366.0 643.3 L366.6 640.0 L367.2 637.0 L367.8 634.2 L368.4 631.8 L369.0 629.6 L369.6 627.6 L370.3 625.9 L370.9 624.5 L371.5 623.2 L372.1 622.2 L372.7 621.3 L373.3 620.7 L373.9 620.2 L374.5 619.9 L375.2 619.7 L375.8 619.7 L376.4 619.9 L377.0 620.2 L377.6 620.6 L378.2 621.1 L378.8 621.8 L379.4 622.7 L380.1 623.7 L380.7 624.8 L381.3 626.1 L381.9 627.6 L382.5 629.2 L383.1 631.0 L383.7 632.9 L384.4 635.1 L385.0 637.4 L385.6 640.0 L386.2 642.7 L386.8 645.7 L387.4 648.9 L388.0 652.4 L388.6 656.0 L389.3 660.0 L389.9 664.1 L390.5 668.5 L391.1 673.1 L391.7 678.0 L392.3 683.0 L392.9 688.2 L393.6 693.5 L394.2 698.8 L394.8 704.2 L395.4 709.4 L396.0 714.5 L396.6 719.3 L397.2 723.7 L397.8 727.6 L398.5 730.9 L399.1 733.4 L399.7 735.1 L400.3 735.9 L400.9 735.8 L401.5 734.5 L402.1 732.1 L402.7 728.7 L403.4 724.6 L404.0 720.0 L404.6 715.0 L405.2 709.9 L405.8 704.8 L406.4 699.9 L407.0 695.1 L407.7 690.7 L408.3 686.5 L408.9 682.8 L409.5 679.3 L410.1 676.2 L410.7 673.4 L411.3 670.9 L411.9 668.7 L412.6 666.7 L413.2 665.0 L413.8 663.5 L414.4 662.2 L415.0 661.2 L415.6 660.3 L416.2 659.6 L416.9 659.1 L417.5 658.7 L418.1 658.5 L418.7 658.5 L419.3 658.6 L419.9 658.8 L420.5 659.2 L421.1 659.7 L421.8 660.3 L422.4 661.1 L423.0 662.1 L423.6 663.2 L424.2 664.5 L424.8 666.0 L425.4 667.7 L426.0 669.7 L426.7 671.8 L427.3 674.3 L427.9 677.0 L428.5 680.0 L429.1 683.3 L429.7 686.9 L430.3 690.7 L431.0 694.9 L431.6 699.2 L432.2 703.7 L432.8 708.2 L433.4 712.5 L434.0 716.4 L434.6 719.8 L435.2 722.5 L435.9 724.1 L436.5 724.7 L437.1 724.4 L437.7 723.5 L438.3 722.0 L438.9 720.0 L439.5 717.5 L440.1 714.5 L440.8 711.1 L441.4 707.3 L442.0 703.2 L442.6 698.9 L443.2 694.4 L443.8 689.8 L444.4 685.1 L445.1 680.4 L445.7 675.6 L446.3 671.0 L446.9 666.3 L447.5 661.8 L448.1 657.4 L448.7 653.2 L449.3 649.1 L450.0 645.1 L450.6 641.4 L451.2 637.7 L451.8 634.3 L452.4 631.0 L453.0 627.9 L453.6 624.9 L454.3 622.2 L454.9 619.5 L455.5 617.0 L456.1 614.7 L456.7 612.5 L457.3 610.4 L457.9 608.5 L458.5 606.7 L459.2 605.0 L459.8 603.4 L460.4 601.9 L461.0 600.5 L461.6 599.3 L462.2 598.1 L462.8 597.0 L463.4 596.0 L464.1 595.1 L464.7 594.3 L465.3 593.5 L465.9 592.8 L466.5 592.2 L467.1 591.7 L467.7 591.2 L468.4 590.8 L469.0 590.4 L469.6 590.1 L470.2 589.9 L470.8 589.8 L471.4 589.7 L472.0 589.6 L472.6 589.7 L473.3 589.7 L473.9 589.9 L474.5 590.0 L475.1 590.2 L475.7 590.5 L476.3 590.8 L476.9 591.2 L477.5 591.6 L478.2 592.1 L478.8 592.6 L479.4 593.2 L480.0 593.9 L480.6 594.6 L481.2 595.3 L481.8 596.2 L482.5 597.1 L483.1 598.1 L483.7 599.2 L484.3 600.3 L484.9 601.6 L485.5 602.9 L486.1 604.4 L486.7 605.9 L487.4 607.5 L488.0 609.3 L488.6 611.1 L489.2 613.1 L489.8 615.2 L490.4 617.4 L491.0 619.8 L491.7 622.3 L492.3 624.9 L492.9 627.6 L493.5 630.5 L494.1 633.4 L494.7 636.5 L495.3 639.7 L495.9 642.9 L496.6 646.2 L497.2 649.5 L497.8 652.7 L498.4 656.0 L499.0 659.1 L499.6 662.1 L500.2 664.8 L500.8 667.3 L501.5 669.5 L502.1 671.4 L502.7 672.8 L503.3 673.8 L503.9 674.3 L504.5 674.4 L505.1 674.0 L505.8 673.3 L506.4 672.1 L507.0 670.6 L507.6 668.8 L508.2 666.7 L508.8 664.4 L509.4 661.8 L510.0 659.1 L510.7 656.3 L511.3 653.3 L511.9 650.4 L512.5 647.4 L513.1 644.4 L513.7 641.4 L514.3 638.5 L515.0 635.6 L515.6 632.8 L516.2 630.1 L516.8 627.6 L517.4 625.1 L518.0 622.7 L518.6 620.4 L519.2 618.2 L519.9 616.2 L520.5 614.2 L521.1 612.4 L521.7 610.6 L522.3 609.0 L522.9 607.4 L523.5 605.9 L524.1 604.5 L524.8 603.2 L525.4 602.0 L526.0 600.9 L526.6 599.8 L527.2 598.8 L527.8 597.9 L528.4 597.0 L529.1 596.2 L529.7 595.4 L530.3 594.7 L530.9 594.1 L531.5 593.5 L532.1 593.0 L532.7 592.5 L533.3 592.0 L534.0 591.6 L534.6 591.3 L535.2 591.0 L535.8 590.7 L536.4 590.5 L537.0 590.3 L537.6 590.2 L538.2 590.1 L538.9 590.0 L539.5 590.0 L540.1 590.0 L540.7 590.1 L541.3 590.2 L541.9 590.3 L542.5 590.4 L543.2 590.6 L543.8 590.9 L544.4 591.1 L545.0 591.4 L545.6 591.7 L546.2 592.1 L546.8 592.5 L547.4 593.0 L548.1 593.4 L548.7 594.0 L549.3 594.5 L549.9 595.1 L550.5 595.8 L551.1 596.5 L551.7 597.2 L552.4 598.0 L553.0 598.8 L553.6 599.7 L554.2 600.6 L554.8 601.6 L555.4 602.7 L556.0 603.7 L556.6 604.9 L557.3 606.1 L557.9 607.4 L558.5 608.7 L559.1 610.1 L559.7 611.5 L560.3 613.1 L560.9 614.7 L561.5 616.3 L562.2 618.1 L562.8 619.9 L563.4 621.8 L564.0 623.8 L564.6 625.9 L565.2 628.0 L565.8 630.3 L566.5 632.6 L567.1 635.0 L567.7 637.5 L568.3 640.2 L568.9 642.8 L569.5 645.6 L570.1 648.5 L570.7 651.5 L571.4 654.6 L572.0 657.7 L572.6 660.9 L573.2 664.2 L573.8 667.6 L574.4 671.0 L575.0 674.5 L575.6 678.0 L576.3 681.6 L576.9 685.2 L577.5 688.8 L578.1 692.3 L578.7 695.8 L579.3 699.3 L579.9 702.7 L580.6 706.0 L581.2 709.1 L581.8 712.1 L582.4 715.0 L583.0 717.6 L583.6 720.0 L584.2 722.1 L584.8 724.0 L585.5 725.6 L586.1 726.8 L586.7 727.7 L587.3 728.3 L587.9 728.6 L588.5 728.4 L589.1 727.9 L589.8 726.9 L590.4 725.6 L591.0 723.9 L591.6 722.0 L592.2 719.7 L592.8 717.3 L593.4 714.7 L594.0 712.0 L594.7 709.3 L595.3 706.5 L595.9 703.7 L596.5 701.0 L597.1 698.3 L597.7 695.7 L598.3 693.2 L598.9 690.7 L599.6 688.4 L600.2 686.2 L600.8 684.1 L601.4 682.2 L602.0 680.3 L602.6 678.6 L603.2 676.9 L603.9 675.4 L604.5 673.9 L605.1 672.6 L605.7 671.3 L606.3 670.2 L606.9 669.1 L607.5 668.1 L608.1 667.1 L608.8 666.3 L609.4 665.5 L610.0 664.7 L610.6 664.1 L611.2 663.4 L611.8 662.9 L612.4 662.4 L613.0 661.9 L613.7 661.5 L614.3 661.2 L614.9 660.9 L615.5 660.6 L616.1 660.4 L616.7 660.2 L617.3 660.1 L618.0 660.0 L618.6 660.0 L619.2 659.9 L619.8 660.0 L620.4 660.0 L621.0 660.1 L621.6 660.2 L622.2 660.3 L622.9 660.4 L623.5 660.6 L624.1 660.8 L624.7 661.0 L625.3 661.3 L625.9 661.5 L626.5 661.8 L627.2 662.2 L627.8 662.5 L628.4 662.9 L629.0 663.3 L629.6 663.8 L630.2 664.3 L630.8 664.8 L631.4 665.4 L632.1 666.0 L632.7 666.6 L633.3 667.3 L633.9 668.1 L634.5 668.8 L635.1 669.7 L635.7 670.5 L636.3 671.5 L637.0 672.5 L637.6 673.5 L638.2 674.6 L638.8 675.8 L639.4 677.0 L640.0 678.3 L640.6 679.6 L641.3 681.0 L641.9 682.5 L642.5 684.0 L643.1 685.6 L643.7 687.3 L644.3 689.0 L644.9 690.8 L645.5 692.6 L646.2 694.4 L646.8 696.3 L647.4 698.2 L648.0 700.1 L648.6 702.0 L649.2 703.8 L649.8 705.6 L650.5 707.3 L651.1 709.0 L651.7 710.5 L652.3 711.9 L652.9 713.1 L653.5 714.1 L654.1 714.9 L654.7 715.5 L655.4 715.8 L656.0 716.0 L656.6 715.9 L657.2 715.6 L657.8 715.1 L658.4 714.4 L659.0 713.6 L659.6 712.6 L660.3 711.4 L660.9 710.2 L661.5 708.8 L662.1 707.3 L662.7 705.7 L663.3 704.0 L663.9 702.3 L664.6 700.5 L665.2 698.8 L665.8 697.0 L666.4 695.2 L667.0 693.4 L667.6 691.6 L668.2 689.8 L668.8 688.1 L669.5 686.4 L670.1 684.8 L670.7 683.2 L671.3 681.6 L671.9 680.1 L672.5 678.7 L673.1 677.2 L673.7 675.9 L674.4 674.6 L675.0 673.3 L675.6 672.1 L676.2 671.0 L676.8 669.9 L677.4 668.8 L678.0 667.8 L678.7 666.9 L679.3 666.0 L679.9 665.1 L680.5 664.3 L681.1 663.5 L681.7 662.7 L682.3 662.0 L682.9 661.4 L683.6 660.7 L684.2 660.1 L684.8 659.5 L685.4 659.0 L686.0 658.5 L686.6 658.0 L687.2 657.6 L687.9 657.1 L688.5 656.7 L689.1 656.4 L689.7 656.0 L690.3 655.7 L690.9 655.4 L691.5 655.1 L692.1 654.9 L692.8 654.6 L693.4 654.4 L694.0 654.2 L694.6 654.1 L695.2 653.9 L695.8 653.8 L696.4 653.7 L697.0 653.6 L697.7 653.5 L698.3 653.5 L698.9 653.5 L699.5 653.5 L700.1 653.5 L700.7 653.5 L701.3 653.6 L702.0 653.6 L702.6 653.7 L703.2 653.9 L703.8 654.0 L704.4 654.2 L705.0 654.4 L705.6 654.6 L706.2 654.8 L706.9 655.1 L707.5 655.4 L708.1 655.7 L708.7 656.0 L709.3 656.4 L709.9 656.8 L710.5 657.2 L711.1 657.7 L711.8 658.1 L712.4 658.6 L713.0 659.2 L713.6 659.8 L714.2 660.4 L714.8 661.0 L715.4 661.7 L716.1 662.4 L716.7 663.2 L717.3 664.0 L717.9 664.8 L718.5 665.7 L719.1 666.7 L719.7 667.6 L720.3 668.7 L721.0 669.7 L721.6 670.9 L722.2 672.0 L722.8 673.3 L723.4 674.6 L724.0 675.9 L724.6 677.3 L725.3 678.7 L725.9 680.3 L726.5 681.8 L727.1 683.5 L727.7 685.2 L728.3 686.9 L728.9 688.7 L729.5 690.6 L730.2 692.5 L730.8 694.5 L731.4 696.5 L732.0 698.6 L732.6 700.6 L733.2 702.8 L733.8 704.9 L734.4 707.0 L735.1 709.2 L735.7 711.3 L736.3 713.4 L736.9 715.5 L737.5 717.5 L738.1 719.4 L738.7 721.3 L739.4 723.0 L740.0 724.6 L740.6 726.1 L741.2 727.4 L741.8 728.5 L742.4 729.4 L743.0 730.1 L743.6 730.6 L744.3 730.9 L744.9 731.0 L745.5 730.9 L746.1 730.7 L746.7 730.3 L747.3 729.8 L747.9 729.2 L748.6 728.4 L749.2 727.5 L749.8 726.5 L750.4 725.4 L751.0 724.2 L751.6 722.8 L752.2 721.4 L752.8 719.9 L753.5 718.3 L754.1 716.6 L754.7 714.8 L755.3 713.0 L755.9 711.1 L756.5 709.2 L757.1 707.2 L757.7 705.2 L758.4 703.2 L759.0 701.1 L759.6 699.0 L760.2 696.9 L760.8 694.7 L761.4 692.6 L762.0 690.5 L762.7 688.3 L763.3 686.2 L763.9 684.1 L764.5 682.0 L765.1 679.9 L765.7 677.8 L766.3 675.8 L766.9 673.8 L767.6 671.8 L768.2 669.8 L768.8 667.9 L769.4 666.0 L770.0 664.1 L770.6 662.2 L771.2 660.4 L771.8 658.7 L772.5 656.9 L773.1 655.2 L773.7 653.6 L774.3 651.9 L774.9 650.3 L775.5 648.8 L776.1 647.3 L776.8 645.8 L777.4 644.3 L778.0 642.9 L778.6 641.5 L779.2 640.2 L779.8 638.9 L780.4 637.6 L781.0 636.4 L781.7 635.2 L782.3 634.0 L782.9 632.9 L783.5 631.7 L784.1 630.7 L784.7 629.6 L785.3 628.6 L786.0 627.6 L786.6 626.6 L787.2 625.7 L787.8 624.8 L788.4 623.9 L789.0 623.1 L789.6 622.2 L790.2 621.4 L790.9 620.7 L791.5 619.9 L792.1 619.2 L792.7 618.5 L793.3 617.8 L793.9 617.1 L794.5 616.5 L795.1 615.9 L795.8 615.3 L796.4 614.7 L797.0 614.2 L797.6 613.6 L798.2 613.1 L798.8 612.6 L799.4 612.1 L800.1 611.7 L800.7 611.2 L801.3 610.8 L801.9 610.4 L802.5 610.0 L803.1 609.6 L803.7 609.3 L804.3 608.9 L805.0 608.6 L805.6 608.3 L806.2 608.0 L806.8 607.7 L807.4 607.5 L808.0 607.2 L808.6 607.0 L809.2 606.8 L809.9 606.6 L810.5 606.4 L811.1 606.2 L811.7 606.1 L812.3 605.9 L812.9 605.8 L813.5 605.7 L814.2 605.6 L814.8 605.5 L815.4 605.4 L816.0 605.3 L816.6 605.3 L817.2 605.3 L817.8 605.2 L818.4 605.2 L819.1 605.2 L819.7 605.2 L820.3 605.3 L820.9 605.3 L821.5 605.3 L822.1 605.4 L822.7 605.5 L823.4 605.5 L824.0 605.6 L824.6 605.7 L825.2 605.8 L825.8 605.9 L826.4 606.1 L827.0 606.2 L827.6 606.3 L828.3 606.5 L828.9 606.7 L829.5 606.8 L830.1 607.0 L830.7 607.2 L831.3 607.4 L831.9 607.7 L832.5 607.9 L833.2 608.1 L833.8 608.4 L834.4 608.7 L835.0 609.0 L835.6 609.3 L836.2 609.6 L836.8 609.9 L837.5 610.2 L838.1 610.6 L838.7 610.9 L839.3 611.3 L839.9 611.7 L840.5 612.1 L841.1 612.5 L841.7 612.9 L842.4 613.4 L843.0 613.8 L843.6 614.3 L844.2 614.8 L844.8 615.3 L845.4 615.8 L846.0 616.3 L846.7 616.9 L847.3 617.5 L847.9 618.1 L848.5 618.7 L849.1 619.3 L849.7 619.9 L850.3 620.6 L850.9 621.3 L851.6 622.0 L852.2 622.7 L852.8 623.4 L853.4 624.2 L854.0 625.0 L854.6 625.8 L855.2 626.6 L855.8 627.5 L856.5 628.3 L857.1 629.2 L857.7 630.1 L858.3 631.1 L858.9 632.1 L859.5 633.0 L860.1 634.1 L860.8 635.1 L861.4 636.2 L862.0 637.2 L862.6 638.4 L863.2 639.5 L863.8 640.7 L864.4 641.9 L865.0 643.1 L865.7 644.3 L866.3 645.6 L866.9 646.9 L867.5 648.3 L868.1 649.6 L868.7 651.0 L869.3 652.4 L869.9 653.9 L870.6 655.3 L871.2 656.8 L871.8 658.3 L872.4 659.9 L873.0 661.4 L873.6 663.0 L874.2 664.6 L874.9 666.3 L875.5 667.9 L876.1 669.6 L876.7 671.3 L877.3 673.0 L877.9 674.7 L878.5 676.4 L879.1 678.1 L879.8 679.9 L880.4 681.6 L881.0 683.4 L881.6 685.1 L882.2 686.8 L882.8 688.6 L883.4 690.3 L884.1 692.0 L884.7 693.7 L885.3 695.3 L885.9 696.9 L886.5 698.5 L887.1 700.1 L887.7 701.6 L888.3 703.1 L889.0 704.5 L889.6 705.9 L890.2 707.2 L890.8 708.4 L891.4 709.6 L892.0 710.7 L892.6 711.7 L893.2 712.7 L893.9 713.6 L894.5 714.3 L895.1 715.0 L895.7 715.6 L896.3 716.1 L896.9 716.5 L897.5 716.8 L898.2 717.0 L898.8 717.1 L899.4 717.1 L900.0 717.0 L900.6 716.8 L901.2 716.6 L901.8 716.3 L902.4 716.0 L903.1 715.6 L903.7 715.1 L904.3 714.6 L904.9 713.9 L905.5 713.3 L906.1 712.5 L906.7 711.8 L907.4 710.9 L908.0 710.0 L908.6 709.1 L909.2 708.1 L909.8 707.1 L910.4 706.0 L911.0 704.9 L911.6 703.7 L912.3 702.5 L912.9 701.3 L913.5 700.1 L914.1 698.8 L914.7 697.5 L915.3 696.2 L915.9 694.8 L916.5 693.4 L917.2 692.1 L917.8 690.7 L918.4 689.3 L919.0 687.9 L919.6 686.5 L920.2 685.0 L920.8 683.6 L921.5 682.2 L922.1 680.8 L922.7 679.4 L923.3 677.9 L923.9 676.5 L924.5 675.1 L925.1 673.7 L925.7 672.3 L926.4 671.0 L927.0 669.6 L927.6 668.2 L928.2 666.9 L928.8 665.6 L929.4 664.3 L930.0 663.0 L930.6 661.7 L931.3 660.4" stroke="#ff2030" stroke-width="0.9" fill="none" stroke-linejoin="round"/></g><rect x="73.05" y="549.85" width="1.75" height="188.05" fill="#000"/><rect x="73.05" y="549.85" width="982.95" height="1.95" fill="#0a0a0a"/><rect x="73.05" y="736.2" width="982.95" height="1.7" fill="#0a0a0a"/><rect x="1054.8" y="549.85" width="1.2" height="188.05" fill="#111"/><rect x="1053.8" y="551.8" width="1" height="184.4" fill="#d8d8d8"/><path d="M74.5 578.3 V619" stroke="#1a1aff" stroke-width="1.5" fill="none"/><path d="M70.0 736.90 H73.2 M70.0 718.35 H73.2 M70.0 699.80 H73.2 M70.0 681.25 H73.2 M70.0 662.70 H73.2 M70.0 644.15 H73.2 M70.0 625.60 H73.2 M70.0 607.05 H73.2 M70.0 588.50 H73.2 M70.0 569.95 H73.2 M74.40 737.5 V741.6 M196.12 737.5 V741.6 M318.75 737.5 V741.6 M441.38 737.5 V741.6 M564.00 737.5 V741.6 M686.62 737.5 V741.6 M809.25 737.5 V741.6 M931.88 737.5 V741.6 M1053.30 737.5 V741.6" stroke="#222" stroke-width="1" fill="none"/></svg>
<div style="top:731.10px;font-size:9px;line-height:12px;color:#202020;letter-spacing:-0.3px;white-space:nowrap;right:1199.4px;text-align:right;">0</div>
<div style="top:712.55px;font-size:9px;line-height:12px;color:#202020;letter-spacing:-0.3px;white-space:nowrap;right:1199.4px;text-align:right;">10</div>
<div style="top:694.00px;font-size:9px;line-height:12px;color:#202020;letter-spacing:-0.3px;white-space:nowrap;right:1199.4px;text-align:right;">20</div>
<div style="top:675.45px;font-size:9px;line-height:12px;color:#202020;letter-spacing:-0.3px;white-space:nowrap;right:1199.4px;text-align:right;">30</div>
<div style="top:656.90px;font-size:9px;line-height:12px;color:#202020;letter-spacing:-0.3px;white-space:nowrap;right:1199.4px;text-align:right;">40</div>
<div style="top:638.35px;font-size:9px;line-height:12px;color:#202020;letter-spacing:-0.3px;white-space:nowrap;right:1199.4px;text-align:right;">50</div>
<div style="top:619.80px;font-size:9px;line-height:12px;color:#202020;letter-spacing:-0.3px;white-space:nowrap;right:1199.4px;text-align:right;">60</div>
<div style="top:601.25px;font-size:9px;line-height:12px;color:#202020;letter-spacing:-0.3px;white-space:nowrap;right:1199.4px;text-align:right;">70</div>
<div style="top:582.70px;font-size:9px;line-height:12px;color:#202020;letter-spacing:-0.3px;white-space:nowrap;right:1199.4px;text-align:right;">80</div>
<div style="top:564.15px;font-size:9px;line-height:12px;color:#202020;letter-spacing:-0.3px;white-space:nowrap;right:1199.4px;text-align:right;">90</div>
<div style="top:740.80px;font-size:9px;line-height:12px;color:#202020;letter-spacing:-0.3px;white-space:nowrap;left:-76.0px;width:300px;text-align:center;">300</div>
<div style="top:740.80px;font-size:9px;line-height:12px;color:#202020;letter-spacing:-0.3px;white-space:nowrap;left:46.625px;width:300px;text-align:center;">400</div>
<div style="top:740.80px;font-size:9px;line-height:12px;color:#202020;letter-spacing:-0.3px;white-space:nowrap;left:169.25px;width:300px;text-align:center;">500</div>
<div style="top:740.80px;font-size:9px;line-height:12px;color:#202020;letter-spacing:-0.3px;white-space:nowrap;left:291.875px;width:300px;text-align:center;">600</div>
<div style="top:740.80px;font-size:9px;line-height:12px;color:#202020;letter-spacing:-0.3px;white-space:nowrap;left:414.5px;width:300px;text-align:center;">700</div>
<div style="top:740.80px;font-size:9px;line-height:12px;color:#202020;letter-spacing:-0.3px;white-space:nowrap;left:537.125px;width:300px;text-align:center;">800</div>
<div style="top:740.80px;font-size:9px;line-height:12px;color:#202020;letter-spacing:-0.3px;white-space:nowrap;left:659.75px;width:300px;text-align:center;">900</div>
<div style="top:740.80px;font-size:9px;line-height:12px;color:#202020;letter-spacing:-0.3px;white-space:nowrap;left:782.375px;width:300px;text-align:center;">1000</div>
<div style="top:740.80px;font-size:9px;line-height:12px;color:#202020;letter-spacing:-0.3px;white-space:nowrap;left:902.5px;width:300px;text-align:center;">1100</div>
<div style="top:751.70px;font-size:9px;line-height:12px;color:#202020;letter-spacing:-0.3px;white-space:nowrap;left:411.5px;width:300px;text-align:center;">Wavelength (nm)</div>
<div style="left:-102.6px;top:640.2px;width:300px;height:12px;line-height:12px;text-align:center;font-size:9px;letter-spacing:-0.3px;color:#202020;transform:rotate(-90deg);white-space:nowrap;">Reflectance (%)</div>
<div style="left:74.5px;top:552.5px;width:75px;height:12.5px;background:#fff;border-right:1px solid #6e6e6e;border-bottom:1px solid #6e6e6e;"></div>
<div style="top:552.40px;font-size:8.8px;line-height:12px;color:#1a1aff;letter-spacing:-0.3px;white-space:nowrap;left:77.7px;">Unknown-(0.0, 0.0)</div>
<div style="left:74.5px;top:565.5px;width:123.5px;height:13px;background:#fff;border:1px solid #8a8a8a;border-left:none;"></div>
<div style="top:566.10px;font-size:8.8px;line-height:12px;color:#ff2030;letter-spacing:-0.2px;white-space:nowrap;left:77.7px;">Unknown-(0.0, 0.0) (Calculated)</div>
</div></body></html>
